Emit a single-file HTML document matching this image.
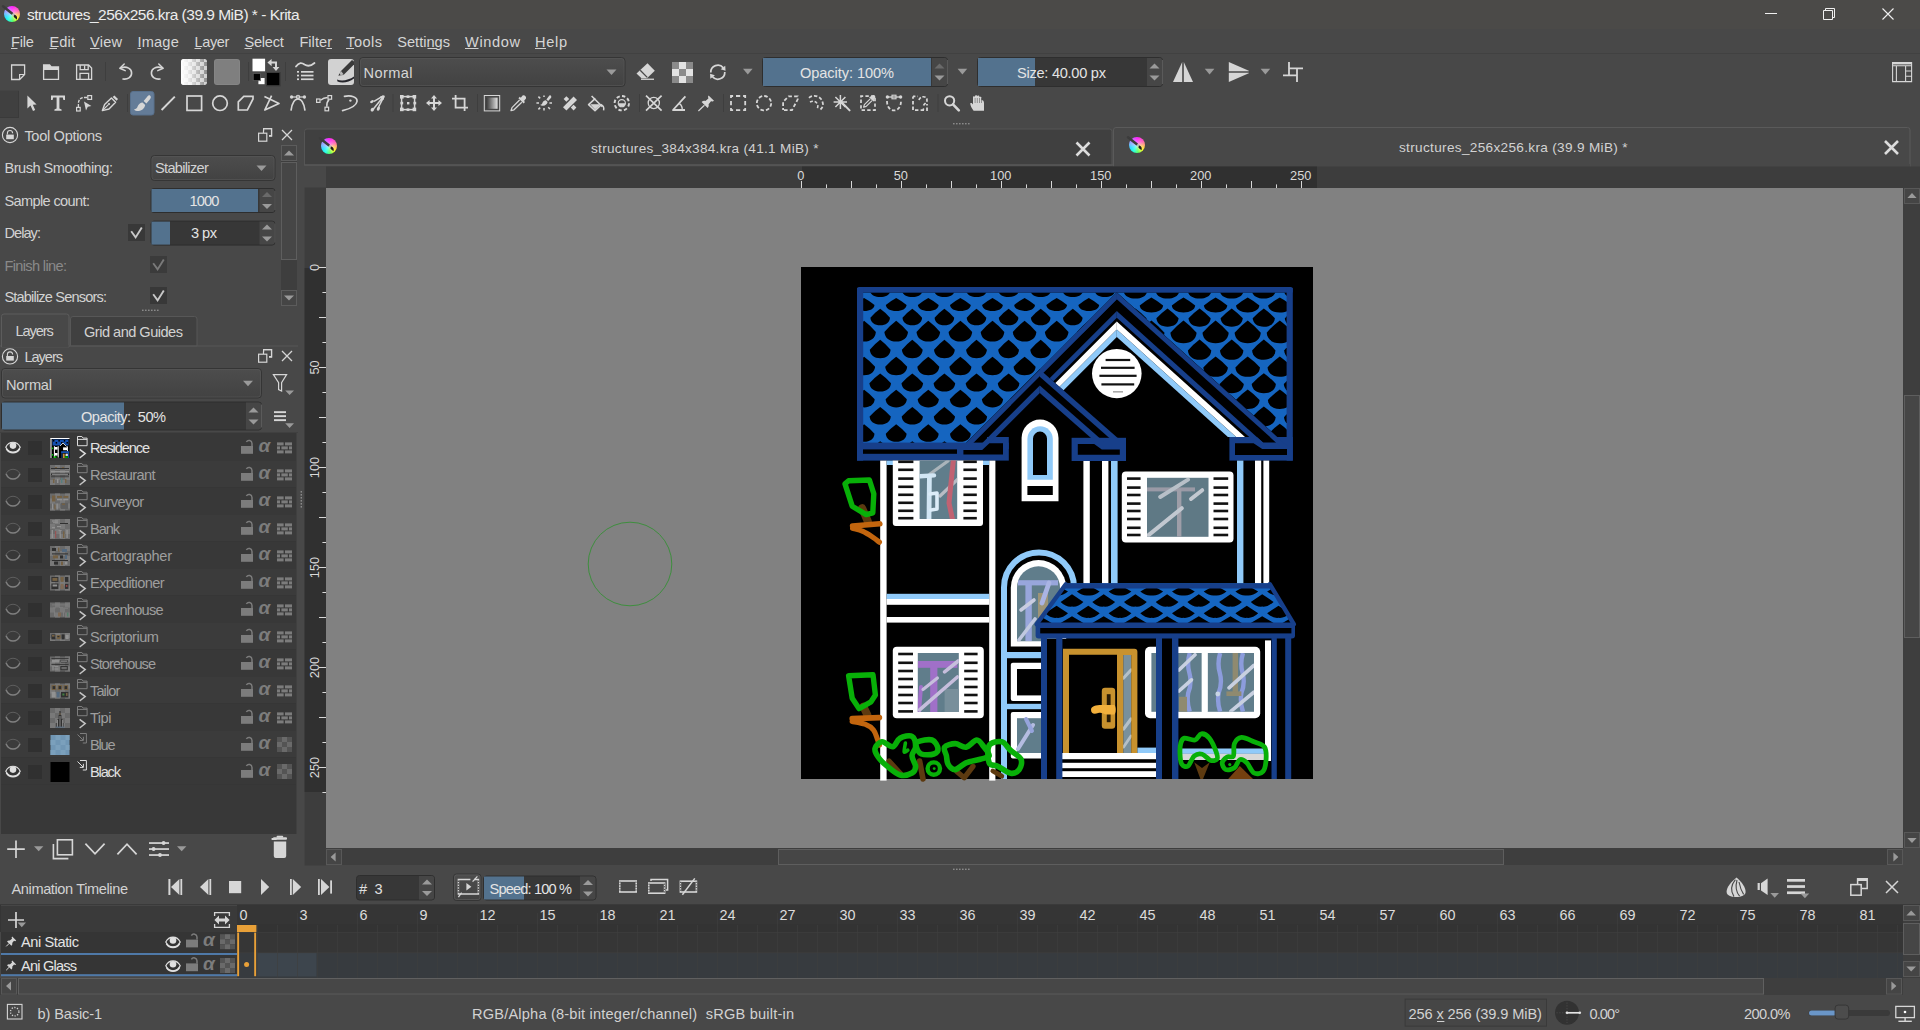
<!DOCTYPE html>
<html lang="en"><head><meta charset="utf-8"><title>structures_256x256.kra (39.9 MiB) * - Krita</title>
<style>
html,body{margin:0;padding:0;background:#484848;overflow:hidden}
body{width:1920px;height:1030px}
svg{display:block}
body{position:relative}
.klogo{position:absolute;border-radius:50%;background:linear-gradient(135deg,#a070ff,#ff50c8 40%,#ffd050 72%,#40ffb0);background:radial-gradient(circle at 50% 52%,rgba(255,255,255,.6) 0,rgba(255,255,255,.25) 32%,rgba(255,255,255,0) 62%),conic-gradient(from 0deg,#ff22ff 0deg,#ff66b8 60deg,#ffc060 100deg,#ffff28 132deg,#5cff64 172deg,#22ffe0 210deg,#22e4ff 240deg,#86b0ff 282deg,#c66cff 322deg,#ff22ff 360deg)}
text{font-family:"Liberation Sans",sans-serif;}
</style></head><body>
<svg width="1920" height="1030" viewBox="0 0 1920 1030">
<defs>
<linearGradient id="cg" x1="0" y1="0" x2="0" y2="1"><stop offset="0" stop-color="#4d4d4d"/><stop offset="1" stop-color="#424242"/></linearGradient>
<linearGradient id="gr1" x1="0" y1="0" x2="1" y2="0"><stop offset="0" stop-color="#3a3a3a"/><stop offset="1" stop-color="#e0e0e0"/></linearGradient>
<linearGradient id="gsw" x1="0" y1="0" x2="1" y2="0"><stop offset="0" stop-color="#fff"/><stop offset="0.3" stop-color="#fff" stop-opacity="0.8"/><stop offset="1" stop-color="#fff" stop-opacity="0"/></linearGradient>
<linearGradient id="kg" gradientUnits="objectBoundingBox" x1="0" y1="0.2" x2="1" y2="0.8"><stop offset="0" stop-color="#3a6cf0"/><stop offset="0.25" stop-color="#a040f0"/><stop offset="0.5" stop-color="#ff30d0"/><stop offset="0.8" stop-color="#ff6090"/><stop offset="1" stop-color="#ffb040"/></linearGradient>
<linearGradient id="kw" x1="0.2" y1="0" x2="0.5" y2="1"><stop offset="0.35" stop-color="#fff" stop-opacity="0"/><stop offset="0.6" stop-color="#20e0ff" stop-opacity="0.9"/><stop offset="0.8" stop-color="#30f080"/><stop offset="1" stop-color="#f0f040"/></linearGradient>
<pattern id="chk" width="8" height="8" patternUnits="userSpaceOnUse"><rect width="8" height="8" fill="#fff"/><rect width="4" height="4" fill="#b0b0b0"/><rect x="4" y="4" width="4" height="4" fill="#b0b0b0"/></pattern>
<pattern id="chkd" width="10" height="10" patternUnits="userSpaceOnUse"><rect width="10" height="10" fill="#6e6e6e"/><rect width="5" height="5" fill="#585858"/><rect x="5" y="5" width="5" height="5" fill="#585858"/></pattern>
</defs>
<g id="titlebar">
<rect x="0" y="0" width="1920" height="29" fill="#4b4a48"/>
<text x="27" y="20" font-size="15.5" fill="#ececec" textLength="272.5" lengthAdjust="spacing" xml:space="preserve">structures_256x256.kra (39.9 MiB) * - Krita</text>
<rect x="1765" y="13" width="12" height="1" fill="#f0f0f0"/>
<path d="M1823.5 10.5 h9 v9 h-9z" fill="none" stroke="#f0f0f0" stroke-width="1" stroke-linejoin="miter" stroke-linecap="butt"/>
<path d="M1825.5 10.5 v-2 h9 v9 h-2" fill="none" stroke="#f0f0f0" stroke-width="1" stroke-linejoin="miter" stroke-linecap="butt"/>
<path d="M1882.5 8.5 L1893.5 19.5 M1893.5 8.5 L1882.5 19.5" fill="none" stroke="#f0f0f0" stroke-width="1.1" stroke-linejoin="miter" stroke-linecap="butt"/>
</g>
<g id="menubar">
<rect x="0" y="29" width="1920" height="24" fill="#484848"/>
<rect x="0" y="53" width="1920" height="1" fill="#414141"/>
<text x="11" y="47" font-size="14.6" fill="#d6d6d6" textLength="22.75" lengthAdjust="spacing" xml:space="preserve">File</text>
<rect x="11" y="48" width="6.5" height="1" fill="#d0d0d0"/>
<text x="49.4" y="47" font-size="14.6" fill="#d6d6d6" textLength="25.6" lengthAdjust="spacing" xml:space="preserve">Edit</text>
<rect x="49.5" y="48" width="7.5" height="1" fill="#d0d0d0"/>
<text x="90" y="47" font-size="14.6" fill="#d6d6d6" textLength="32" lengthAdjust="spacing" xml:space="preserve">View</text>
<rect x="90" y="48" width="9.5" height="1" fill="#d0d0d0"/>
<text x="137.5" y="47" font-size="14.6" fill="#d6d6d6" textLength="41.25" lengthAdjust="spacing" xml:space="preserve">Image</text>
<rect x="137.5" y="48" width="3.5" height="1" fill="#d0d0d0"/>
<text x="194.4" y="47" font-size="14.6" fill="#d6d6d6" textLength="35" lengthAdjust="spacing" xml:space="preserve">Layer</text>
<rect x="194.5" y="48" width="6.5" height="1" fill="#d0d0d0"/>
<text x="244.4" y="47" font-size="14.6" fill="#d6d6d6" textLength="39.35" lengthAdjust="spacing" xml:space="preserve">Select</text>
<rect x="244.5" y="48" width="7.5" height="1" fill="#d0d0d0"/>
<text x="299.4" y="47" font-size="14.6" fill="#d6d6d6" textLength="32.6" lengthAdjust="spacing" xml:space="preserve">Filter</text>
<rect x="326.5" y="48" width="5.5" height="1" fill="#d0d0d0"/>
<text x="346.25" y="47" font-size="14.6" fill="#d6d6d6" textLength="35.75" lengthAdjust="spacing" xml:space="preserve">Tools</text>
<rect x="346" y="48" width="8" height="1" fill="#d0d0d0"/>
<text x="397.25" y="47" font-size="14.6" fill="#d6d6d6" textLength="52.75" lengthAdjust="spacing" xml:space="preserve">Settings</text>
<rect x="427.5" y="48" width="8.5" height="1" fill="#d0d0d0"/>
<text x="465" y="47" font-size="14.6" fill="#d6d6d6" textLength="55" lengthAdjust="spacing" xml:space="preserve">Window</text>
<rect x="465" y="48" width="13.5" height="1" fill="#d0d0d0"/>
<text x="535" y="47" font-size="14.6" fill="#d6d6d6" textLength="32" lengthAdjust="spacing" xml:space="preserve">Help</text>
<rect x="535" y="48" width="11" height="1" fill="#d0d0d0"/>
</g>
<g id="toolbar1">
<path d="M11.6 65 h13 v9.5 l-5 5 h-8z" fill="none" stroke="#d6d6d6" stroke-width="1.3" stroke-linejoin="miter" stroke-linecap="butt"/>
<path d="M24.6 74.5 h-5 v5" fill="none" stroke="#d6d6d6" stroke-width="1.2" stroke-linejoin="miter" stroke-linecap="butt"/>
<path d="M43.6 79.4 v-14.4 h6 l1.6 2 h7.3 v12.4z" fill="none" stroke="#d6d6d6" stroke-width="1.3" stroke-linejoin="miter" stroke-linecap="butt"/>
<path d="M43.6 65 h6 l1.6 2 h7.3 v3 h-14.9z" fill="#d6d6d6"/>
<path d="M76.6 65 h12 l3 3 v11.4 h-15z" fill="none" stroke="#d6d6d6" stroke-width="1.3" stroke-linejoin="miter" stroke-linecap="butt"/>
<path d="M80.2 65 v4.6 h8 v-4.6 M84.6 65.5 v3.5" fill="none" stroke="#d6d6d6" stroke-width="1.3" stroke-linejoin="miter" stroke-linecap="butt"/>
<path d="M80 79.4 v-6 h8.6 v6" fill="none" stroke="#d6d6d6" stroke-width="1.3" stroke-linejoin="miter" stroke-linecap="butt"/>
<rect x="105" y="62" width="1" height="19" fill="#3e3e3e"/>
<path d="M121.5 67.6 C127 66.2 131.6 68.5 131.6 73 C131.6 77.5 127.5 79.6 123 79" fill="none" stroke="#d6d6d6" stroke-width="1.6" stroke-linejoin="miter" stroke-linecap="round"/>
<path d="M124.2 64 L119.8 68.2 L125.2 70.6" fill="none" stroke="#d6d6d6" stroke-width="1.5" stroke-linejoin="round" stroke-linecap="round"/>
<path d="M161.5 67.6 C156 66.2 151.4 68.5 151.4 73 C151.4 77.5 155.5 79.6 160 79" fill="none" stroke="#d6d6d6" stroke-width="1.6" stroke-linejoin="miter" stroke-linecap="round"/>
<path d="M158.8 64 L163.2 68.2 L157.8 70.6" fill="none" stroke="#d6d6d6" stroke-width="1.5" stroke-linejoin="round" stroke-linecap="round"/>
<clipPath id="cp1"><rect x="181" y="59" width="26" height="26" rx="3"/></clipPath>
<g clip-path="url(#cp1)">
<rect x="181" y="59" width="26" height="26" fill="#8c8c8c"/>
<rect x="180" y="58" width="4" height="4" fill="#cfcfcf"/>
<rect x="180" y="66" width="4" height="4" fill="#cfcfcf"/>
<rect x="180" y="74" width="4" height="4" fill="#cfcfcf"/>
<rect x="180" y="82" width="4" height="4" fill="#cfcfcf"/>
<rect x="184" y="62" width="4" height="4" fill="#cfcfcf"/>
<rect x="184" y="70" width="4" height="4" fill="#cfcfcf"/>
<rect x="184" y="78" width="4" height="4" fill="#cfcfcf"/>
<rect x="188" y="58" width="4" height="4" fill="#cfcfcf"/>
<rect x="188" y="66" width="4" height="4" fill="#cfcfcf"/>
<rect x="188" y="74" width="4" height="4" fill="#cfcfcf"/>
<rect x="188" y="82" width="4" height="4" fill="#cfcfcf"/>
<rect x="192" y="62" width="4" height="4" fill="#cfcfcf"/>
<rect x="192" y="70" width="4" height="4" fill="#cfcfcf"/>
<rect x="192" y="78" width="4" height="4" fill="#cfcfcf"/>
<rect x="196" y="58" width="4" height="4" fill="#cfcfcf"/>
<rect x="196" y="66" width="4" height="4" fill="#cfcfcf"/>
<rect x="196" y="74" width="4" height="4" fill="#cfcfcf"/>
<rect x="196" y="82" width="4" height="4" fill="#cfcfcf"/>
<rect x="200" y="62" width="4" height="4" fill="#cfcfcf"/>
<rect x="200" y="70" width="4" height="4" fill="#cfcfcf"/>
<rect x="200" y="78" width="4" height="4" fill="#cfcfcf"/>
<rect x="204" y="58" width="4" height="4" fill="#cfcfcf"/>
<rect x="204" y="66" width="4" height="4" fill="#cfcfcf"/>
<rect x="204" y="74" width="4" height="4" fill="#cfcfcf"/>
<rect x="204" y="82" width="4" height="4" fill="#cfcfcf"/>
<rect x="181" y="59" width="26" height="26" fill="url(#gsw)"/>
</g>
<rect x="214" y="59" width="26" height="26" fill="#858585" rx="3"/>
<rect x="215" y="60" width="24" height="24" fill="#7f7f7f" rx="2"/>
<rect x="248" y="62" width="1" height="19" fill="#3e3e3e"/>
<rect x="252.5" y="58.7" width="12.6" height="12.6" fill="#ffffff"/>
<rect x="267" y="73" width="12.6" height="12.4" fill="#000000"/>
<rect x="266.5" y="72.5" width="13.6" height="13.4" fill="none" stroke="#3a3a3a" stroke-width="1"/>
<rect x="258.4" y="78" width="6.2" height="6.2" fill="#ffffff"/>
<rect x="253.6" y="73.8" width="6.4" height="6.4" fill="#000000"/>
<rect x="253.1" y="73.3" width="7.4" height="7.4" fill="none" stroke="#555" stroke-width="0.8"/>
<path d="M267.4 62.6 L271.6 59 V61.6 H277 V67 H279.4 L276 71 L272.6 67 H275 V63.6 H271.6 V66.2z" fill="#d6d6d6"/>
<rect x="285" y="62" width="1" height="19" fill="#3e3e3e"/>
<path d="M296 66.5 C299 62 302 62.5 304.5 64.5 C307.5 66.5 311 66 314.5 63" fill="none" stroke="#d6d6d6" stroke-width="1.8" stroke-linejoin="miter" stroke-linecap="round"/>
<rect x="297" y="71" width="2" height="1.7" fill="#d6d6d6"/>
<rect x="301" y="71" width="12.5" height="1.7" fill="#d6d6d6"/>
<rect x="297" y="74.7" width="2" height="1.7" fill="#d6d6d6"/>
<rect x="301" y="74.7" width="12.5" height="1.7" fill="#d6d6d6"/>
<rect x="297" y="78.4" width="2" height="1.7" fill="#d6d6d6"/>
<rect x="301" y="78.4" width="12.5" height="1.7" fill="#d6d6d6"/>
<rect x="328" y="59" width="26" height="26" fill="#d2d2d2" rx="3"/>
<path d="M337 79.5 C342 81.5 349 80 354 76.5 L354 78.5 C349 82.5 342 83.5 337.5 81.5z" fill="#26262c"/>
<path d="M338.5 75.5 L341 71 L352 60 L354 61.5 L354 64.5 L343.5 75 z" fill="#3a3a3a"/>
<path d="M338.5 75.5 L341 71 L343.8 74.6z" fill="#bbb"/>
<path d="M338.5 75.5 l1 -1.8 l1 1.2z" fill="#222"/>
<rect x="359.5" y="57.5" width="265.5" height="29" fill="url(#cg)" stroke="#353535" stroke-width="1" rx="3.5"/>
<rect x="360.5" y="58.5" width="263.5" height="27" fill="none" stroke="#585858" stroke-width="1" rx="2.5" opacity="0.6"/>
<path d="M606.5 69.5 L616.5 69.5 L611.5 75Z" fill="#9a9a9a"/>
<text x="363.5" y="77.5" font-size="14.6" fill="#d6d6d6" textLength="49" lengthAdjust="spacing" xml:space="preserve">Normal</text>
<path d="M647.5 63.2 L654.8 70.8 L647 78.2 H641.5 L636.5 73.5z" fill="#d6d6d6"/>
<rect x="641" y="78.6" width="13" height="1.3" fill="#d6d6d6"/>
<path d="M640.2 70.2 L647.2 77.4" fill="none" stroke="#484848" stroke-width="1.3" stroke-linejoin="miter" stroke-linecap="butt"/>
<rect x="672" y="62" width="7" height="7" fill="#8a8a8a"/>
<rect x="672" y="69" width="7" height="7" fill="#e2e2e2"/>
<rect x="672" y="76" width="7" height="7" fill="#8a8a8a"/>
<rect x="679" y="62" width="7" height="7" fill="#e2e2e2"/>
<rect x="679" y="69" width="7" height="7" fill="#8a8a8a"/>
<rect x="679" y="76" width="7" height="7" fill="#e2e2e2"/>
<rect x="686" y="62" width="7" height="7" fill="#8a8a8a"/>
<rect x="686" y="69" width="7" height="7" fill="#e2e2e2"/>
<rect x="686" y="76" width="7" height="7" fill="#8a8a8a"/>
<path d="M710.8 72.44 A7 7 0 0 1 723.32 67.89" fill="none" stroke="#d6d6d6" stroke-width="1.7" stroke-linejoin="miter" stroke-linecap="butt"/>
<path d="M725.53 70.73 L725.23 65.63 L720.66 69.2Z" fill="#d6d6d6"/>
<path d="M724.8 71.96 A7 7 0 0 1 712.28 76.51" fill="none" stroke="#d6d6d6" stroke-width="1.7" stroke-linejoin="miter" stroke-linecap="butt"/>
<path d="M710.07 73.67 L710.37 78.77 L714.94 75.2Z" fill="#d6d6d6"/>
<path d="M743 68.8 L752.6 68.8 L747.8 74.6Z" fill="#9a9a9a"/>
<rect x="762.5" y="57.5" width="185" height="29" fill="#373737" stroke="#2e2e2e" stroke-width="1" rx="3"/>
<path d="M763 58 H931 V86 H763 Z" fill="#53728e"/>
<path d="M932 58 H945 a2 2 0 0 1 2 2 V84 a2 2 0 0 1 -2 2 H932Z" fill="#464646"/>
<line x1="947.5" y1="60" x2="947.5" y2="84" stroke="#5a5a5a" stroke-width="1" stroke-linecap="butt"/>
<path d="M934.5 68.5 L944.5 68.5 L939.5 63.5Z" fill="#6a6a6a"/>
<path d="M934.5 75.5 L944.5 75.5 L939.5 80.5Z" fill="#9a9a9a"/>
<text x="800" y="78" font-size="14.6" fill="#e4e4e4" textLength="94" lengthAdjust="spacing" xml:space="preserve">Opacity: 100%</text>
<path d="M957.6 68.8 L967.2 68.8 L962.4 74.6Z" fill="#9a9a9a"/>
<rect x="977.5" y="57.5" width="185" height="29" fill="#373737" stroke="#2e2e2e" stroke-width="1" rx="3"/>
<path d="M978 58 H1035 V86 H978 Z" fill="#53728e"/>
<path d="M1147 58 H1160 a2 2 0 0 1 2 2 V84 a2 2 0 0 1 -2 2 H1147Z" fill="#464646"/>
<line x1="1162.5" y1="60" x2="1162.5" y2="84" stroke="#5a5a5a" stroke-width="1" stroke-linecap="butt"/>
<path d="M1149.5 68.5 L1159.5 68.5 L1154.5 63.5Z" fill="#9a9a9a"/>
<path d="M1149.5 75.5 L1159.5 75.5 L1154.5 80.5Z" fill="#9a9a9a"/>
<text x="1017" y="78" font-size="14.6" fill="#e4e4e4" textLength="89" lengthAdjust="spacing" xml:space="preserve">Size: 40.00 px</text>
<path d="M1182.2 62 V82 H1173z" fill="#d6d6d6"/>
<path d="M1183.8 62 V82 H1193z" fill="#d6d6d6"/>
<path d="M1204.8 68.8 L1214.4 68.8 L1209.6 74.6Z" fill="#9a9a9a"/>
<path d="M1228.8 62 L1248.8 70.8 V71.2 H1228.8z" fill="#d6d6d6"/>
<path d="M1228.8 82 L1248.8 73.2 V72.8 H1228.8z" fill="#d6d6d6"/>
<path d="M1260.6 68.8 L1270.2 68.8 L1265.4 74.6Z" fill="#9a9a9a"/>
<path d="M1289 62 V75.3 M1283 75.3 H1297.8 M1297 82 V68.3 M1289 68.3 H1303" fill="none" stroke="#d6d6d6" stroke-width="1.8" stroke-linejoin="miter" stroke-linecap="butt"/>
<path d="M1892.6 62.6 h19 v19 h-19z M1892.6 65.8 h19 M1896.4 65.8 v15.8 M1905.6 65.8 v15.8 M1905.6 71 h6 M1905.6 76.2 h6" fill="none" stroke="#d6d6d6" stroke-width="1.1" stroke-linejoin="miter" stroke-linecap="butt"/>
<rect x="1892" y="62" width="20" height="2.4" fill="#d6d6d6"/>
</g>
<g id="toolbox">
<rect x="0" y="90" width="19" height="28" fill="#404040"/>
<rect x="18" y="90" width="1" height="28" fill="#3a3a3a"/>
<rect x="0" y="117" width="19" height="1" fill="#3a3a3a"/>
<rect x="0" y="90" width="19" height="1" fill="#444"/>
<path d="M27.4 95.4 V108.6 L30.5 105.6 L33 111 L35.2 110 L32.8 104.8 L36.6 104.6z" fill="#d6d6d6"/>
<path d="M51 95.4 H65 V100 H63.4 L62.8 97.6 H59.4 V108.6 L61.6 109.4 V110.8 H54.4 V109.4 L56.6 108.6 V97.6 H53.2 L52.6 100 H51z" fill="#d6d6d6"/>
<rect x="76.6" y="107.4" width="3.6" height="3.6" fill="none" stroke="#d6d6d6" stroke-width="1.2"/>
<rect x="87.8" y="95.6" width="3.8" height="3.8" fill="none" stroke="#d6d6d6" stroke-width="1.2"/>
<path d="M78.4 107 V103.5 C78.4 99.5 81 97.5 84.5 97.5 H87.5" fill="none" stroke="#d6d6d6" stroke-width="1.3" stroke-linejoin="miter" stroke-linecap="butt" stroke-dasharray="3 1.2"/>
<path d="M84 101.6 L91.4 106 L87.8 106.8 L86 110.4z" fill="#d6d6d6"/>
<path d="M102.4 110.6 L104.6 104.4 L111.4 98 L115.6 102.2 L109 109 z" fill="none" stroke="#d6d6d6" stroke-width="1.4" stroke-linejoin="round" stroke-linecap="butt"/>
<path d="M102.6 110.4 L108.4 104.6" fill="none" stroke="#d6d6d6" stroke-width="1.2" stroke-linejoin="miter" stroke-linecap="butt"/>
<circle cx="109" cy="104" r="1.1" fill="#d6d6d6"/>
<path d="M112.6 97 L114.4 95.4 L118 99 L116.6 100.8z" fill="#d6d6d6"/>
<rect x="127" y="94" width="1" height="18" fill="#3e3e3e"/>
<rect x="130.5" y="91.5" width="23.5" height="23.5" fill="#647c98" stroke="#58708c" stroke-width="1" rx="2.5"/>
<path d="M150 95.6 C151.4 96.6 151 98.4 149.6 99.8 L146.4 103.6 L143.6 101 L147 97 C148 95.6 149.2 95 150 95.6z" fill="#d6d6d6"/>
<path d="M145.6 104.4 L142.8 101.8" fill="none" stroke="#647c98" stroke-width="1" stroke-linejoin="miter" stroke-linecap="butt"/>
<path d="M142.6 102.4 L145.2 105 C144.6 108 142.4 110.6 138.6 110.9 C136.8 111 135 110.6 134 109.4 C136 109.4 137 108.4 137.6 106.6 C138.4 104 140.4 102.4 142.6 102.4z" fill="#d6d6d6"/>
<line x1="161.6" y1="110" x2="174.8" y2="96.6" stroke="#d6d6d6" stroke-width="1.9" stroke-linecap="butt"/>
<rect x="187" y="96" width="14.6" height="14.4" fill="none" stroke="#d6d6d6" stroke-width="1.7"/>
<circle cx="220" cy="103.2" r="7.3" fill="none" stroke="#d6d6d6" stroke-width="1.7"/>
<path d="M238.3 110 V101.8 L243.8 96.3 H253 V99 L247.4 110z" fill="none" stroke="#d6d6d6" stroke-width="1.7" stroke-linejoin="miter" stroke-linecap="butt"/>
<path d="M271.6 95.6 L264.8 110 L279 103.4 L264.4 96.6" fill="none" stroke="#d6d6d6" stroke-width="1.7" stroke-linejoin="round" stroke-linecap="butt"/>
<path d="M291 110.6 C292 103 294 99 298 99 C302 99 304 103 305 110.6" fill="none" stroke="#d6d6d6" stroke-width="1.7" stroke-linejoin="miter" stroke-linecap="butt"/>
<line x1="292.5" y1="97" x2="303.5" y2="97" stroke="#d6d6d6" stroke-width="1.2" stroke-linecap="butt"/>
<circle cx="291.6" cy="97" r="1.7" fill="#d6d6d6"/>
<circle cx="304.4" cy="97" r="1.7" fill="#d6d6d6"/>
<circle cx="298" cy="97" r="1.7" fill="none" stroke="#d6d6d6" stroke-width="1.1"/>
<rect x="316.6" y="99" width="3.4" height="3.4" fill="none" stroke="#d6d6d6" stroke-width="1.2"/>
<rect x="328" y="95.6" width="3.6" height="3.6" fill="none" stroke="#d6d6d6" stroke-width="1.2"/>
<rect x="325" y="107.2" width="3.6" height="3.6" fill="none" stroke="#d6d6d6" stroke-width="1.2"/>
<path d="M320.4 100.2 C323 98 325.5 97.4 327.6 97.4 M329 99.6 C327 101.5 326.6 104 326.8 106.8" fill="none" stroke="#d6d6d6" stroke-width="1.5" stroke-linejoin="miter" stroke-linecap="butt"/>
<path d="M344.5 96.4 C351 95 357.6 97 357 101.5 C356.4 106 349 109 342.6 110.6" fill="none" stroke="#d6d6d6" stroke-width="1.7" stroke-linejoin="miter" stroke-linecap="round"/>
<circle cx="350.4" cy="100.6" r="1.2" fill="#d6d6d6"/>
<path d="M383.6 95.6 L374 101.4 M384.2 96.2 L378.6 107 M383.8 96 L373.4 109" fill="none" stroke="#d6d6d6" stroke-width="1.5" stroke-linejoin="miter" stroke-linecap="butt"/>
<ellipse cx="372" cy="101.6" rx="2" ry="1.3" fill="#d6d6d6" transform="rotate(-25 372 101.6)"/>
<ellipse cx="378.4" cy="108.6" rx="1.5" ry="2.2" fill="#d6d6d6" transform="rotate(20 378.4 108.6)"/>
<ellipse cx="372.4" cy="109.6" rx="1.6" ry="2" fill="#d6d6d6" transform="rotate(40 372.4 109.6)"/>
<path d="M384.6 95.4 L380 96.4 L383.6 100z" fill="#d6d6d6"/>
<rect x="392.5" y="94" width="1" height="18" fill="#3e3e3e"/>
<rect x="401.6" y="96.6" width="13" height="13" fill="none" stroke="#d6d6d6" stroke-width="1.5"/>
<rect x="400" y="95" width="3.6" height="3.6" fill="#d6d6d6"/>
<rect x="412.6" y="95" width="3.6" height="3.6" fill="#d6d6d6"/>
<rect x="400" y="107.6" width="3.6" height="3.6" fill="#d6d6d6"/>
<rect x="412.6" y="107.6" width="3.6" height="3.6" fill="#d6d6d6"/>
<rect x="406.6" y="95.4" width="2.8" height="2.6" fill="#d6d6d6"/>
<rect x="406.6" y="108.4" width="2.8" height="2.6" fill="#d6d6d6"/>
<rect x="400.4" y="101.8" width="2.8" height="2.6" fill="#d6d6d6"/>
<rect x="413.4" y="101.8" width="2.8" height="2.6" fill="#d6d6d6"/>
<rect x="407" y="102" width="2.4" height="2.4" fill="#d6d6d6"/>
<path d="M434 95 L437 98.6 H435 V102 H438.4 V100 L442 103 L438.4 106 V104 H435 V107.4 H437 L434 111 L431 107.4 H433 V104 H429.6 V106 L426 103 L429.6 100 V102 H433 V98.6 H431z" fill="#d6d6d6"/>
<path d="M455.6 95 V107.6 H468 M452 98.6 H464.6 V111" fill="none" stroke="#d6d6d6" stroke-width="1.8" stroke-linejoin="miter" stroke-linecap="butt"/>
<rect x="477" y="94" width="1" height="18" fill="#3e3e3e"/>
<rect x="484.3" y="95.5" width="15.4" height="15.4" fill="none" stroke="#d6d6d6" stroke-width="1"/>
<rect x="486.4" y="97.6" width="11.2" height="11.2" fill="url(#gr1)"/>
<path d="M522.6 95.4 C524.4 94.6 526.6 96.4 526 98.4 L524 101 L525 102 L523.6 103.4 L518.4 98.2 L519.8 96.8 L520.8 97.8z" fill="#d6d6d6"/>
<path d="M519.6 100 L512 107.6 L511 110.6 L514 109.8 L521.8 102.2" fill="none" stroke="#d6d6d6" stroke-width="1.3" stroke-linejoin="round" stroke-linecap="butt"/>
<path d="M550.6 95.4 C551.8 96.2 551.4 97.6 550.4 98.6 L548.2 101 L546.4 99.4 L548.6 96.6 C549.2 95.6 550 95 550.6 95.4z" fill="#d6d6d6"/>
<path d="M545.8 100.2 L547.6 102 C547.2 104 545.6 105.6 543 105.8 C541.8 105.9 540.8 105.6 540 104.8 C541.4 104.8 542 104.2 542.4 103 C543 101.2 544.4 100.2 545.8 100.2z" fill="#d6d6d6"/>
<line x1="536.4" y1="103" x2="539" y2="103" stroke="#d6d6d6" stroke-width="1.5" stroke-linecap="butt"/>
<line x1="549.4" y1="103" x2="552" y2="103" stroke="#d6d6d6" stroke-width="1.5" stroke-linecap="butt"/>
<line x1="544" y1="108" x2="544" y2="110.6" stroke="#d6d6d6" stroke-width="1.5" stroke-linecap="butt"/>
<line x1="538.4" y1="96.6" x2="540.2" y2="98.4" stroke="#d6d6d6" stroke-width="1.5" stroke-linecap="butt"/>
<line x1="548.2" y1="107.2" x2="550" y2="109" stroke="#d6d6d6" stroke-width="1.5" stroke-linecap="butt"/>
<line x1="538.4" y1="109.4" x2="540.2" y2="107.6" stroke="#d6d6d6" stroke-width="1.5" stroke-linecap="butt"/>
<line x1="544" y1="95.4" x2="544" y2="97" stroke="#d6d6d6" stroke-width="1.5" stroke-linecap="butt"/>
<path d="M563 107.2 L573.6 96.6 L577 100 L566.4 110.6z" fill="#d6d6d6"/>
<path d="M563.6 99 L566.4 96.2 L569.2 99 L566.4 101.8z" fill="#d6d6d6"/>
<path d="M570.8 107.6 L573.6 104.8 L576.4 107.6 L573.6 110.4z" fill="#d6d6d6"/>
<path d="M591.6 96 L602.4 106.8 M595.4 98.4 L588.6 104.6 L595 110.6 L601.6 104.4" fill="none" stroke="#d6d6d6" stroke-width="1.6" stroke-linejoin="round" stroke-linecap="butt"/>
<path d="M590.2 104.2 H600.8 L595 109.6z" fill="#d6d6d6"/>
<path d="M601 104.6 C603 105.4 604.2 107.6 603.6 110.4" fill="none" stroke="#d6d6d6" stroke-width="1.5" stroke-linejoin="miter" stroke-linecap="butt"/>
<circle cx="621.8" cy="103.2" r="7.2" fill="none" stroke="#d6d6d6" stroke-width="1.9" stroke-dasharray="3.4 2.25"/>
<circle cx="621.8" cy="103.2" r="3.6" fill="none" stroke="#d6d6d6" stroke-width="1.1"/>
<path d="M618.2 103.2 A3.6 3.6 0 0 0 625.4 103.2z" fill="#d6d6d6"/>
<rect x="639" y="94" width="1" height="18" fill="#3e3e3e"/>
<circle cx="653.8" cy="103" r="5.6" fill="none" stroke="#d6d6d6" stroke-width="1.3"/>
<path d="M646 95.6 L661.6 110.6 M661.6 95.6 L646 110.6" fill="none" stroke="#d6d6d6" stroke-width="1.7" stroke-linejoin="miter" stroke-linecap="butt"/>
<path d="M685.4 96.4 L673 110 H685" fill="none" stroke="#d6d6d6" stroke-width="1.8" stroke-linejoin="round" stroke-linecap="butt"/>
<path d="M679.4 103.6 C681.4 105 682.4 107.4 682.2 110" fill="none" stroke="#d6d6d6" stroke-width="1.4" stroke-linejoin="miter" stroke-linecap="butt"/>
<path d="M708.6 95.4 L714 100.8 L712.8 101.6 L711 101.2 L708.6 104.2 C709 105.6 708.6 107 707.6 108 L701.6 102 C702.6 101 704 100.6 705.4 101 L708.4 98.6 L708 96.8z" fill="#d6d6d6"/>
<line x1="704.4" y1="105.2" x2="698.4" y2="111" stroke="#d6d6d6" stroke-width="1.2" stroke-linecap="butt"/>
<rect x="723" y="94" width="1" height="18" fill="#3e3e3e"/>
<path d="M731 96 H745.2 V110.2 H731Z" fill="none" stroke="#d6d6d6" stroke-width="1.8" stroke-linejoin="miter" stroke-linecap="butt" stroke-dasharray="4.2 2.9" stroke-dashoffset="2.1"/>
<circle cx="764" cy="103.2" r="7.2" fill="none" stroke="#d6d6d6" stroke-width="1.8" stroke-dasharray="3.6 2.05"/>
<path d="M783.1 110.1 V101.8 L788.6 96.3 H797.7 V99.4 L792 110.1z" fill="none" stroke="#d6d6d6" stroke-width="1.8" stroke-linejoin="miter" stroke-linecap="butt" stroke-dasharray="3.6 2.2" stroke-dashoffset="1.6"/>
<path d="M809 97.8 C812 95 818 95 821 99 C824 103 823.6 108 819 110.4" fill="none" stroke="#d6d6d6" stroke-width="1.8" stroke-linejoin="miter" stroke-linecap="butt" stroke-dasharray="3.4 2"/>
<path d="M810 102 C813 100.4 816 101.4 817.4 104 C818.4 106 817.6 108 816.6 109.6" fill="none" stroke="#d6d6d6" stroke-width="1.6" stroke-linejoin="miter" stroke-linecap="butt" stroke-dasharray="3 1.8"/>
<path d="M841.4 102 L849.6 110.4" fill="none" stroke="#d6d6d6" stroke-width="2" stroke-linejoin="miter" stroke-linecap="round"/>
<path d="M840.4 95 V109 M833.6 102 H847 M835.4 97 L845.4 107 M845.4 97 L835.4 107" fill="none" stroke="#d6d6d6" stroke-width="1.5" stroke-linejoin="miter" stroke-linecap="butt"/>
<path d="M861 96.2 H875 V110.2 H861Z" fill="none" stroke="#d6d6d6" stroke-width="1.7" stroke-linejoin="miter" stroke-linecap="butt" stroke-dasharray="3.4 2.2" stroke-dashoffset="1.2"/>
<path d="M872.6 95.2 C874 94.6 875.8 96 875.2 97.6 L873.8 99.6 L874.6 100.4 L873.4 101.6 L869.2 97.4 L870.4 96.2 L871.2 97z" fill="#d6d6d6"/>
<path d="M870.2 98.8 L864.4 104.6 L863.6 107.2 L866.2 106.4 L872 100.6" fill="none" stroke="#d6d6d6" stroke-width="1.2" stroke-linejoin="round" stroke-linecap="butt"/>
<path d="M887 101 C887 107 890 110.4 894 110.4 C898 110.4 901 107 901 101" fill="none" stroke="#d6d6d6" stroke-width="1.8" stroke-linejoin="miter" stroke-linecap="butt" stroke-dasharray="3.4 2.1"/>
<line x1="888" y1="97" x2="900" y2="97" stroke="#d6d6d6" stroke-width="1.3" stroke-linecap="butt"/>
<circle cx="887.4" cy="97" r="1.7" fill="#d6d6d6"/>
<circle cx="900.6" cy="97" r="1.7" fill="#d6d6d6"/>
<rect x="892" y="95.2" width="4" height="3.6" fill="none" stroke="#d6d6d6" stroke-width="1.1"/>
<path d="M913 96.4 H918 M913 96.4 V110.2 H927 V104" fill="none" stroke="#d6d6d6" stroke-width="1.8" stroke-linejoin="miter" stroke-linecap="butt" stroke-dasharray="3.4 2.2" stroke-dashoffset="1"/>
<path d="M919 100 C920 96 926.6 95.4 927 100 C927.2 103 923.4 103.6 923.4 106.6" fill="none" stroke="#d6d6d6" stroke-width="1.7" stroke-linejoin="miter" stroke-linecap="butt" stroke-dasharray="3.2 1.6"/>
<circle cx="923.4" cy="109.2" r="0.9" fill="#d6d6d6"/>
<rect x="937.5" y="94" width="1" height="18" fill="#3e3e3e"/>
<circle cx="949.6" cy="100.8" r="4.6" fill="none" stroke="#d6d6d6" stroke-width="2"/>
<line x1="953" y1="104.4" x2="958.8" y2="110.4" stroke="#d6d6d6" stroke-width="2.6" stroke-linecap="round"/>
<path d="M973.6 110.8 C971.6 108 970.4 105.4 970.2 103.4 C971.2 102.6 972.4 103.2 973 104.6 V97.4 C973 96 975 96 975 97.4 V96.2 C975 94.8 977.2 94.8 977.2 96.2 V96.6 C977.2 95.2 979.4 95.2 979.4 96.6 V97.6 C979.4 96.4 981.4 96.4 981.4 97.6 V100 C983 100 984 101 984 103 V110.8z" fill="#d6d6d6"/>
<line x1="975.1" y1="98" x2="975.1" y2="103" stroke="#484848" stroke-width="0.5" stroke-linecap="butt"/>
<line x1="977.3" y1="98" x2="977.3" y2="103" stroke="#484848" stroke-width="0.5" stroke-linecap="butt"/>
<line x1="979.5" y1="98" x2="979.5" y2="103" stroke="#484848" stroke-width="0.5" stroke-linecap="butt"/>
<line x1="981.5" y1="98" x2="981.5" y2="103" stroke="#484848" stroke-width="0.5" stroke-linecap="butt"/>
<rect x="953" y="123" width="1.6" height="1.4" fill="#8a8a8a"/>
<rect x="956" y="123" width="1.6" height="1.4" fill="#8a8a8a"/>
<rect x="959" y="123" width="1.6" height="1.4" fill="#8a8a8a"/>
<rect x="962" y="123" width="1.6" height="1.4" fill="#8a8a8a"/>
<rect x="965" y="123" width="1.6" height="1.4" fill="#8a8a8a"/>
<rect x="968" y="123" width="1.6" height="1.4" fill="#8a8a8a"/>
</g>
<g id="tooloptions">
<circle cx="10" cy="135" r="7.6" fill="none" stroke="#d6d6d6" stroke-width="1.1"/>
<rect x="6.2" y="134.6" width="7.6" height="4.6" fill="#d6d6d6"/>
<path d="M7.4 134.6 v-1.6 a2.6 2.6 0 0 1 5.2 0.2" fill="none" stroke="#d6d6d6" stroke-width="1.1" stroke-linejoin="miter" stroke-linecap="butt"/>
<text x="24.4" y="140.6" font-size="14.6" fill="#d2d2d2" textLength="77.6" lengthAdjust="spacing" xml:space="preserve">Tool Options</text>
<path d="M263.5 128.6 h8 v7 h-2.5 M263.5 133 v-2.5" fill="none" stroke="#d6d6d6" stroke-width="1.2" stroke-linejoin="miter" stroke-linecap="butt"/>
<path d="M263.6 131 v-2.4 h8 v7.6 h-2.6" fill="none" stroke="#d6d6d6" stroke-width="1.2" stroke-linejoin="miter" stroke-linecap="butt"/>
<rect x="258.6" y="133.2" width="8.2" height="8" fill="none" stroke="#d6d6d6" stroke-width="1.2"/>
<path d="M282 130 l10 10 M292 130 l-10 10" fill="none" stroke="#d6d6d6" stroke-width="1.3" stroke-linejoin="miter" stroke-linecap="butt"/>
<text x="4.4" y="173" font-size="14.6" fill="#d2d2d2" textLength="108.6" lengthAdjust="spacing" xml:space="preserve">Brush Smoothing:</text>
<rect x="151" y="155.5" width="124" height="25" fill="url(#cg)" stroke="#353535" stroke-width="1" rx="3.5"/>
<rect x="152" y="156.5" width="122" height="23" fill="none" stroke="#585858" stroke-width="1" rx="2.5" opacity="0.6"/>
<path d="M256.5 165.5 L266.5 165.5 L261.5 171Z" fill="#9a9a9a"/>
<text x="155" y="173" font-size="14.6" fill="#d2d2d2" textLength="53.8" lengthAdjust="spacing" xml:space="preserve">Stabilizer</text>
<text x="4.4" y="205.6" font-size="14.6" fill="#d2d2d2" textLength="85.6" lengthAdjust="spacing" xml:space="preserve">Sample count:</text>
<rect x="151" y="188.5" width="124" height="24" fill="#373737" stroke="#2e2e2e" stroke-width="1" rx="3"/>
<path d="M151.5 189 H258 V212 H151.5 Z" fill="#53728e"/>
<path d="M259.5 189 H272.5 a2 2 0 0 1 2 2 V210 a2 2 0 0 1 -2 2 H259.5Z" fill="#464646"/>
<line x1="275" y1="191" x2="275" y2="210" stroke="#5a5a5a" stroke-width="1" stroke-linecap="butt"/>
<path d="M262 197 L272 197 L267 192Z" fill="#6a6a6a"/>
<path d="M262 204 L272 204 L267 209Z" fill="#9a9a9a"/>
<text x="189.4" y="205.6" font-size="14.6" fill="#e4e4e4" textLength="30" lengthAdjust="spacing" xml:space="preserve">1000</text>
<text x="4.4" y="237.6" font-size="14.6" fill="#d2d2d2" textLength="36.6" lengthAdjust="spacing" xml:space="preserve">Delay:</text>
<rect x="128" y="224" width="17" height="17" fill="#383838"/>
<path d="M131.2 231.2 L135.6 237.4 L141.8 227.4" fill="none" stroke="#c8c8c8" stroke-width="1.9" stroke-linejoin="miter" stroke-linecap="butt"/>
<rect x="151" y="221.1" width="124" height="24" fill="#373737" stroke="#2e2e2e" stroke-width="1" rx="3"/>
<path d="M151.5 221.6 H170 V244.6 H151.5 Z" fill="#53728e"/>
<path d="M259.5 221.6 H272.5 a2 2 0 0 1 2 2 V242.6 a2 2 0 0 1 -2 2 H259.5Z" fill="#464646"/>
<line x1="275" y1="223.6" x2="275" y2="242.6" stroke="#5a5a5a" stroke-width="1" stroke-linecap="butt"/>
<path d="M262 229.6 L272 229.6 L267 224.6Z" fill="#9a9a9a"/>
<path d="M262 236.6 L272 236.6 L267 241.6Z" fill="#9a9a9a"/>
<text x="191" y="237.6" font-size="14.6" fill="#e4e4e4" textLength="26" lengthAdjust="spacing" xml:space="preserve">3 px</text>
<text x="4.4" y="270.6" font-size="14.6" fill="#8a8a8a" textLength="62.6" lengthAdjust="spacing" xml:space="preserve">Finish line:</text>
<rect x="150" y="256" width="17" height="17" fill="#3b3b3b"/>
<path d="M153.2 263.2 L157.6 269.4 L163.8 259.4" fill="none" stroke="#7a7a7a" stroke-width="1.9" stroke-linejoin="miter" stroke-linecap="butt"/>
<text x="4.4" y="302" font-size="14.6" fill="#d2d2d2" textLength="102.6" lengthAdjust="spacing" xml:space="preserve">Stabilize Sensors:</text>
<rect x="150" y="287" width="17" height="17" fill="#383838"/>
<path d="M153.2 294.2 L157.6 300.4 L163.8 290.4" fill="none" stroke="#c8c8c8" stroke-width="1.9" stroke-linejoin="miter" stroke-linecap="butt"/>
<rect x="281" y="145" width="16" height="161" fill="#3e3e3e"/>
<rect x="281.5" y="145.5" width="15" height="15" fill="#454545" stroke="#5c5c5c" stroke-width="1"/>
<path d="M284 155.4 L294 155.4 L289 150.6Z" fill="#9a9a9a"/>
<rect x="281.5" y="162.5" width="15" height="97" fill="#464646" stroke="#5e5e5e" stroke-width="1"/>
<rect x="281.5" y="290.5" width="15" height="15" fill="#454545" stroke="#5c5c5c" stroke-width="1"/>
<path d="M284 295.6 L294 295.6 L289 300.4Z" fill="#9a9a9a"/>
<rect x="142" y="309.6" width="1.6" height="1.4" fill="#8a8a8a"/>
<rect x="145" y="309.6" width="1.6" height="1.4" fill="#8a8a8a"/>
<rect x="148" y="309.6" width="1.6" height="1.4" fill="#8a8a8a"/>
<rect x="151" y="309.6" width="1.6" height="1.4" fill="#8a8a8a"/>
<rect x="154" y="309.6" width="1.6" height="1.4" fill="#8a8a8a"/>
<rect x="157" y="309.6" width="1.6" height="1.4" fill="#8a8a8a"/>
</g>
<g id="docktabs">
<path d="M70.5 346 V319 a2.5 2.5 0 0 1 2.5 -2.5 H194.5 a2.5 2.5 0 0 1 2.5 2.5 V346z" fill="#404040" stroke="#575757" stroke-width="1" stroke-linejoin="miter" stroke-linecap="butt"/>
<text x="84" y="336.6" font-size="14.6" fill="#d2d2d2" textLength="99" lengthAdjust="spacing" xml:space="preserve">Grid and Guides</text>
<rect x="0" y="345.5" width="298" height="1" fill="#575757"/>
<path d="M1.5 347 V316.5 a2.5 2.5 0 0 1 2.5 -2.5 H66.5 a2.5 2.5 0 0 1 2.5 2.5 V347z" fill="#484848" stroke="#5c5c5c" stroke-width="1" stroke-linejoin="miter" stroke-linecap="butt"/>
<rect x="2" y="345" width="66.5" height="2.5" fill="#484848"/>
<text x="15.6" y="336.2" font-size="14.6" fill="#d2d2d2" textLength="38.2" lengthAdjust="spacing" xml:space="preserve">Layers</text>
</g>
<g id="layers">
<circle cx="10" cy="356.4" r="7.6" fill="none" stroke="#d6d6d6" stroke-width="1.1"/>
<rect x="6.2" y="356" width="7.6" height="4.6" fill="#d6d6d6"/>
<path d="M7.4 356 v-1.6 a2.6 2.6 0 0 1 5.2 0.2" fill="none" stroke="#d6d6d6" stroke-width="1.1" stroke-linejoin="miter" stroke-linecap="butt"/>
<text x="24.4" y="362" font-size="14.6" fill="#d2d2d2" textLength="38.6" lengthAdjust="spacing" xml:space="preserve">Layers</text>
<path d="M263.5 349.6 h8 v7 h-2.5 M263.5 354 v-2.5" fill="none" stroke="#d6d6d6" stroke-width="1.2" stroke-linejoin="miter" stroke-linecap="butt"/>
<path d="M263.6 352 v-2.4 h8 v7.6 h-2.6" fill="none" stroke="#d6d6d6" stroke-width="1.2" stroke-linejoin="miter" stroke-linecap="butt"/>
<rect x="258.6" y="354.2" width="8.2" height="8" fill="none" stroke="#d6d6d6" stroke-width="1.2"/>
<path d="M282 351 l10 10 M292 351 l-10 10" fill="none" stroke="#d6d6d6" stroke-width="1.3" stroke-linejoin="miter" stroke-linecap="butt"/>
<rect x="1.5" y="368.5" width="260" height="29.5" fill="url(#cg)" stroke="#353535" stroke-width="1" rx="3.5"/>
<rect x="2.5" y="369.5" width="258" height="27.5" fill="none" stroke="#585858" stroke-width="1" rx="2.5" opacity="0.6"/>
<path d="M243 380.75 L253 380.75 L248 386.25Z" fill="#9a9a9a"/>
<text x="6" y="389.6" font-size="14.6" fill="#d2d2d2" textLength="46" lengthAdjust="spacing" xml:space="preserve">Normal</text>
<path d="M273.4 374.6 H286.6 L281.6 382.6 V391 L278.6 389.6 V382.6z" fill="none" stroke="#d6d6d6" stroke-width="1.2" stroke-linejoin="miter" stroke-linecap="butt"/>
<path d="M285.2 390.4 L294 390.4 L289.6 395Z" fill="#9a9a9a"/>
<rect x="1.5" y="402" width="260" height="28" fill="#373737" stroke="#2e2e2e" stroke-width="1" rx="3"/>
<path d="M2 402.5 H124 V429.5 H2 Z" fill="#53728e"/>
<path d="M246 402.5 H259 a2 2 0 0 1 2 2 V427.5 a2 2 0 0 1 -2 2 H246Z" fill="#464646"/>
<line x1="261.5" y1="404.5" x2="261.5" y2="427.5" stroke="#5a5a5a" stroke-width="1" stroke-linecap="butt"/>
<path d="M248.5 412.5 L258.5 412.5 L253.5 407.5Z" fill="#9a9a9a"/>
<path d="M248.5 419.5 L258.5 419.5 L253.5 424.5Z" fill="#9a9a9a"/>
<text x="81" y="422.2" font-size="14.6" fill="#e4e4e4" textLength="85" lengthAdjust="spacing" xml:space="preserve">Opacity:  50%</text>
<rect x="274" y="411.2" width="12" height="1.9" fill="#d6d6d6"/>
<rect x="274" y="415.2" width="12" height="1.9" fill="#d6d6d6"/>
<rect x="274" y="419.2" width="12" height="1.9" fill="#d6d6d6"/>
<path d="M285.2 423.2 L294 423.2 L289.6 428Z" fill="#9a9a9a"/>
<rect x="1" y="433" width="295" height="401" fill="#383838"/>
<rect x="0" y="432" width="298" height="1" fill="#404040"/>
<rect x="1" y="460" width="295" height="1" fill="#363636" opacity="0.8"/>
<path d="M5.8 447.2 C9 440.6 17 440.6 20.2 447.2 C17 453.8 9 453.8 5.8 447.2Z" fill="#343434" stroke="#e0e0e0" stroke-width="1.2" stroke-linejoin="miter" stroke-linecap="butt"/>
<circle cx="13" cy="445.6" r="3.3" fill="#e0e0e0"/>
<path d="M6.4 448.8 C9.5 454 16.5 454 19.6 448.8" fill="none" stroke="#e0e0e0" stroke-width="1.6" stroke-linejoin="miter" stroke-linecap="butt"/>
<rect x="28" y="441" width="14" height="14" fill="#303030"/>
<rect x="50.5" y="438" width="19" height="20" fill="#000"/>
<rect x="50.5" y="438" width="19" height="1" fill="#fff"/>
<rect x="50.5" y="438" width="1" height="20" fill="#fff"/>
<rect x="52.5" y="439.5" width="16" height="6" fill="#1450b0"/>
<rect x="53" y="440" width="1.4" height="1.6" fill="#000"/>
<rect x="55.7" y="442" width="1.4" height="1.6" fill="#000"/>
<rect x="58.4" y="440" width="1.4" height="1.6" fill="#000"/>
<rect x="61.1" y="442" width="1.4" height="1.6" fill="#000"/>
<rect x="63.8" y="440" width="1.4" height="1.6" fill="#000"/>
<rect x="66.5" y="442" width="1.4" height="1.6" fill="#000"/>
<path d="M59 446.5 l4 -4 l4 4z" fill="#000"/>
<path d="M60 446 l3 -3 l3.6 3.6" fill="none" stroke="#fff" stroke-width="0.8" stroke-linejoin="miter" stroke-linecap="butt"/>
<rect x="53.9" y="446.2" width="1" height="11.4" fill="#fff"/>
<rect x="57.7" y="446.2" width="1" height="11.4" fill="#fff"/>
<rect x="54.9" y="447" width="2.6" height="2.6" fill="#fff"/>
<rect x="54.9" y="453" width="2.6" height="2.6" fill="#fff"/>
<rect x="63.1" y="447.4" width="4" height="2.8" fill="#fff"/>
<rect x="67.1" y="446.4" width="0.9" height="5" fill="#fff"/>
<rect x="61.1" y="451.2" width="8" height="1.8" fill="#1450b0"/>
<rect x="61.5" y="453" width="0.9" height="5" fill="#1450b0"/>
<rect x="68.1" y="453" width="0.9" height="5" fill="#1450b0"/>
<rect x="62.9" y="453.6" width="1.8" height="4.4" fill="#c89030"/>
<rect x="65.5" y="453.6" width="2.4" height="2.4" fill="#dde"/>
<rect x="51.9" y="447.5" width="1.2" height="1.6" fill="#0c0"/>
<rect x="51.9" y="454" width="1.2" height="1.6" fill="#0c0"/>
<rect x="53.5" y="456.4" width="3" height="1.4" fill="#0c0"/>
<rect x="64.9" y="456.4" width="3" height="1.4" fill="#0c0"/>
<path d="M77.5 436.5 h4.4 l1.2 1.6 h4 v7.6 h-9.6z" fill="none" stroke="#dcdcdc" stroke-width="1" stroke-linejoin="miter" stroke-linecap="butt"/>
<path d="M77.5 439.4 h9.6" fill="none" stroke="#dcdcdc" stroke-width="1" stroke-linejoin="miter" stroke-linecap="butt"/>
<path d="M79.6 449.4 l5.6 4.2 l-5.6 4.4" fill="none" stroke="#dcdcdc" stroke-width="1.5" stroke-linejoin="miter" stroke-linecap="butt"/>
<text x="90" y="452.6" font-size="14.6" fill="#e2e2e2" textLength="60" lengthAdjust="spacing" xml:space="preserve">Residence</text>
<rect x="277" y="442.4" width="6.6" height="3" fill="#7c7c7c"/>
<rect x="285" y="442.4" width="7" height="3" fill="#7c7c7c"/>
<rect x="277" y="446.4" width="3" height="3" fill="#7c7c7c"/>
<rect x="281.4" y="446.4" width="6.4" height="3" fill="#7c7c7c"/>
<rect x="289" y="446.4" width="3" height="3" fill="#7c7c7c"/>
<rect x="277" y="450.4" width="6.6" height="3" fill="#7c7c7c"/>
<rect x="285" y="450.4" width="7" height="3" fill="#7c7c7c"/>
<rect x="241" y="446" width="12" height="7.8" fill="#7c7c7c"/>
<path d="M252 446 V443.4 a3 3 0 0 0 -5.6 -1.4" fill="none" stroke="#7c7c7c" stroke-width="1.5" stroke-linejoin="miter" stroke-linecap="butt"/>
<text x="258.4" y="452" font-size="19" fill="#7c7c7c" textLength="13" lengthAdjust="spacing" font-weight="bold" font-style="italic" xml:space="preserve">α</text>
<rect x="1" y="460.5" width="295" height="27" fill="#3b3b3b"/>
<rect x="1" y="487" width="295" height="1" fill="#363636" opacity="0.8"/>
<path d="M6 473.7 C9 467.8 17 467.8 20 473.7" fill="none" stroke="#5e5e5e" stroke-width="1" stroke-linejoin="miter" stroke-linecap="butt"/>
<path d="M6 473.7 C9 480.8 17 480.8 20 473.7" fill="none" stroke="#808080" stroke-width="1.5" stroke-linejoin="miter" stroke-linecap="butt"/>
<rect x="28" y="468" width="14" height="14" fill="#303030"/>
<g opacity="0.62">
<rect x="50" y="465" width="20" height="20" fill="#8a8a8a"/>
<rect x="50" y="470" width="5" height="5" fill="#a2a2a2"/>
<rect x="50" y="480" width="5" height="5" fill="#a2a2a2"/>
<rect x="55" y="465" width="5" height="5" fill="#a2a2a2"/>
<rect x="55" y="475" width="5" height="5" fill="#a2a2a2"/>
<rect x="60" y="470" width="5" height="5" fill="#a2a2a2"/>
<rect x="60" y="480" width="5" height="5" fill="#a2a2a2"/>
<rect x="65" y="465" width="5" height="5" fill="#a2a2a2"/>
<rect x="65" y="475" width="5" height="5" fill="#a2a2a2"/>
<rect x="51" y="468" width="18" height="1" fill="#2a2a2a"/>
<rect x="51" y="471" width="18" height="1.2" fill="#c8c8c8"/>
<rect x="51" y="473.4" width="18" height="2" fill="#2a2a2a"/>
<rect x="52" y="473.8" width="16" height="1" fill="#c8c8c8"/>
<rect x="51" y="476.4" width="18" height="0.8" fill="#2a2a2a"/>
<rect x="53" y="479" width="1.4" height="4" fill="#9a7a4a"/>
<rect x="57" y="479" width="1.4" height="4" fill="#c8c8c8"/>
<rect x="61" y="478" width="1.4" height="5" fill="#6aa"/>
<rect x="65" y="479" width="1.4" height="4" fill="#9a7a4a"/>
<rect x="55" y="467" width="2" height="1" fill="#9a7a4a"/>
<rect x="62" y="467" width="2" height="1" fill="#9a7a4a"/>
</g>
<path d="M77.5 463.5 h4.4 l1.2 1.6 h4 v7.6 h-9.6z" fill="none" stroke="#7e7e7e" stroke-width="1" stroke-linejoin="miter" stroke-linecap="butt"/>
<path d="M77.5 466.4 h9.6" fill="none" stroke="#7e7e7e" stroke-width="1" stroke-linejoin="miter" stroke-linecap="butt"/>
<path d="M79.6 476.4 l5.6 4.2 l-5.6 4.4" fill="none" stroke="#c4c4c4" stroke-width="1.5" stroke-linejoin="miter" stroke-linecap="butt"/>
<text x="90" y="479.6" font-size="14.6" fill="#9e9e9e" textLength="65.5" lengthAdjust="spacing" xml:space="preserve">Restaurant</text>
<rect x="277" y="469.4" width="6.6" height="3" fill="#7c7c7c"/>
<rect x="285" y="469.4" width="7" height="3" fill="#7c7c7c"/>
<rect x="277" y="473.4" width="3" height="3" fill="#7c7c7c"/>
<rect x="281.4" y="473.4" width="6.4" height="3" fill="#7c7c7c"/>
<rect x="289" y="473.4" width="3" height="3" fill="#7c7c7c"/>
<rect x="277" y="477.4" width="6.6" height="3" fill="#7c7c7c"/>
<rect x="285" y="477.4" width="7" height="3" fill="#7c7c7c"/>
<rect x="241" y="473" width="12" height="7.8" fill="#7c7c7c"/>
<path d="M252 473 V470.4 a3 3 0 0 0 -5.6 -1.4" fill="none" stroke="#7c7c7c" stroke-width="1.5" stroke-linejoin="miter" stroke-linecap="butt"/>
<text x="258.4" y="479" font-size="19" fill="#7c7c7c" textLength="13" lengthAdjust="spacing" font-weight="bold" font-style="italic" xml:space="preserve">α</text>
<rect x="1" y="514" width="295" height="1" fill="#363636" opacity="0.8"/>
<path d="M6 500.7 C9 494.8 17 494.8 20 500.7" fill="none" stroke="#5e5e5e" stroke-width="1" stroke-linejoin="miter" stroke-linecap="butt"/>
<path d="M6 500.7 C9 507.8 17 507.8 20 500.7" fill="none" stroke="#808080" stroke-width="1.5" stroke-linejoin="miter" stroke-linecap="butt"/>
<rect x="28" y="495" width="14" height="14" fill="#303030"/>
<g opacity="0.62">
<rect x="50" y="493.5" width="20" height="17" fill="#8a8a8a"/>
<rect x="50" y="498.5" width="5" height="5" fill="#a2a2a2"/>
<rect x="50" y="508.5" width="5" height="2" fill="#a2a2a2"/>
<rect x="55" y="493.5" width="5" height="5" fill="#a2a2a2"/>
<rect x="55" y="503.5" width="5" height="5" fill="#a2a2a2"/>
<rect x="60" y="498.5" width="5" height="5" fill="#a2a2a2"/>
<rect x="60" y="508.5" width="5" height="2" fill="#a2a2a2"/>
<rect x="65" y="493.5" width="5" height="5" fill="#a2a2a2"/>
<rect x="65" y="503.5" width="5" height="5" fill="#a2a2a2"/>
<rect x="52" y="495.5" width="3.4" height="6" fill="#9a7a4a"/>
<rect x="57" y="495.9" width="5" height="2" fill="#9a7a4a"/>
<rect x="63.4" y="495.9" width="5" height="2" fill="#9a7a4a"/>
<rect x="57" y="498.9" width="5" height="1.4" fill="#c8c8c8"/>
<rect x="63.4" y="498.9" width="5" height="1.4" fill="#c8c8c8"/>
<rect x="52" y="503.5" width="1.2" height="6" fill="#c8c8c8"/>
<rect x="54.4" y="504.5" width="1.2" height="5" fill="#9a7a4a"/>
<rect x="56.6" y="503.5" width="1.2" height="6" fill="#c8c8c8"/>
<rect x="61" y="502.9" width="7" height="6" fill="#777"/>
<rect x="62" y="503.5" width="3" height="1.4" fill="#9a7a4a"/>
</g>
<path d="M77.5 490.5 h4.4 l1.2 1.6 h4 v7.6 h-9.6z" fill="none" stroke="#7e7e7e" stroke-width="1" stroke-linejoin="miter" stroke-linecap="butt"/>
<path d="M77.5 493.4 h9.6" fill="none" stroke="#7e7e7e" stroke-width="1" stroke-linejoin="miter" stroke-linecap="butt"/>
<path d="M79.6 503.4 l5.6 4.2 l-5.6 4.4" fill="none" stroke="#c4c4c4" stroke-width="1.5" stroke-linejoin="miter" stroke-linecap="butt"/>
<text x="90" y="506.6" font-size="14.6" fill="#9e9e9e" textLength="54" lengthAdjust="spacing" xml:space="preserve">Surveyor</text>
<rect x="277" y="496.4" width="6.6" height="3" fill="#7c7c7c"/>
<rect x="285" y="496.4" width="7" height="3" fill="#7c7c7c"/>
<rect x="277" y="500.4" width="3" height="3" fill="#7c7c7c"/>
<rect x="281.4" y="500.4" width="6.4" height="3" fill="#7c7c7c"/>
<rect x="289" y="500.4" width="3" height="3" fill="#7c7c7c"/>
<rect x="277" y="504.4" width="6.6" height="3" fill="#7c7c7c"/>
<rect x="285" y="504.4" width="7" height="3" fill="#7c7c7c"/>
<rect x="241" y="500" width="12" height="7.8" fill="#7c7c7c"/>
<path d="M252 500 V497.4 a3 3 0 0 0 -5.6 -1.4" fill="none" stroke="#7c7c7c" stroke-width="1.5" stroke-linejoin="miter" stroke-linecap="butt"/>
<text x="258.4" y="506" font-size="19" fill="#7c7c7c" textLength="13" lengthAdjust="spacing" font-weight="bold" font-style="italic" xml:space="preserve">α</text>
<rect x="1" y="514.5" width="295" height="27" fill="#3b3b3b"/>
<rect x="1" y="541" width="295" height="1" fill="#363636" opacity="0.8"/>
<path d="M6 527.7 C9 521.8 17 521.8 20 527.7" fill="none" stroke="#5e5e5e" stroke-width="1" stroke-linejoin="miter" stroke-linecap="butt"/>
<path d="M6 527.7 C9 534.8 17 534.8 20 527.7" fill="none" stroke="#808080" stroke-width="1.5" stroke-linejoin="miter" stroke-linecap="butt"/>
<rect x="28" y="522" width="14" height="14" fill="#303030"/>
<g opacity="0.62">
<rect x="50" y="519" width="20" height="20" fill="#8a8a8a"/>
<rect x="50" y="524" width="5" height="5" fill="#a2a2a2"/>
<rect x="50" y="534" width="5" height="5" fill="#a2a2a2"/>
<rect x="55" y="519" width="5" height="5" fill="#a2a2a2"/>
<rect x="55" y="529" width="5" height="5" fill="#a2a2a2"/>
<rect x="60" y="524" width="5" height="5" fill="#a2a2a2"/>
<rect x="60" y="534" width="5" height="5" fill="#a2a2a2"/>
<rect x="65" y="519" width="5" height="5" fill="#a2a2a2"/>
<rect x="65" y="529" width="5" height="5" fill="#a2a2a2"/>
<rect x="52" y="520.4" width="6" height="1.2" fill="#c8c8c8"/>
<rect x="53" y="522.2" width="5" height="1" fill="#c8c8c8"/>
<rect x="60" y="523" width="8" height="1" fill="#2a2a2a"/>
<rect x="52" y="527" width="3" height="1.2" fill="#c8c8c8"/>
<rect x="57" y="526" width="4" height="1.2" fill="#c8c8c8"/>
<rect x="51.6" y="530" width="1.4" height="8" fill="#c8c8c8"/>
<rect x="55" y="531" width="1.2" height="7" fill="#c66"/>
<rect x="58.6" y="530" width="3" height="1" fill="#c8c8c8"/>
<rect x="59.6" y="531" width="1.2" height="7" fill="#c8c8c8"/>
<rect x="63" y="531.4" width="1.4" height="6.6" fill="#9a7a4a"/>
<rect x="66.4" y="530" width="1.4" height="8" fill="#c8c8c8"/>
</g>
<path d="M77.5 517.5 h4.4 l1.2 1.6 h4 v7.6 h-9.6z" fill="none" stroke="#7e7e7e" stroke-width="1" stroke-linejoin="miter" stroke-linecap="butt"/>
<path d="M77.5 520.4 h9.6" fill="none" stroke="#7e7e7e" stroke-width="1" stroke-linejoin="miter" stroke-linecap="butt"/>
<path d="M79.6 530.4 l5.6 4.2 l-5.6 4.4" fill="none" stroke="#c4c4c4" stroke-width="1.5" stroke-linejoin="miter" stroke-linecap="butt"/>
<text x="90" y="533.6" font-size="14.6" fill="#9e9e9e" textLength="30" lengthAdjust="spacing" xml:space="preserve">Bank</text>
<rect x="277" y="523.4" width="6.6" height="3" fill="#7c7c7c"/>
<rect x="285" y="523.4" width="7" height="3" fill="#7c7c7c"/>
<rect x="277" y="527.4" width="3" height="3" fill="#7c7c7c"/>
<rect x="281.4" y="527.4" width="6.4" height="3" fill="#7c7c7c"/>
<rect x="289" y="527.4" width="3" height="3" fill="#7c7c7c"/>
<rect x="277" y="531.4" width="6.6" height="3" fill="#7c7c7c"/>
<rect x="285" y="531.4" width="7" height="3" fill="#7c7c7c"/>
<rect x="241" y="527" width="12" height="7.8" fill="#7c7c7c"/>
<path d="M252 527 V524.4 a3 3 0 0 0 -5.6 -1.4" fill="none" stroke="#7c7c7c" stroke-width="1.5" stroke-linejoin="miter" stroke-linecap="butt"/>
<text x="258.4" y="533" font-size="19" fill="#7c7c7c" textLength="13" lengthAdjust="spacing" font-weight="bold" font-style="italic" xml:space="preserve">α</text>
<rect x="1" y="568" width="295" height="1" fill="#363636" opacity="0.8"/>
<path d="M6 554.7 C9 548.8 17 548.8 20 554.7" fill="none" stroke="#5e5e5e" stroke-width="1" stroke-linejoin="miter" stroke-linecap="butt"/>
<path d="M6 554.7 C9 561.8 17 561.8 20 554.7" fill="none" stroke="#808080" stroke-width="1.5" stroke-linejoin="miter" stroke-linecap="butt"/>
<rect x="28" y="549" width="14" height="14" fill="#303030"/>
<g opacity="0.62">
<rect x="50" y="546" width="20" height="20" fill="#8a8a8a"/>
<rect x="50" y="551" width="5" height="5" fill="#a2a2a2"/>
<rect x="50" y="561" width="5" height="5" fill="#a2a2a2"/>
<rect x="55" y="546" width="5" height="5" fill="#a2a2a2"/>
<rect x="55" y="556" width="5" height="5" fill="#a2a2a2"/>
<rect x="60" y="551" width="5" height="5" fill="#a2a2a2"/>
<rect x="60" y="561" width="5" height="5" fill="#a2a2a2"/>
<rect x="65" y="546" width="5" height="5" fill="#a2a2a2"/>
<rect x="65" y="556" width="5" height="5" fill="#a2a2a2"/>
<rect x="52" y="548" width="4" height="3" fill="#2a2a2a"/>
<rect x="58" y="547.6" width="1.4" height="4" fill="#9a7a4a"/>
<rect x="62" y="549" width="5" height="3" fill="#68a"/>
<rect x="52" y="553.4" width="16" height="1" fill="#2a2a2a"/>
<rect x="53" y="555.4" width="5" height="3" fill="#9a7a4a"/>
<rect x="60" y="555.4" width="3" height="3" fill="#2a2a2a"/>
<rect x="65" y="555" width="2" height="4" fill="#68a"/>
<rect x="52" y="560" width="16" height="1" fill="#2a2a2a"/>
<rect x="54" y="561.6" width="4" height="3" fill="#2a2a2a"/>
<rect x="61" y="561.6" width="2" height="3.6" fill="#9a7a4a"/>
<rect x="65" y="561.6" width="2.4" height="3" fill="#c8c8c8"/>
</g>
<path d="M77.5 544.5 h4.4 l1.2 1.6 h4 v7.6 h-9.6z" fill="none" stroke="#7e7e7e" stroke-width="1" stroke-linejoin="miter" stroke-linecap="butt"/>
<path d="M77.5 547.4 h9.6" fill="none" stroke="#7e7e7e" stroke-width="1" stroke-linejoin="miter" stroke-linecap="butt"/>
<path d="M79.6 557.4 l5.6 4.2 l-5.6 4.4" fill="none" stroke="#c4c4c4" stroke-width="1.5" stroke-linejoin="miter" stroke-linecap="butt"/>
<text x="90" y="560.6" font-size="14.6" fill="#9e9e9e" textLength="82" lengthAdjust="spacing" xml:space="preserve">Cartographer</text>
<rect x="277" y="550.4" width="6.6" height="3" fill="#7c7c7c"/>
<rect x="285" y="550.4" width="7" height="3" fill="#7c7c7c"/>
<rect x="277" y="554.4" width="3" height="3" fill="#7c7c7c"/>
<rect x="281.4" y="554.4" width="6.4" height="3" fill="#7c7c7c"/>
<rect x="289" y="554.4" width="3" height="3" fill="#7c7c7c"/>
<rect x="277" y="558.4" width="6.6" height="3" fill="#7c7c7c"/>
<rect x="285" y="558.4" width="7" height="3" fill="#7c7c7c"/>
<rect x="241" y="554" width="12" height="7.8" fill="#7c7c7c"/>
<path d="M252 554 V551.4 a3 3 0 0 0 -5.6 -1.4" fill="none" stroke="#7c7c7c" stroke-width="1.5" stroke-linejoin="miter" stroke-linecap="butt"/>
<text x="258.4" y="560" font-size="19" fill="#7c7c7c" textLength="13" lengthAdjust="spacing" font-weight="bold" font-style="italic" xml:space="preserve">α</text>
<rect x="1" y="568.5" width="295" height="27" fill="#3b3b3b"/>
<rect x="1" y="595" width="295" height="1" fill="#363636" opacity="0.8"/>
<path d="M6 581.7 C9 575.8 17 575.8 20 581.7" fill="none" stroke="#5e5e5e" stroke-width="1" stroke-linejoin="miter" stroke-linecap="butt"/>
<path d="M6 581.7 C9 588.8 17 588.8 20 581.7" fill="none" stroke="#808080" stroke-width="1.5" stroke-linejoin="miter" stroke-linecap="butt"/>
<rect x="28" y="576" width="14" height="14" fill="#303030"/>
<g opacity="0.62">
<rect x="50" y="575.5" width="20" height="15" fill="#8a8a8a"/>
<rect x="50" y="580.5" width="5" height="5" fill="#a2a2a2"/>
<rect x="55" y="575.5" width="5" height="5" fill="#a2a2a2"/>
<rect x="55" y="585.5" width="5" height="5" fill="#a2a2a2"/>
<rect x="60" y="580.5" width="5" height="5" fill="#a2a2a2"/>
<rect x="65" y="575.5" width="5" height="5" fill="#a2a2a2"/>
<rect x="65" y="585.5" width="5" height="5" fill="#a2a2a2"/>
<rect x="51.4" y="576.9" width="7" height="5" fill="#2a2a2a"/>
<rect x="52.4" y="577.9" width="5" height="3" fill="#9a7a4a"/>
<rect x="60.6" y="576.9" width="3" height="5" fill="#9a7a4a"/>
<rect x="65" y="576.9" width="3.4" height="5" fill="#2a2a2a"/>
<rect x="51.4" y="583.5" width="7" height="5.6" fill="#2a2a2a"/>
<rect x="52.6" y="584.5" width="4.6" height="2" fill="#c8c8c8"/>
<rect x="60.6" y="583.9" width="3" height="5" fill="#a86"/>
<rect x="65" y="583.9" width="3.4" height="5" fill="#2a2a2a"/>
<rect x="65.8" y="584.9" width="1.6" height="2" fill="#c44"/>
</g>
<path d="M77.5 571.5 h4.4 l1.2 1.6 h4 v7.6 h-9.6z" fill="none" stroke="#7e7e7e" stroke-width="1" stroke-linejoin="miter" stroke-linecap="butt"/>
<path d="M77.5 574.4 h9.6" fill="none" stroke="#7e7e7e" stroke-width="1" stroke-linejoin="miter" stroke-linecap="butt"/>
<path d="M79.6 584.4 l5.6 4.2 l-5.6 4.4" fill="none" stroke="#c4c4c4" stroke-width="1.5" stroke-linejoin="miter" stroke-linecap="butt"/>
<text x="90" y="587.6" font-size="14.6" fill="#9e9e9e" textLength="74.6" lengthAdjust="spacing" xml:space="preserve">Expeditioner</text>
<rect x="277" y="577.4" width="6.6" height="3" fill="#7c7c7c"/>
<rect x="285" y="577.4" width="7" height="3" fill="#7c7c7c"/>
<rect x="277" y="581.4" width="3" height="3" fill="#7c7c7c"/>
<rect x="281.4" y="581.4" width="6.4" height="3" fill="#7c7c7c"/>
<rect x="289" y="581.4" width="3" height="3" fill="#7c7c7c"/>
<rect x="277" y="585.4" width="6.6" height="3" fill="#7c7c7c"/>
<rect x="285" y="585.4" width="7" height="3" fill="#7c7c7c"/>
<rect x="241" y="581" width="12" height="7.8" fill="#7c7c7c"/>
<path d="M252 581 V578.4 a3 3 0 0 0 -5.6 -1.4" fill="none" stroke="#7c7c7c" stroke-width="1.5" stroke-linejoin="miter" stroke-linecap="butt"/>
<text x="258.4" y="587" font-size="19" fill="#7c7c7c" textLength="13" lengthAdjust="spacing" font-weight="bold" font-style="italic" xml:space="preserve">α</text>
<rect x="1" y="622" width="295" height="1" fill="#363636" opacity="0.8"/>
<path d="M6 608.7 C9 602.8 17 602.8 20 608.7" fill="none" stroke="#5e5e5e" stroke-width="1" stroke-linejoin="miter" stroke-linecap="butt"/>
<path d="M6 608.7 C9 615.8 17 615.8 20 608.7" fill="none" stroke="#808080" stroke-width="1.5" stroke-linejoin="miter" stroke-linecap="butt"/>
<rect x="28" y="603" width="14" height="14" fill="#303030"/>
<g opacity="0.62">
<rect x="50" y="602.5" width="20" height="15" fill="#8a8a8a"/>
<rect x="50" y="607.5" width="5" height="5" fill="#a2a2a2"/>
<rect x="55" y="602.5" width="5" height="5" fill="#a2a2a2"/>
<rect x="55" y="612.5" width="5" height="5" fill="#a2a2a2"/>
<rect x="60" y="607.5" width="5" height="5" fill="#a2a2a2"/>
<rect x="65" y="602.5" width="5" height="5" fill="#a2a2a2"/>
<rect x="65" y="612.5" width="5" height="5" fill="#a2a2a2"/>
<rect x="52" y="604.5" width="16" height="0.8" fill="#aaa"/>
<rect x="53" y="607.5" width="3" height="0.8" fill="#aaa"/>
<rect x="59" y="606.9" width="4" height="0.8" fill="#aaa"/>
<rect x="65" y="607.9" width="3" height="0.8" fill="#aaa"/>
<rect x="54" y="611.5" width="1" height="5" fill="#aaa"/>
<rect x="58" y="612.5" width="3" height="4" fill="#a86"/>
<rect x="63" y="611.5" width="1" height="5" fill="#aaa"/>
<rect x="67" y="612.5" width="1.4" height="4" fill="#6a8"/>
</g>
<path d="M77.5 598.5 h4.4 l1.2 1.6 h4 v7.6 h-9.6z" fill="none" stroke="#7e7e7e" stroke-width="1" stroke-linejoin="miter" stroke-linecap="butt"/>
<path d="M77.5 601.4 h9.6" fill="none" stroke="#7e7e7e" stroke-width="1" stroke-linejoin="miter" stroke-linecap="butt"/>
<path d="M79.6 611.4 l5.6 4.2 l-5.6 4.4" fill="none" stroke="#c4c4c4" stroke-width="1.5" stroke-linejoin="miter" stroke-linecap="butt"/>
<text x="90" y="614.6" font-size="14.6" fill="#9e9e9e" textLength="73.6" lengthAdjust="spacing" xml:space="preserve">Greenhouse</text>
<rect x="277" y="604.4" width="6.6" height="3" fill="#7c7c7c"/>
<rect x="285" y="604.4" width="7" height="3" fill="#7c7c7c"/>
<rect x="277" y="608.4" width="3" height="3" fill="#7c7c7c"/>
<rect x="281.4" y="608.4" width="6.4" height="3" fill="#7c7c7c"/>
<rect x="289" y="608.4" width="3" height="3" fill="#7c7c7c"/>
<rect x="277" y="612.4" width="6.6" height="3" fill="#7c7c7c"/>
<rect x="285" y="612.4" width="7" height="3" fill="#7c7c7c"/>
<rect x="241" y="608" width="12" height="7.8" fill="#7c7c7c"/>
<path d="M252 608 V605.4 a3 3 0 0 0 -5.6 -1.4" fill="none" stroke="#7c7c7c" stroke-width="1.5" stroke-linejoin="miter" stroke-linecap="butt"/>
<text x="258.4" y="614" font-size="19" fill="#7c7c7c" textLength="13" lengthAdjust="spacing" font-weight="bold" font-style="italic" xml:space="preserve">α</text>
<rect x="1" y="622.5" width="295" height="27" fill="#3b3b3b"/>
<rect x="1" y="649" width="295" height="1" fill="#363636" opacity="0.8"/>
<path d="M6 635.7 C9 629.8 17 629.8 20 635.7" fill="none" stroke="#5e5e5e" stroke-width="1" stroke-linejoin="miter" stroke-linecap="butt"/>
<path d="M6 635.7 C9 642.8 17 642.8 20 635.7" fill="none" stroke="#808080" stroke-width="1.5" stroke-linejoin="miter" stroke-linecap="butt"/>
<rect x="28" y="630" width="14" height="14" fill="#303030"/>
<g opacity="0.62">
<rect x="50" y="633" width="20" height="8" fill="#8a8a8a"/>
<rect x="50" y="638" width="5" height="3" fill="#a2a2a2"/>
<rect x="55" y="633" width="5" height="5" fill="#a2a2a2"/>
<rect x="60" y="638" width="5" height="3" fill="#a2a2a2"/>
<rect x="65" y="633" width="5" height="5" fill="#a2a2a2"/>
<rect x="51.4" y="634.4" width="4" height="5" fill="#2a2a2a"/>
<rect x="52" y="635" width="2.6" height="1.6" fill="#9a7a4a"/>
<rect x="56.6" y="635" width="4" height="4" fill="#9a7a4a"/>
<rect x="61.6" y="634.4" width="3" height="5" fill="#2a2a2a"/>
<rect x="65.6" y="635" width="3" height="4" fill="#c8c8c8"/>
<rect x="57.4" y="636" width="2" height="1.2" fill="#2a2a2a"/>
</g>
<path d="M77.5 625.5 h4.4 l1.2 1.6 h4 v7.6 h-9.6z" fill="none" stroke="#7e7e7e" stroke-width="1" stroke-linejoin="miter" stroke-linecap="butt"/>
<path d="M77.5 628.4 h9.6" fill="none" stroke="#7e7e7e" stroke-width="1" stroke-linejoin="miter" stroke-linecap="butt"/>
<path d="M79.6 638.4 l5.6 4.2 l-5.6 4.4" fill="none" stroke="#c4c4c4" stroke-width="1.5" stroke-linejoin="miter" stroke-linecap="butt"/>
<text x="90" y="641.6" font-size="14.6" fill="#9e9e9e" textLength="69" lengthAdjust="spacing" xml:space="preserve">Scriptorium</text>
<rect x="277" y="631.4" width="6.6" height="3" fill="#7c7c7c"/>
<rect x="285" y="631.4" width="7" height="3" fill="#7c7c7c"/>
<rect x="277" y="635.4" width="3" height="3" fill="#7c7c7c"/>
<rect x="281.4" y="635.4" width="6.4" height="3" fill="#7c7c7c"/>
<rect x="289" y="635.4" width="3" height="3" fill="#7c7c7c"/>
<rect x="277" y="639.4" width="6.6" height="3" fill="#7c7c7c"/>
<rect x="285" y="639.4" width="7" height="3" fill="#7c7c7c"/>
<rect x="241" y="635" width="12" height="7.8" fill="#7c7c7c"/>
<path d="M252 635 V632.4 a3 3 0 0 0 -5.6 -1.4" fill="none" stroke="#7c7c7c" stroke-width="1.5" stroke-linejoin="miter" stroke-linecap="butt"/>
<text x="258.4" y="641" font-size="19" fill="#7c7c7c" textLength="13" lengthAdjust="spacing" font-weight="bold" font-style="italic" xml:space="preserve">α</text>
<rect x="1" y="676" width="295" height="1" fill="#363636" opacity="0.8"/>
<path d="M6 662.7 C9 656.8 17 656.8 20 662.7" fill="none" stroke="#5e5e5e" stroke-width="1" stroke-linejoin="miter" stroke-linecap="butt"/>
<path d="M6 662.7 C9 669.8 17 669.8 20 662.7" fill="none" stroke="#808080" stroke-width="1.5" stroke-linejoin="miter" stroke-linecap="butt"/>
<rect x="28" y="657" width="14" height="14" fill="#303030"/>
<g opacity="0.62">
<rect x="50" y="656.5" width="20" height="15" fill="#8a8a8a"/>
<rect x="50" y="661.5" width="5" height="5" fill="#a2a2a2"/>
<rect x="55" y="656.5" width="5" height="5" fill="#a2a2a2"/>
<rect x="55" y="666.5" width="5" height="5" fill="#a2a2a2"/>
<rect x="60" y="661.5" width="5" height="5" fill="#a2a2a2"/>
<rect x="65" y="656.5" width="5" height="5" fill="#a2a2a2"/>
<rect x="65" y="666.5" width="5" height="5" fill="#a2a2a2"/>
<rect x="51.4" y="657.9" width="17.2" height="0.9" fill="#2a2a2a"/>
<rect x="52" y="659.9" width="7" height="2.6" fill="#c8c8c8"/>
<rect x="60.6" y="659.9" width="7" height="2.6" fill="#2a2a2a"/>
<rect x="61" y="660.5" width="6" height="1.2" fill="#c8c8c8"/>
<rect x="51.4" y="663.9" width="17.2" height="0.9" fill="#2a2a2a"/>
<rect x="52.4" y="665.9" width="1.2" height="4.4" fill="#c8c8c8"/>
<rect x="54.4" y="665.9" width="4" height="1" fill="#c8c8c8"/>
<rect x="54.4" y="668.5" width="4" height="1" fill="#c8c8c8"/>
<rect x="60.4" y="665.9" width="7.4" height="4.4" fill="#2a2a2a"/>
<rect x="61.4" y="666.9" width="5.4" height="2.4" fill="#888"/>
</g>
<path d="M77.5 652.5 h4.4 l1.2 1.6 h4 v7.6 h-9.6z" fill="none" stroke="#7e7e7e" stroke-width="1" stroke-linejoin="miter" stroke-linecap="butt"/>
<path d="M77.5 655.4 h9.6" fill="none" stroke="#7e7e7e" stroke-width="1" stroke-linejoin="miter" stroke-linecap="butt"/>
<path d="M79.6 665.4 l5.6 4.2 l-5.6 4.4" fill="none" stroke="#c4c4c4" stroke-width="1.5" stroke-linejoin="miter" stroke-linecap="butt"/>
<text x="90" y="668.6" font-size="14.6" fill="#9e9e9e" textLength="66" lengthAdjust="spacing" xml:space="preserve">Storehouse</text>
<rect x="277" y="658.4" width="6.6" height="3" fill="#7c7c7c"/>
<rect x="285" y="658.4" width="7" height="3" fill="#7c7c7c"/>
<rect x="277" y="662.4" width="3" height="3" fill="#7c7c7c"/>
<rect x="281.4" y="662.4" width="6.4" height="3" fill="#7c7c7c"/>
<rect x="289" y="662.4" width="3" height="3" fill="#7c7c7c"/>
<rect x="277" y="666.4" width="6.6" height="3" fill="#7c7c7c"/>
<rect x="285" y="666.4" width="7" height="3" fill="#7c7c7c"/>
<rect x="241" y="662" width="12" height="7.8" fill="#7c7c7c"/>
<path d="M252 662 V659.4 a3 3 0 0 0 -5.6 -1.4" fill="none" stroke="#7c7c7c" stroke-width="1.5" stroke-linejoin="miter" stroke-linecap="butt"/>
<text x="258.4" y="668" font-size="19" fill="#7c7c7c" textLength="13" lengthAdjust="spacing" font-weight="bold" font-style="italic" xml:space="preserve">α</text>
<rect x="1" y="676.5" width="295" height="27" fill="#3b3b3b"/>
<rect x="1" y="703" width="295" height="1" fill="#363636" opacity="0.8"/>
<path d="M6 689.7 C9 683.8 17 683.8 20 689.7" fill="none" stroke="#5e5e5e" stroke-width="1" stroke-linejoin="miter" stroke-linecap="butt"/>
<path d="M6 689.7 C9 696.8 17 696.8 20 689.7" fill="none" stroke="#808080" stroke-width="1.5" stroke-linejoin="miter" stroke-linecap="butt"/>
<rect x="28" y="684" width="14" height="14" fill="#303030"/>
<g opacity="0.62">
<rect x="50" y="683.5" width="20" height="15" fill="#8a8a8a"/>
<rect x="50" y="688.5" width="5" height="5" fill="#a2a2a2"/>
<rect x="55" y="683.5" width="5" height="5" fill="#a2a2a2"/>
<rect x="55" y="693.5" width="5" height="5" fill="#a2a2a2"/>
<rect x="60" y="688.5" width="5" height="5" fill="#a2a2a2"/>
<rect x="65" y="683.5" width="5" height="5" fill="#a2a2a2"/>
<rect x="65" y="693.5" width="5" height="5" fill="#a2a2a2"/>
<rect x="51.6" y="685.1" width="4.6" height="5" fill="#9a7a4a"/>
<rect x="52.6" y="686.1" width="2.6" height="3" fill="#2a2a2a"/>
<rect x="57.6" y="685.1" width="4.6" height="5" fill="#9a7a4a"/>
<rect x="58.6" y="686.1" width="2.6" height="3" fill="#2a2a2a"/>
<rect x="63.6" y="685.1" width="4.6" height="5" fill="#9a7a4a"/>
<rect x="64.6" y="686.1" width="2.6" height="3" fill="#2a2a2a"/>
<rect x="51.6" y="691.9" width="4" height="5.6" fill="#c8c8c8"/>
<rect x="56.6" y="691.9" width="3" height="5.6" fill="#68a"/>
<rect x="61" y="691.9" width="7.4" height="5.6" fill="#2a2a2a"/>
<rect x="62.4" y="693.5" width="2" height="2" fill="#4a4"/>
<rect x="66" y="692.9" width="1.6" height="3" fill="#9a7a4a"/>
</g>
<path d="M77.5 679.5 h4.4 l1.2 1.6 h4 v7.6 h-9.6z" fill="none" stroke="#7e7e7e" stroke-width="1" stroke-linejoin="miter" stroke-linecap="butt"/>
<path d="M77.5 682.4 h9.6" fill="none" stroke="#7e7e7e" stroke-width="1" stroke-linejoin="miter" stroke-linecap="butt"/>
<path d="M79.6 692.4 l5.6 4.2 l-5.6 4.4" fill="none" stroke="#c4c4c4" stroke-width="1.5" stroke-linejoin="miter" stroke-linecap="butt"/>
<text x="90" y="695.6" font-size="14.6" fill="#9e9e9e" textLength="30.4" lengthAdjust="spacing" xml:space="preserve">Tailor</text>
<rect x="277" y="685.4" width="6.6" height="3" fill="#7c7c7c"/>
<rect x="285" y="685.4" width="7" height="3" fill="#7c7c7c"/>
<rect x="277" y="689.4" width="3" height="3" fill="#7c7c7c"/>
<rect x="281.4" y="689.4" width="6.4" height="3" fill="#7c7c7c"/>
<rect x="289" y="689.4" width="3" height="3" fill="#7c7c7c"/>
<rect x="277" y="693.4" width="6.6" height="3" fill="#7c7c7c"/>
<rect x="285" y="693.4" width="7" height="3" fill="#7c7c7c"/>
<rect x="241" y="689" width="12" height="7.8" fill="#7c7c7c"/>
<path d="M252 689 V686.4 a3 3 0 0 0 -5.6 -1.4" fill="none" stroke="#7c7c7c" stroke-width="1.5" stroke-linejoin="miter" stroke-linecap="butt"/>
<text x="258.4" y="695" font-size="19" fill="#7c7c7c" textLength="13" lengthAdjust="spacing" font-weight="bold" font-style="italic" xml:space="preserve">α</text>
<rect x="1" y="730" width="295" height="1" fill="#363636" opacity="0.8"/>
<path d="M6 716.7 C9 710.8 17 710.8 20 716.7" fill="none" stroke="#5e5e5e" stroke-width="1" stroke-linejoin="miter" stroke-linecap="butt"/>
<path d="M6 716.7 C9 723.8 17 723.8 20 716.7" fill="none" stroke="#808080" stroke-width="1.5" stroke-linejoin="miter" stroke-linecap="butt"/>
<rect x="28" y="711" width="14" height="14" fill="#303030"/>
<g opacity="0.62">
<rect x="50" y="708" width="20" height="20" fill="#8a8a8a"/>
<rect x="50" y="713" width="5" height="5" fill="#a2a2a2"/>
<rect x="50" y="723" width="5" height="5" fill="#a2a2a2"/>
<rect x="55" y="708" width="5" height="5" fill="#a2a2a2"/>
<rect x="55" y="718" width="5" height="5" fill="#a2a2a2"/>
<rect x="60" y="713" width="5" height="5" fill="#a2a2a2"/>
<rect x="60" y="723" width="5" height="5" fill="#a2a2a2"/>
<rect x="65" y="708" width="5" height="5" fill="#a2a2a2"/>
<rect x="65" y="718" width="5" height="5" fill="#a2a2a2"/>
<rect x="59.4" y="711" width="1.2" height="4" fill="#2a2a2a"/>
<rect x="58.6" y="715" width="2.8" height="4" fill="#2a2a2a"/>
<rect x="57.6" y="719" width="4.8" height="4" fill="#2a2a2a"/>
<rect x="56.4" y="723" width="7.2" height="4" fill="#2a2a2a"/>
<rect x="59.6" y="716" width="0.8" height="11" fill="#ddd"/>
<rect x="57" y="720" width="0.9" height="7" fill="#c8c8c8"/>
<rect x="62.2" y="720" width="0.9" height="7" fill="#c8c8c8"/>
<rect x="55.6" y="726.6" width="9" height="1" fill="#68a"/>
<rect x="59.6" y="713" width="0.8" height="2" fill="#9a7a4a"/>
</g>
<path d="M77.5 706.5 h4.4 l1.2 1.6 h4 v7.6 h-9.6z" fill="none" stroke="#7e7e7e" stroke-width="1" stroke-linejoin="miter" stroke-linecap="butt"/>
<path d="M77.5 709.4 h9.6" fill="none" stroke="#7e7e7e" stroke-width="1" stroke-linejoin="miter" stroke-linecap="butt"/>
<path d="M79.6 719.4 l5.6 4.2 l-5.6 4.4" fill="none" stroke="#c4c4c4" stroke-width="1.5" stroke-linejoin="miter" stroke-linecap="butt"/>
<text x="90" y="722.6" font-size="14.6" fill="#9e9e9e" textLength="21.4" lengthAdjust="spacing" xml:space="preserve">Tipi</text>
<rect x="277" y="712.4" width="6.6" height="3" fill="#7c7c7c"/>
<rect x="285" y="712.4" width="7" height="3" fill="#7c7c7c"/>
<rect x="277" y="716.4" width="3" height="3" fill="#7c7c7c"/>
<rect x="281.4" y="716.4" width="6.4" height="3" fill="#7c7c7c"/>
<rect x="289" y="716.4" width="3" height="3" fill="#7c7c7c"/>
<rect x="277" y="720.4" width="6.6" height="3" fill="#7c7c7c"/>
<rect x="285" y="720.4" width="7" height="3" fill="#7c7c7c"/>
<rect x="241" y="716" width="12" height="7.8" fill="#7c7c7c"/>
<path d="M252 716 V713.4 a3 3 0 0 0 -5.6 -1.4" fill="none" stroke="#7c7c7c" stroke-width="1.5" stroke-linejoin="miter" stroke-linecap="butt"/>
<text x="258.4" y="722" font-size="19" fill="#7c7c7c" textLength="13" lengthAdjust="spacing" font-weight="bold" font-style="italic" xml:space="preserve">α</text>
<rect x="1" y="730.5" width="295" height="27" fill="#3b3b3b"/>
<rect x="1" y="757" width="295" height="1" fill="#363636" opacity="0.8"/>
<path d="M6 743.7 C9 737.8 17 737.8 20 743.7" fill="none" stroke="#5e5e5e" stroke-width="1" stroke-linejoin="miter" stroke-linecap="butt"/>
<path d="M6 743.7 C9 750.8 17 750.8 20 743.7" fill="none" stroke="#808080" stroke-width="1.5" stroke-linejoin="miter" stroke-linecap="butt"/>
<rect x="28" y="738" width="14" height="14" fill="#303030"/>
<rect x="50.5" y="735" width="19" height="20" fill="#7096b4"/>
<rect x="50.5" y="740" width="5" height="5" fill="#7ba0bc"/>
<rect x="50.5" y="750" width="5" height="5" fill="#7ba0bc"/>
<rect x="55.5" y="735" width="5" height="5" fill="#7ba0bc"/>
<rect x="55.5" y="745" width="5" height="5" fill="#7ba0bc"/>
<rect x="60.5" y="740" width="5" height="5" fill="#7ba0bc"/>
<rect x="60.5" y="750" width="5" height="5" fill="#7ba0bc"/>
<rect x="65.5" y="735" width="4" height="5" fill="#7ba0bc"/>
<rect x="65.5" y="745" width="4" height="5" fill="#7ba0bc"/>
<path d="M80 733.5 h6.4 v6.6 M86.4 740 v3 h-3.6" fill="none" stroke="#7e7e7e" stroke-width="1" stroke-linejoin="miter" stroke-linecap="butt"/>
<path d="M77.5 734.5 l5.6 5.6 M83.4 740.4 h-3.6 M83.4 740.4 v-3.6" fill="none" stroke="#7e7e7e" stroke-width="1" stroke-linejoin="miter" stroke-linecap="butt"/>
<text x="90" y="749.6" font-size="14.6" fill="#9e9e9e" textLength="25.6" lengthAdjust="spacing" xml:space="preserve">Blue</text>
<rect x="277" y="737" width="5" height="5" fill="#545454"/>
<rect x="277" y="742" width="5" height="5" fill="#6a6a6a"/>
<rect x="277" y="747" width="5" height="5" fill="#545454"/>
<rect x="282" y="737" width="5" height="5" fill="#6a6a6a"/>
<rect x="282" y="742" width="5" height="5" fill="#545454"/>
<rect x="282" y="747" width="5" height="5" fill="#6a6a6a"/>
<rect x="287" y="737" width="5" height="5" fill="#545454"/>
<rect x="287" y="742" width="5" height="5" fill="#6a6a6a"/>
<rect x="287" y="747" width="5" height="5" fill="#545454"/>
<rect x="241" y="743" width="12" height="7.8" fill="#7c7c7c"/>
<path d="M252 743 V740.4 a3 3 0 0 0 -5.6 -1.4" fill="none" stroke="#7c7c7c" stroke-width="1.5" stroke-linejoin="miter" stroke-linecap="butt"/>
<text x="258.4" y="749" font-size="19" fill="#7c7c7c" textLength="13" lengthAdjust="spacing" font-weight="bold" font-style="italic" xml:space="preserve">α</text>
<rect x="1" y="784" width="295" height="1" fill="#363636" opacity="0.8"/>
<path d="M5.8 771.2 C9 764.6 17 764.6 20.2 771.2 C17 777.8 9 777.8 5.8 771.2Z" fill="#343434" stroke="#e0e0e0" stroke-width="1.2" stroke-linejoin="miter" stroke-linecap="butt"/>
<circle cx="13" cy="769.6" r="3.3" fill="#e0e0e0"/>
<path d="M6.4 772.8 C9.5 778 16.5 778 19.6 772.8" fill="none" stroke="#e0e0e0" stroke-width="1.6" stroke-linejoin="miter" stroke-linecap="butt"/>
<rect x="28" y="765" width="14" height="14" fill="#303030"/>
<rect x="50.5" y="762" width="19" height="20" fill="#000"/>
<path d="M80 760.5 h6.4 v6.6 M86.4 767 v3 h-3.6" fill="none" stroke="#dcdcdc" stroke-width="1" stroke-linejoin="miter" stroke-linecap="butt"/>
<path d="M77.5 761.5 l5.6 5.6 M83.4 767.4 h-3.6 M83.4 767.4 v-3.6" fill="none" stroke="#dcdcdc" stroke-width="1" stroke-linejoin="miter" stroke-linecap="butt"/>
<text x="90" y="776.6" font-size="14.6" fill="#e2e2e2" textLength="31" lengthAdjust="spacing" xml:space="preserve">Black</text>
<rect x="277" y="764" width="5" height="5" fill="#545454"/>
<rect x="277" y="769" width="5" height="5" fill="#6a6a6a"/>
<rect x="277" y="774" width="5" height="5" fill="#545454"/>
<rect x="282" y="764" width="5" height="5" fill="#6a6a6a"/>
<rect x="282" y="769" width="5" height="5" fill="#545454"/>
<rect x="282" y="774" width="5" height="5" fill="#6a6a6a"/>
<rect x="287" y="764" width="5" height="5" fill="#545454"/>
<rect x="287" y="769" width="5" height="5" fill="#6a6a6a"/>
<rect x="287" y="774" width="5" height="5" fill="#545454"/>
<rect x="241" y="770" width="12" height="7.8" fill="#7c7c7c"/>
<path d="M252 770 V767.4 a3 3 0 0 0 -5.6 -1.4" fill="none" stroke="#7c7c7c" stroke-width="1.5" stroke-linejoin="miter" stroke-linecap="butt"/>
<text x="258.4" y="776" font-size="19" fill="#7c7c7c" textLength="13" lengthAdjust="spacing" font-weight="bold" font-style="italic" xml:space="preserve">α</text>
<rect x="296" y="433" width="1" height="401" fill="#404040"/>
<path d="M16 840.4 V858 M7.2 849.2 H24.8" fill="none" stroke="#d6d6d6" stroke-width="1.7" stroke-linejoin="miter" stroke-linecap="butt"/>
<path d="M34 846.2 L43.4 846.2 L38.7 851.2Z" fill="#9a9a9a"/>
<rect x="57.4" y="839.8" width="15" height="15" fill="none" stroke="#d6d6d6" stroke-width="1.6"/>
<path d="M53.4 844 V858.6 H68.4" fill="none" stroke="#d6d6d6" stroke-width="1.6" stroke-linejoin="miter" stroke-linecap="butt"/>
<path d="M85.4 843.6 L95 853.8 L104.6 843.6" fill="none" stroke="#d6d6d6" stroke-width="1.7" stroke-linejoin="miter" stroke-linecap="butt"/>
<path d="M117.4 854.4 L127 844.2 L136.6 854.4" fill="none" stroke="#d6d6d6" stroke-width="1.7" stroke-linejoin="miter" stroke-linecap="butt"/>
<rect x="149" y="842.2" width="20" height="1.7" fill="#d6d6d6"/>
<circle cx="163.6" cy="843" r="1.9" fill="#d6d6d6"/>
<rect x="149" y="848.2" width="20" height="1.7" fill="#d6d6d6"/>
<circle cx="153.6" cy="849" r="1.9" fill="#d6d6d6"/>
<rect x="149" y="854.2" width="20" height="1.7" fill="#d6d6d6"/>
<circle cx="160" cy="855" r="1.9" fill="#d6d6d6"/>
<path d="M177 846.2 L186.4 846.2 L181.7 851.2Z" fill="#9a9a9a"/>
<rect x="271.6" y="838" width="5" height="2" fill="#d6d6d6"/>
<rect x="273" y="837.2" width="14" height="2.6" fill="#d6d6d6" rx="1"/>
<rect x="276.6" y="835.8" width="6.6" height="2" fill="#d6d6d6" rx="0.8"/>
<path d="M273.8 841.6 H286.2 V856 a2 2 0 0 1 -2 2 H275.8 a2 2 0 0 1 -2 -2z" fill="#d6d6d6"/>
</g>
<rect x="300.6" y="491" width="1.4" height="1.6" fill="#8a8a8a"/>
<rect x="300.6" y="494" width="1.4" height="1.6" fill="#8a8a8a"/>
<rect x="300.6" y="497" width="1.4" height="1.6" fill="#8a8a8a"/>
<rect x="300.6" y="500" width="1.4" height="1.6" fill="#8a8a8a"/>
<rect x="300.6" y="503" width="1.4" height="1.6" fill="#8a8a8a"/>
<rect x="300.6" y="506" width="1.4" height="1.6" fill="#8a8a8a"/>
<g id="doctabs">
<path d="M304.5 165 V131.5 a2.5 2.5 0 0 1 2.5 -2.5 H1109.5 a2.5 2.5 0 0 1 2.5 2.5 V165z" fill="#404040" stroke="#555" stroke-width="1" stroke-linejoin="miter" stroke-linecap="butt"/>
<rect x="304" y="164.5" width="809" height="1" fill="#5a5a5a"/>
<text x="591" y="152.8" font-size="13.6" fill="#d2d2d2" textLength="227.5" lengthAdjust="spacing" xml:space="preserve">structures_384x384.kra (41.1 MiB) *</text>
<path d="M1076.5 142.5 l13 13 M1089.5 142.5 l-13 13" fill="none" stroke="#dcdcdc" stroke-width="2.6" stroke-linejoin="miter" stroke-linecap="butt"/>
<path d="M1113.5 167 V130 a2.5 2.5 0 0 1 2.5 -2.5 H1907.5 a2.5 2.5 0 0 1 2.5 2.5 V167z" fill="#484848" stroke="#5a5a5a" stroke-width="1" stroke-linejoin="miter" stroke-linecap="butt"/>
<rect x="1114" y="164" width="796" height="3" fill="#484848"/>
<text x="1399" y="152" font-size="13.6" fill="#d2d2d2" textLength="228.6" lengthAdjust="spacing" xml:space="preserve">structures_256x256.kra (39.9 MiB) *</text>
<path d="M1885 141 l13 13 M1898 141 l-13 13" fill="none" stroke="#dcdcdc" stroke-width="2.6" stroke-linejoin="miter" stroke-linecap="butt"/>
</g>
<g id="rulers">
<rect x="326" y="166.5" width="1594" height="21.5" fill="#3d3d3d"/>
<rect x="304" y="166.5" width="22" height="21" fill="#484848"/>
<rect x="802" y="166.5" width="515" height="21.5" fill="#303030"/>
<rect x="801" y="181" width="1" height="7" fill="#d8d8d8"/>
<rect x="826" y="184.4" width="1" height="3.6" fill="#d8d8d8"/>
<rect x="851" y="181" width="1" height="7" fill="#d8d8d8"/>
<rect x="876" y="184.4" width="1" height="3.6" fill="#d8d8d8"/>
<rect x="901" y="181" width="1" height="7" fill="#d8d8d8"/>
<rect x="926" y="184.4" width="1" height="3.6" fill="#d8d8d8"/>
<rect x="951" y="181" width="1" height="7" fill="#d8d8d8"/>
<rect x="976" y="184.4" width="1" height="3.6" fill="#d8d8d8"/>
<rect x="1001" y="181" width="1" height="7" fill="#d8d8d8"/>
<rect x="1026" y="184.4" width="1" height="3.6" fill="#d8d8d8"/>
<rect x="1051" y="181" width="1" height="7" fill="#d8d8d8"/>
<rect x="1076" y="184.4" width="1" height="3.6" fill="#d8d8d8"/>
<rect x="1101" y="181" width="1" height="7" fill="#d8d8d8"/>
<rect x="1126" y="184.4" width="1" height="3.6" fill="#d8d8d8"/>
<rect x="1151" y="181" width="1" height="7" fill="#d8d8d8"/>
<rect x="1176" y="184.4" width="1" height="3.6" fill="#d8d8d8"/>
<rect x="1201" y="181" width="1" height="7" fill="#d8d8d8"/>
<rect x="1226" y="184.4" width="1" height="3.6" fill="#d8d8d8"/>
<rect x="1251" y="181" width="1" height="7" fill="#d8d8d8"/>
<rect x="1276" y="184.4" width="1" height="3.6" fill="#d8d8d8"/>
<rect x="1301" y="181" width="1" height="7" fill="#d8d8d8"/>
<text x="800.8" y="180" font-size="12.8" fill="#dadada" text-anchor="middle" xml:space="preserve">0</text>
<text x="900.8" y="180" font-size="12.8" fill="#dadada" text-anchor="middle" xml:space="preserve">50</text>
<text x="1000.8" y="180" font-size="12.8" fill="#dadada" text-anchor="middle" xml:space="preserve">100</text>
<text x="1100.8" y="180" font-size="12.8" fill="#dadada" text-anchor="middle" xml:space="preserve">150</text>
<text x="1200.8" y="180" font-size="12.8" fill="#dadada" text-anchor="middle" xml:space="preserve">200</text>
<text x="1300.8" y="180" font-size="12.8" fill="#dadada" text-anchor="middle" xml:space="preserve">250</text>
<rect x="304.6" y="187.5" width="21.4" height="678" fill="#3d3d3d"/>
<rect x="304.6" y="268" width="21.4" height="524" fill="#303030"/>
<rect x="319" y="267" width="7" height="1" fill="#d8d8d8"/>
<rect x="322.4" y="292" width="3.6" height="1" fill="#d8d8d8"/>
<rect x="319" y="317" width="7" height="1" fill="#d8d8d8"/>
<rect x="322.4" y="342" width="3.6" height="1" fill="#d8d8d8"/>
<rect x="319" y="367" width="7" height="1" fill="#d8d8d8"/>
<rect x="322.4" y="392" width="3.6" height="1" fill="#d8d8d8"/>
<rect x="319" y="417" width="7" height="1" fill="#d8d8d8"/>
<rect x="322.4" y="442" width="3.6" height="1" fill="#d8d8d8"/>
<rect x="319" y="467" width="7" height="1" fill="#d8d8d8"/>
<rect x="322.4" y="492" width="3.6" height="1" fill="#d8d8d8"/>
<rect x="319" y="517" width="7" height="1" fill="#d8d8d8"/>
<rect x="322.4" y="542" width="3.6" height="1" fill="#d8d8d8"/>
<rect x="319" y="567" width="7" height="1" fill="#d8d8d8"/>
<rect x="322.4" y="592" width="3.6" height="1" fill="#d8d8d8"/>
<rect x="319" y="617" width="7" height="1" fill="#d8d8d8"/>
<rect x="322.4" y="642" width="3.6" height="1" fill="#d8d8d8"/>
<rect x="319" y="667" width="7" height="1" fill="#d8d8d8"/>
<rect x="322.4" y="692" width="3.6" height="1" fill="#d8d8d8"/>
<rect x="319" y="717" width="7" height="1" fill="#d8d8d8"/>
<rect x="322.4" y="742" width="3.6" height="1" fill="#d8d8d8"/>
<rect x="319" y="767" width="7" height="1" fill="#d8d8d8"/>
<rect x="322.4" y="792" width="3.6" height="1" fill="#d8d8d8"/>
<text transform="translate(318.6 267.5) rotate(-90)" font-size="12.8" fill="#dadada" text-anchor="middle">0</text>
<text transform="translate(318.6 367.5) rotate(-90)" font-size="12.8" fill="#dadada" text-anchor="middle">50</text>
<text transform="translate(318.6 467.5) rotate(-90)" font-size="12.8" fill="#dadada" text-anchor="middle">100</text>
<text transform="translate(318.6 567.5) rotate(-90)" font-size="12.8" fill="#dadada" text-anchor="middle">150</text>
<text transform="translate(318.6 667.5) rotate(-90)" font-size="12.8" fill="#dadada" text-anchor="middle">200</text>
<text transform="translate(318.6 767.5) rotate(-90)" font-size="12.8" fill="#dadada" text-anchor="middle">250</text>
</g>
<g id="canvas">
<rect x="326" y="188" width="1577" height="660" fill="#818181"/>
<circle cx="630" cy="564" r="41.8" fill="none" stroke="#3e8e3e" stroke-width="1"/>
</g>
<g id="scrollbars">
<rect x="1903" y="188" width="17" height="660" fill="#3e3e3e"/>
<rect x="1904.5" y="188.5" width="15" height="15" fill="#454545" stroke="#585858" stroke-width="1"/>
<path d="M1907.4 198 L1916.6 198 L1912 193Z" fill="#9a9a9a"/>
<rect x="1904.5" y="395.5" width="15" height="242" fill="#464646" stroke="#5e5e5e" stroke-width="1"/>
<rect x="1904.5" y="832.5" width="15" height="15" fill="#454545" stroke="#585858" stroke-width="1"/>
<path d="M1907.4 838 L1916.6 838 L1912 843Z" fill="#9a9a9a"/>
<rect x="326" y="848" width="1577" height="17" fill="#3e3e3e"/>
<rect x="1903" y="848" width="17" height="17" fill="#484848"/>
<rect x="326.5" y="849.5" width="15" height="15" fill="#454545" stroke="#585858" stroke-width="1"/>
<path d="M335.6 852.4 L335.6 861.6 L330.6 857Z" fill="#9a9a9a"/>
<rect x="778.5" y="849.5" width="725" height="15" fill="#464646" stroke="#5e5e5e" stroke-width="1"/>
<rect x="1887.5" y="849.5" width="15" height="15" fill="#454545" stroke="#585858" stroke-width="1"/>
<path d="M1893.4 852.4 L1893.4 861.6 L1898.4 857Z" fill="#9a9a9a"/>
<rect x="953" y="868.6" width="1.6" height="1.4" fill="#8a8a8a"/>
<rect x="956" y="868.6" width="1.6" height="1.4" fill="#8a8a8a"/>
<rect x="959" y="868.6" width="1.6" height="1.4" fill="#8a8a8a"/>
<rect x="962" y="868.6" width="1.6" height="1.4" fill="#8a8a8a"/>
<rect x="965" y="868.6" width="1.6" height="1.4" fill="#8a8a8a"/>
<rect x="968" y="868.6" width="1.6" height="1.4" fill="#8a8a8a"/>
</g>
<g id="timeline">
<text x="11.5" y="893.8" font-size="14.6" fill="#d2d2d2" textLength="116.5" lengthAdjust="spacing" xml:space="preserve">Animation Timeline</text>
<rect x="168.4" y="879" width="2" height="16" fill="#d6d6d6"/>
<path d="M179.4 879 V895 L171 887z" fill="#d6d6d6"/>
<rect x="180.4" y="879" width="1.8" height="16" fill="#d6d6d6"/>
<path d="M208.4 879 V895 L200 887z" fill="#d6d6d6"/>
<rect x="209.4" y="879" width="1.8" height="16" fill="#d6d6d6"/>
<rect x="229" y="881" width="12.2" height="12.2" fill="#d6d6d6"/>
<path d="M261 879 V895 L269.2 887z" fill="#d6d6d6"/>
<rect x="290" y="879" width="1.8" height="16" fill="#d6d6d6"/>
<path d="M292.8 879 V895 L301.2 887z" fill="#d6d6d6"/>
<rect x="318" y="879" width="1.8" height="16" fill="#d6d6d6"/>
<path d="M321 879 V895 L329.4 887z" fill="#d6d6d6"/>
<rect x="330.2" y="880.4" width="1.8" height="13.2" fill="#d6d6d6"/>
<rect x="356.5" y="875.5" width="78" height="24.5" fill="#373737" stroke="#2e2e2e" stroke-width="1" rx="3"/>
<path d="M419 876 H432 a2 2 0 0 1 2 2 V897.5 a2 2 0 0 1 -2 2 H419z" fill="#464646"/>
<path d="M422 884.5 L432 884.5 L427 879.5Z" fill="#9a9a9a"/>
<path d="M422 891 L432 891 L427 896Z" fill="#9a9a9a"/>
<text x="359" y="893.6" font-size="14.6" fill="#e0e0e0" textLength="23.5" lengthAdjust="spacing" xml:space="preserve">#  3</text>
<rect x="453.5" y="874" width="27.5" height="26.5" fill="url(#cg)" stroke="#353535" stroke-width="1" rx="3"/>
<rect x="454.5" y="875" width="25.5" height="24.5" fill="none" stroke="#5c5c5c" stroke-width="1" rx="2" opacity="0.7"/>
<path d="M474 879.4 H478.4 V894 H458.4 V879.4 H470.4" fill="none" stroke="#d6d6d6" stroke-width="1.5" stroke-linejoin="miter" stroke-linecap="butt"/>
<rect x="457.6" y="880.6" width="1.5" height="1.3" fill="#484848"/>
<rect x="477.6" y="880.6" width="1.5" height="1.3" fill="#484848"/>
<rect x="457.6" y="883.3" width="1.5" height="1.3" fill="#484848"/>
<rect x="477.6" y="883.3" width="1.5" height="1.3" fill="#484848"/>
<rect x="457.6" y="886" width="1.5" height="1.3" fill="#484848"/>
<rect x="477.6" y="886" width="1.5" height="1.3" fill="#484848"/>
<rect x="457.6" y="888.7" width="1.5" height="1.3" fill="#484848"/>
<rect x="477.6" y="888.7" width="1.5" height="1.3" fill="#484848"/>
<rect x="457.6" y="891.4" width="1.5" height="1.3" fill="#484848"/>
<rect x="477.6" y="891.4" width="1.5" height="1.3" fill="#484848"/>
<path d="M466.4 883 V890.6 L471.4 886.8z" fill="#d6d6d6"/>
<line x1="477.4" y1="876.4" x2="472.6" y2="881.6" stroke="#d6d6d6" stroke-width="1.3" stroke-linecap="butt"/>
<line x1="461.6" y1="892.6" x2="458.4" y2="897.2" stroke="#d6d6d6" stroke-width="1.3" stroke-linecap="butt"/>
<rect x="483.5" y="876" width="112.5" height="24" fill="#373737" stroke="#2e2e2e" stroke-width="1" rx="3"/>
<rect x="484" y="876.5" width="40" height="23" fill="#53728e"/>
<path d="M580 876.5 H593.5 a2 2 0 0 1 2 2 V897.5 a2 2 0 0 1 -2 2 H580z" fill="#464646"/>
<path d="M583 885 L593 885 L588 880Z" fill="#9a9a9a"/>
<path d="M583 891.4 L593 891.4 L588 896.4Z" fill="#9a9a9a"/>
<text x="489.6" y="893.6" font-size="14.6" fill="#e4e4e4" textLength="82.4" lengthAdjust="spacing" xml:space="preserve">Speed: 100 %</text>
<rect x="619.8" y="881" width="16.4" height="11" fill="none" stroke="#d6d6d6" stroke-width="1.6"/>
<rect x="619.4" y="881.6" width="1.2" height="1.1" fill="#484848"/>
<rect x="635.4" y="881.6" width="1.2" height="1.1" fill="#484848"/>
<rect x="619.4" y="884.2" width="1.2" height="1.1" fill="#484848"/>
<rect x="635.4" y="884.2" width="1.2" height="1.1" fill="#484848"/>
<rect x="619.4" y="886.8" width="1.2" height="1.1" fill="#484848"/>
<rect x="635.4" y="886.8" width="1.2" height="1.1" fill="#484848"/>
<rect x="619.4" y="889.4" width="1.2" height="1.1" fill="#484848"/>
<rect x="635.4" y="889.4" width="1.2" height="1.1" fill="#484848"/>
<path d="M651 881 V879.4 H667.6 V890 H666" fill="none" stroke="#d6d6d6" stroke-width="1.5" stroke-linejoin="miter" stroke-linecap="butt"/>
<rect x="648.8" y="883" width="15.8" height="10.2" fill="none" stroke="#d6d6d6" stroke-width="1.6"/>
<rect x="648.4" y="883.6" width="1.2" height="1.1" fill="#484848"/>
<rect x="663.8" y="883.6" width="1.2" height="1.1" fill="#484848"/>
<rect x="648.4" y="886.2" width="1.2" height="1.1" fill="#484848"/>
<rect x="663.8" y="886.2" width="1.2" height="1.1" fill="#484848"/>
<rect x="648.4" y="888.8" width="1.2" height="1.1" fill="#484848"/>
<rect x="663.8" y="888.8" width="1.2" height="1.1" fill="#484848"/>
<rect x="648.4" y="891.4" width="1.2" height="1.1" fill="#484848"/>
<rect x="663.8" y="891.4" width="1.2" height="1.1" fill="#484848"/>
<rect x="680.4" y="881.2" width="16" height="10.8" fill="none" stroke="#d6d6d6" stroke-width="1.6"/>
<rect x="680" y="881.8" width="1.2" height="1.1" fill="#484848"/>
<rect x="695.6" y="881.8" width="1.2" height="1.1" fill="#484848"/>
<rect x="680" y="884.4" width="1.2" height="1.1" fill="#484848"/>
<rect x="695.6" y="884.4" width="1.2" height="1.1" fill="#484848"/>
<rect x="680" y="887" width="1.2" height="1.1" fill="#484848"/>
<rect x="695.6" y="887" width="1.2" height="1.1" fill="#484848"/>
<rect x="680" y="889.6" width="1.2" height="1.1" fill="#484848"/>
<rect x="695.6" y="889.6" width="1.2" height="1.1" fill="#484848"/>
<line x1="694.8" y1="878.4" x2="682.4" y2="894.8" stroke="#d6d6d6" stroke-width="1.5" stroke-linecap="butt"/>
<path d="M1736.6 877.6 C1731 882 1726.4 887.6 1726.6 892 C1726.8 895.4 1730.6 897 1736 897 C1741.4 897 1745.4 895.4 1745.6 892 C1745.8 887.6 1741.6 882 1736.6 877.6z" fill="#d6d6d6"/>
<path d="M1735.4 879.6 C1731 885 1730.4 891 1734 896.6 M1737 880 C1735.4 886 1736 892 1739.6 896.2 M1739 882 C1740 887 1741.4 891 1743.6 894.4" fill="none" stroke="#484848" stroke-width="1.1" stroke-linejoin="miter" stroke-linecap="butt"/>
<rect x="1757.6" y="883" width="2.2" height="7" fill="#d6d6d6"/>
<path d="M1767.6 878.6 V895 L1761 890.4 V883.2z" fill="#d6d6d6"/>
<path d="M1770.4 893 L1779 893 L1774.7 897.8Z" fill="#9a9a9a"/>
<rect x="1787" y="879" width="18" height="2.7" fill="#d6d6d6"/>
<rect x="1787" y="885.2" width="18" height="2.7" fill="#d6d6d6"/>
<rect x="1787" y="891.4" width="18" height="2.7" fill="#d6d6d6"/>
<path d="M1800.6 893.4 L1809.2 893.4 L1804.9 898.2Z" fill="#9a9a9a"/>
<path d="M1857.6 884 V878.8 H1867.2 V888.6 H1862" fill="none" stroke="#d6d6d6" stroke-width="1.5" stroke-linejoin="miter" stroke-linecap="butt"/>
<rect x="1858" y="879" width="9" height="2" fill="#d6d6d6"/>
<rect x="1850.8" y="884.6" width="10.4" height="10.6" fill="none" stroke="#d6d6d6" stroke-width="1.5"/>
<path d="M1886 881 l12 12 M1898 881 l-12 12" fill="none" stroke="#d6d6d6" stroke-width="1.5" stroke-linejoin="miter" stroke-linecap="butt"/>
<rect x="0" y="904" width="1920" height="1" fill="#3a3a3a"/>
<rect x="0" y="905" width="1903" height="27" fill="#353535"/>
<rect x="1" y="905" width="236" height="27" fill="#3a3a3a"/>
<rect x="1" y="905" width="236" height="1" fill="#4a4a4a" opacity="0.8"/>
<path d="M16 912 V928 M8 920 H24" fill="none" stroke="#d6d6d6" stroke-width="1.7" stroke-linejoin="miter" stroke-linecap="butt"/>
<path d="M17.6 922.6 L26 922.6 L21.8 927.2Z" fill="#9a9a9a"/>
<path d="M214.6 916 V912.6 H229.4 V916 M214.6 924 V927.4 H229.4 V924" fill="none" stroke="#d6d6d6" stroke-width="1.3" stroke-linejoin="miter" stroke-linecap="butt"/>
<path d="M214.4 920 L219 915.6 V918.6 H225 V915.6 L229.6 920 L225 924.4 V921.4 H219 V924.4z" fill="#d6d6d6"/>
<rect x="237" y="932" width="1666" height="21" fill="#363636"/>
<rect x="237" y="953" width="1666" height="25" fill="#373b3f"/>
<rect x="257" y="953" width="59.5" height="23.5" fill="#3d454d"/>
<rect x="237" y="924.6" width="1666" height="7.4" fill="#333"/>
<rect x="237" y="925" width="0.8" height="53" fill="#404040" opacity="0.8"/>
<rect x="257" y="925" width="0.8" height="53" fill="#404040" opacity="0.8"/>
<rect x="277" y="925" width="0.8" height="53" fill="#404040" opacity="0.8"/>
<rect x="297" y="925" width="0.8" height="53" fill="#404040" opacity="0.8"/>
<rect x="297" y="913" width="0.8" height="12" fill="#404040" opacity="0.8"/>
<rect x="317" y="925" width="0.8" height="53" fill="#404040" opacity="0.8"/>
<rect x="337" y="925" width="0.8" height="53" fill="#404040" opacity="0.8"/>
<rect x="357" y="925" width="0.8" height="53" fill="#404040" opacity="0.8"/>
<rect x="357" y="913" width="0.8" height="12" fill="#404040" opacity="0.8"/>
<rect x="377" y="925" width="0.8" height="53" fill="#404040" opacity="0.8"/>
<rect x="397" y="925" width="0.8" height="53" fill="#404040" opacity="0.8"/>
<rect x="417" y="925" width="0.8" height="53" fill="#404040" opacity="0.8"/>
<rect x="417" y="913" width="0.8" height="12" fill="#404040" opacity="0.8"/>
<rect x="437" y="925" width="0.8" height="53" fill="#404040" opacity="0.8"/>
<rect x="457" y="925" width="0.8" height="53" fill="#404040" opacity="0.8"/>
<rect x="477" y="925" width="0.8" height="53" fill="#404040" opacity="0.8"/>
<rect x="477" y="913" width="0.8" height="12" fill="#404040" opacity="0.8"/>
<rect x="497" y="925" width="0.8" height="53" fill="#404040" opacity="0.8"/>
<rect x="517" y="925" width="0.8" height="53" fill="#404040" opacity="0.8"/>
<rect x="537" y="925" width="0.8" height="53" fill="#404040" opacity="0.8"/>
<rect x="537" y="913" width="0.8" height="12" fill="#404040" opacity="0.8"/>
<rect x="557" y="925" width="0.8" height="53" fill="#404040" opacity="0.8"/>
<rect x="577" y="925" width="0.8" height="53" fill="#404040" opacity="0.8"/>
<rect x="597" y="925" width="0.8" height="53" fill="#404040" opacity="0.8"/>
<rect x="597" y="913" width="0.8" height="12" fill="#404040" opacity="0.8"/>
<rect x="617" y="925" width="0.8" height="53" fill="#404040" opacity="0.8"/>
<rect x="637" y="925" width="0.8" height="53" fill="#404040" opacity="0.8"/>
<rect x="657" y="925" width="0.8" height="53" fill="#404040" opacity="0.8"/>
<rect x="657" y="913" width="0.8" height="12" fill="#404040" opacity="0.8"/>
<rect x="677" y="925" width="0.8" height="53" fill="#404040" opacity="0.8"/>
<rect x="697" y="925" width="0.8" height="53" fill="#404040" opacity="0.8"/>
<rect x="717" y="925" width="0.8" height="53" fill="#404040" opacity="0.8"/>
<rect x="717" y="913" width="0.8" height="12" fill="#404040" opacity="0.8"/>
<rect x="737" y="925" width="0.8" height="53" fill="#404040" opacity="0.8"/>
<rect x="757" y="925" width="0.8" height="53" fill="#404040" opacity="0.8"/>
<rect x="777" y="925" width="0.8" height="53" fill="#404040" opacity="0.8"/>
<rect x="777" y="913" width="0.8" height="12" fill="#404040" opacity="0.8"/>
<rect x="797" y="925" width="0.8" height="53" fill="#404040" opacity="0.8"/>
<rect x="817" y="925" width="0.8" height="53" fill="#404040" opacity="0.8"/>
<rect x="837" y="925" width="0.8" height="53" fill="#404040" opacity="0.8"/>
<rect x="837" y="913" width="0.8" height="12" fill="#404040" opacity="0.8"/>
<rect x="857" y="925" width="0.8" height="53" fill="#404040" opacity="0.8"/>
<rect x="877" y="925" width="0.8" height="53" fill="#404040" opacity="0.8"/>
<rect x="897" y="925" width="0.8" height="53" fill="#404040" opacity="0.8"/>
<rect x="897" y="913" width="0.8" height="12" fill="#404040" opacity="0.8"/>
<rect x="917" y="925" width="0.8" height="53" fill="#404040" opacity="0.8"/>
<rect x="937" y="925" width="0.8" height="53" fill="#404040" opacity="0.8"/>
<rect x="957" y="925" width="0.8" height="53" fill="#404040" opacity="0.8"/>
<rect x="957" y="913" width="0.8" height="12" fill="#404040" opacity="0.8"/>
<rect x="977" y="925" width="0.8" height="53" fill="#404040" opacity="0.8"/>
<rect x="997" y="925" width="0.8" height="53" fill="#404040" opacity="0.8"/>
<rect x="1017" y="925" width="0.8" height="53" fill="#404040" opacity="0.8"/>
<rect x="1017" y="913" width="0.8" height="12" fill="#404040" opacity="0.8"/>
<rect x="1037" y="925" width="0.8" height="53" fill="#404040" opacity="0.8"/>
<rect x="1057" y="925" width="0.8" height="53" fill="#404040" opacity="0.8"/>
<rect x="1077" y="925" width="0.8" height="53" fill="#404040" opacity="0.8"/>
<rect x="1077" y="913" width="0.8" height="12" fill="#404040" opacity="0.8"/>
<rect x="1097" y="925" width="0.8" height="53" fill="#404040" opacity="0.8"/>
<rect x="1117" y="925" width="0.8" height="53" fill="#404040" opacity="0.8"/>
<rect x="1137" y="925" width="0.8" height="53" fill="#404040" opacity="0.8"/>
<rect x="1137" y="913" width="0.8" height="12" fill="#404040" opacity="0.8"/>
<rect x="1157" y="925" width="0.8" height="53" fill="#404040" opacity="0.8"/>
<rect x="1177" y="925" width="0.8" height="53" fill="#404040" opacity="0.8"/>
<rect x="1197" y="925" width="0.8" height="53" fill="#404040" opacity="0.8"/>
<rect x="1197" y="913" width="0.8" height="12" fill="#404040" opacity="0.8"/>
<rect x="1217" y="925" width="0.8" height="53" fill="#404040" opacity="0.8"/>
<rect x="1237" y="925" width="0.8" height="53" fill="#404040" opacity="0.8"/>
<rect x="1257" y="925" width="0.8" height="53" fill="#404040" opacity="0.8"/>
<rect x="1257" y="913" width="0.8" height="12" fill="#404040" opacity="0.8"/>
<rect x="1277" y="925" width="0.8" height="53" fill="#404040" opacity="0.8"/>
<rect x="1297" y="925" width="0.8" height="53" fill="#404040" opacity="0.8"/>
<rect x="1317" y="925" width="0.8" height="53" fill="#404040" opacity="0.8"/>
<rect x="1317" y="913" width="0.8" height="12" fill="#404040" opacity="0.8"/>
<rect x="1337" y="925" width="0.8" height="53" fill="#404040" opacity="0.8"/>
<rect x="1357" y="925" width="0.8" height="53" fill="#404040" opacity="0.8"/>
<rect x="1377" y="925" width="0.8" height="53" fill="#404040" opacity="0.8"/>
<rect x="1377" y="913" width="0.8" height="12" fill="#404040" opacity="0.8"/>
<rect x="1397" y="925" width="0.8" height="53" fill="#404040" opacity="0.8"/>
<rect x="1417" y="925" width="0.8" height="53" fill="#404040" opacity="0.8"/>
<rect x="1437" y="925" width="0.8" height="53" fill="#404040" opacity="0.8"/>
<rect x="1437" y="913" width="0.8" height="12" fill="#404040" opacity="0.8"/>
<rect x="1457" y="925" width="0.8" height="53" fill="#404040" opacity="0.8"/>
<rect x="1477" y="925" width="0.8" height="53" fill="#404040" opacity="0.8"/>
<rect x="1497" y="925" width="0.8" height="53" fill="#404040" opacity="0.8"/>
<rect x="1497" y="913" width="0.8" height="12" fill="#404040" opacity="0.8"/>
<rect x="1517" y="925" width="0.8" height="53" fill="#404040" opacity="0.8"/>
<rect x="1537" y="925" width="0.8" height="53" fill="#404040" opacity="0.8"/>
<rect x="1557" y="925" width="0.8" height="53" fill="#404040" opacity="0.8"/>
<rect x="1557" y="913" width="0.8" height="12" fill="#404040" opacity="0.8"/>
<rect x="1577" y="925" width="0.8" height="53" fill="#404040" opacity="0.8"/>
<rect x="1597" y="925" width="0.8" height="53" fill="#404040" opacity="0.8"/>
<rect x="1617" y="925" width="0.8" height="53" fill="#404040" opacity="0.8"/>
<rect x="1617" y="913" width="0.8" height="12" fill="#404040" opacity="0.8"/>
<rect x="1637" y="925" width="0.8" height="53" fill="#404040" opacity="0.8"/>
<rect x="1657" y="925" width="0.8" height="53" fill="#404040" opacity="0.8"/>
<rect x="1677" y="925" width="0.8" height="53" fill="#404040" opacity="0.8"/>
<rect x="1677" y="913" width="0.8" height="12" fill="#404040" opacity="0.8"/>
<rect x="1697" y="925" width="0.8" height="53" fill="#404040" opacity="0.8"/>
<rect x="1717" y="925" width="0.8" height="53" fill="#404040" opacity="0.8"/>
<rect x="1737" y="925" width="0.8" height="53" fill="#404040" opacity="0.8"/>
<rect x="1737" y="913" width="0.8" height="12" fill="#404040" opacity="0.8"/>
<rect x="1757" y="925" width="0.8" height="53" fill="#404040" opacity="0.8"/>
<rect x="1777" y="925" width="0.8" height="53" fill="#404040" opacity="0.8"/>
<rect x="1797" y="925" width="0.8" height="53" fill="#404040" opacity="0.8"/>
<rect x="1797" y="913" width="0.8" height="12" fill="#404040" opacity="0.8"/>
<rect x="1817" y="925" width="0.8" height="53" fill="#404040" opacity="0.8"/>
<rect x="1837" y="925" width="0.8" height="53" fill="#404040" opacity="0.8"/>
<rect x="1857" y="925" width="0.8" height="53" fill="#404040" opacity="0.8"/>
<rect x="1857" y="913" width="0.8" height="12" fill="#404040" opacity="0.8"/>
<rect x="1877" y="925" width="0.8" height="53" fill="#404040" opacity="0.8"/>
<rect x="1897" y="925" width="0.8" height="53" fill="#404040" opacity="0.8"/>
<rect x="237" y="932" width="1666" height="0.8" fill="#404040" opacity="0.8"/>
<rect x="237" y="952.4" width="1666" height="0.8" fill="#404040" opacity="0.7"/>
<text x="239.6" y="920.2" font-size="14.4" fill="#dcdcdc" xml:space="preserve">0</text>
<text x="299.6" y="920.2" font-size="14.4" fill="#dcdcdc" xml:space="preserve">3</text>
<text x="359.6" y="920.2" font-size="14.4" fill="#dcdcdc" xml:space="preserve">6</text>
<text x="419.6" y="920.2" font-size="14.4" fill="#dcdcdc" xml:space="preserve">9</text>
<text x="479.6" y="920.2" font-size="14.4" fill="#dcdcdc" xml:space="preserve">12</text>
<text x="539.6" y="920.2" font-size="14.4" fill="#dcdcdc" xml:space="preserve">15</text>
<text x="599.6" y="920.2" font-size="14.4" fill="#dcdcdc" xml:space="preserve">18</text>
<text x="659.6" y="920.2" font-size="14.4" fill="#dcdcdc" xml:space="preserve">21</text>
<text x="719.6" y="920.2" font-size="14.4" fill="#dcdcdc" xml:space="preserve">24</text>
<text x="779.6" y="920.2" font-size="14.4" fill="#dcdcdc" xml:space="preserve">27</text>
<text x="839.6" y="920.2" font-size="14.4" fill="#dcdcdc" xml:space="preserve">30</text>
<text x="899.6" y="920.2" font-size="14.4" fill="#dcdcdc" xml:space="preserve">33</text>
<text x="959.6" y="920.2" font-size="14.4" fill="#dcdcdc" xml:space="preserve">36</text>
<text x="1019.6" y="920.2" font-size="14.4" fill="#dcdcdc" xml:space="preserve">39</text>
<text x="1079.6" y="920.2" font-size="14.4" fill="#dcdcdc" xml:space="preserve">42</text>
<text x="1139.6" y="920.2" font-size="14.4" fill="#dcdcdc" xml:space="preserve">45</text>
<text x="1199.6" y="920.2" font-size="14.4" fill="#dcdcdc" xml:space="preserve">48</text>
<text x="1259.6" y="920.2" font-size="14.4" fill="#dcdcdc" xml:space="preserve">51</text>
<text x="1319.6" y="920.2" font-size="14.4" fill="#dcdcdc" xml:space="preserve">54</text>
<text x="1379.6" y="920.2" font-size="14.4" fill="#dcdcdc" xml:space="preserve">57</text>
<text x="1439.6" y="920.2" font-size="14.4" fill="#dcdcdc" xml:space="preserve">60</text>
<text x="1499.6" y="920.2" font-size="14.4" fill="#dcdcdc" xml:space="preserve">63</text>
<text x="1559.6" y="920.2" font-size="14.4" fill="#dcdcdc" xml:space="preserve">66</text>
<text x="1619.6" y="920.2" font-size="14.4" fill="#dcdcdc" xml:space="preserve">69</text>
<text x="1679.6" y="920.2" font-size="14.4" fill="#dcdcdc" xml:space="preserve">72</text>
<text x="1739.6" y="920.2" font-size="14.4" fill="#dcdcdc" xml:space="preserve">75</text>
<text x="1799.6" y="920.2" font-size="14.4" fill="#dcdcdc" xml:space="preserve">78</text>
<text x="1859.6" y="920.2" font-size="14.4" fill="#dcdcdc" xml:space="preserve">81</text>
<rect x="1" y="932" width="236" height="21" fill="#353535"/>
<rect x="1" y="955" width="236" height="19.5" fill="#353535"/>
<rect x="1" y="953" width="236" height="2" fill="#4f79a8"/>
<rect x="1" y="974.2" width="236" height="2" fill="#4f79a8"/>
<path d="M12.2 936.6 l4 4 l-1 0.6 l-1.2 -0.4 l-1.8 2.2 c0.4 1 0 2 -0.8 2.8 l-4.4 -4.4 c0.8 -0.8 1.8 -1.2 2.8 -0.8 l2.2 -1.8 l-0.4 -1.2z" fill="#d6d6d6"/>
<line x1="9.4" y1="943.2" x2="6.2" y2="946.4" stroke="#d6d6d6" stroke-width="1" stroke-linecap="butt"/>
<text x="21" y="946.8" font-size="14.6" fill="#e4e4e4" textLength="58" lengthAdjust="spacing" xml:space="preserve">Ani Static</text>
<path d="M165.8 942 C169 935.4 177 935.4 180.2 942 C177 948.6 169 948.6 165.8 942Z" fill="#343434" stroke="#e0e0e0" stroke-width="1.2" stroke-linejoin="miter" stroke-linecap="butt"/>
<circle cx="173" cy="940.4" r="3.3" fill="#e0e0e0"/>
<path d="M166.4 943.6 C169.5 948.8 176.5 948.8 179.6 943.6" fill="none" stroke="#e0e0e0" stroke-width="1.6" stroke-linejoin="miter" stroke-linecap="butt"/>
<rect x="186" y="939.6" width="12" height="7.8" fill="#7c7c7c"/>
<path d="M197 939.6 V937 a3 3 0 0 0 -5.6 -1.4" fill="none" stroke="#7c7c7c" stroke-width="1.5" stroke-linejoin="miter" stroke-linecap="butt"/>
<text x="203" y="946.2" font-size="19" fill="#7c7c7c" textLength="13" lengthAdjust="spacing" font-weight="bold" font-style="italic" xml:space="preserve">α</text>
<rect x="220" y="934.2" width="5" height="5" fill="#545454"/>
<rect x="220" y="939.2" width="5" height="5" fill="#6a6a6a"/>
<rect x="220" y="944.2" width="5" height="5" fill="#545454"/>
<rect x="225" y="934.2" width="5" height="5" fill="#6a6a6a"/>
<rect x="225" y="939.2" width="5" height="5" fill="#545454"/>
<rect x="225" y="944.2" width="5" height="5" fill="#6a6a6a"/>
<rect x="230" y="934.2" width="5" height="5" fill="#545454"/>
<rect x="230" y="939.2" width="5" height="5" fill="#6a6a6a"/>
<rect x="230" y="944.2" width="5" height="5" fill="#545454"/>
<path d="M12.2 960.4 l4 4 l-1 0.6 l-1.2 -0.4 l-1.8 2.2 c0.4 1 0 2 -0.8 2.8 l-4.4 -4.4 c0.8 -0.8 1.8 -1.2 2.8 -0.8 l2.2 -1.8 l-0.4 -1.2z" fill="#d6d6d6"/>
<line x1="9.4" y1="967" x2="6.2" y2="970.2" stroke="#d6d6d6" stroke-width="1" stroke-linecap="butt"/>
<text x="21" y="970.6" font-size="14.6" fill="#e4e4e4" textLength="56" lengthAdjust="spacing" xml:space="preserve">Ani Glass</text>
<path d="M165.8 965.8 C169 959.2 177 959.2 180.2 965.8 C177 972.4 169 972.4 165.8 965.8Z" fill="#343434" stroke="#e0e0e0" stroke-width="1.2" stroke-linejoin="miter" stroke-linecap="butt"/>
<circle cx="173" cy="964.2" r="3.3" fill="#e0e0e0"/>
<path d="M166.4 967.4 C169.5 972.6 176.5 972.6 179.6 967.4" fill="none" stroke="#e0e0e0" stroke-width="1.6" stroke-linejoin="miter" stroke-linecap="butt"/>
<rect x="186" y="963.4" width="12" height="7.8" fill="#7c7c7c"/>
<path d="M197 963.4 V960.8 a3 3 0 0 0 -5.6 -1.4" fill="none" stroke="#7c7c7c" stroke-width="1.5" stroke-linejoin="miter" stroke-linecap="butt"/>
<text x="203" y="970" font-size="19" fill="#7c7c7c" textLength="13" lengthAdjust="spacing" font-weight="bold" font-style="italic" xml:space="preserve">α</text>
<rect x="220" y="958" width="5" height="5" fill="#545454"/>
<rect x="220" y="963" width="5" height="5" fill="#6a6a6a"/>
<rect x="220" y="968" width="5" height="5" fill="#545454"/>
<rect x="225" y="958" width="5" height="5" fill="#6a6a6a"/>
<rect x="225" y="963" width="5" height="5" fill="#545454"/>
<rect x="225" y="968" width="5" height="5" fill="#6a6a6a"/>
<rect x="230" y="958" width="5" height="5" fill="#545454"/>
<rect x="230" y="963" width="5" height="5" fill="#6a6a6a"/>
<rect x="230" y="968" width="5" height="5" fill="#545454"/>
<rect x="237" y="925" width="19.4" height="7" fill="#e8a038"/>
<rect x="237.2" y="932.6" width="1.9" height="43.6" fill="#e8a038"/>
<rect x="254.2" y="932.6" width="1.9" height="43.6" fill="#e8a038"/>
<circle cx="246.6" cy="964.6" r="2.5" fill="#e8a038"/>
<rect x="1903" y="905" width="17" height="73" fill="#3e3e3e"/>
<rect x="1903.5" y="905.5" width="16" height="15" fill="#454545" stroke="#585858" stroke-width="1"/>
<path d="M1906.4 915.4 L1916 915.4 L1911.2 910.6Z" fill="#9a9a9a"/>
<rect x="1903.5" y="923.5" width="16" height="31" fill="#464646" stroke="#5e5e5e" stroke-width="1"/>
<rect x="1903.5" y="961.5" width="16" height="15" fill="#454545" stroke="#585858" stroke-width="1"/>
<path d="M1906.4 966.6 L1916 966.6 L1911.2 971.4Z" fill="#9a9a9a"/>
<rect x="0" y="978" width="1903" height="17" fill="#3e3e3e"/>
<rect x="1903" y="978" width="17" height="17" fill="#484848"/>
<rect x="1.5" y="978.5" width="15" height="15.6" fill="#454545" stroke="#585858" stroke-width="1"/>
<path d="M11 981.6 L11 990.6 L6 986.1Z" fill="#9a9a9a"/>
<rect x="18.5" y="978.5" width="1745" height="15.6" fill="#474747" stroke="#606060" stroke-width="1"/>
<rect x="1886.5" y="978.5" width="15" height="15.6" fill="#454545" stroke="#585858" stroke-width="1"/>
<path d="M1891.4 981.6 L1891.4 990.6 L1896.4 986.1Z" fill="#9a9a9a"/>
</g>
<g id="statusbar">
<rect x="0" y="995" width="1920" height="35" fill="#484848"/>
<rect x="7.4" y="1004.4" width="14.6" height="14.6" fill="none" stroke="#d6d6d6" stroke-width="1.1"/>
<circle cx="14.7" cy="1011.7" r="4.2" fill="none" stroke="#d6d6d6" stroke-width="1.3" stroke-dasharray="1.2 1.5"/>
<text x="37.5" y="1019" font-size="14.6" fill="#d2d2d2" textLength="64.5" lengthAdjust="spacing" xml:space="preserve">b) Basic-1</text>
<text x="472" y="1019" font-size="14.6" fill="#d2d2d2" textLength="322" lengthAdjust="spacing" xml:space="preserve">RGB/Alpha (8-bit integer/channel)  sRGB built-in</text>
<rect x="1405.1" y="999.1" width="141.4" height="27" fill="#464646" stroke="#3a3a3a" stroke-width="1"/>
<text x="1408.5" y="1019" font-size="14.6" fill="#d2d2d2" textLength="133.4" lengthAdjust="spacing" xml:space="preserve">256 x 256 (39.9 MiB)</text>
<rect x="1437" y="1021" width="7.4" height="1" fill="#d2d2d2"/>
<circle cx="1567" cy="1012.8" r="12" fill="#323232"/>
<line x1="1567" y1="1002.5" x2="1567" y2="1023" stroke="#4a4a4a" stroke-width="1" stroke-linecap="butt" stroke-dasharray="1.2 1.6"/>
<line x1="1556.5" y1="1012.8" x2="1567" y2="1012.8" stroke="#4a4a4a" stroke-width="1" stroke-linecap="butt" stroke-dasharray="1.2 1.6"/>
<line x1="1567" y1="1012.8" x2="1579.6" y2="1012.8" stroke="#e4e4e4" stroke-width="1.7" stroke-linecap="butt"/>
<circle cx="1567" cy="1012.8" r="1.3" fill="#e4e4e4"/>
<circle cx="1579.8" cy="1012.8" r="1.3" fill="#e4e4e4"/>
<text x="1589.5" y="1019" font-size="14.6" fill="#d2d2d2" textLength="30.5" lengthAdjust="spacing" xml:space="preserve">0.00°</text>
<text x="1744" y="1019" font-size="14.6" fill="#d2d2d2" textLength="46.6" lengthAdjust="spacing" xml:space="preserve">200.0%</text>
<rect x="1808.6" y="1010" width="81.4" height="6" fill="#3a3a3a" rx="3"/>
<rect x="1809" y="1010.6" width="28" height="5" fill="#6a96c8" rx="2.5"/>
<rect x="1835.1" y="1005.1" width="13.6" height="14" fill="#4c4c4c" stroke="#363636" stroke-width="1" rx="3"/>
<rect x="1895.8" y="1006.4" width="18.6" height="11.2" fill="none" stroke="#d6d6d6" stroke-width="1.3"/>
<rect x="1904.4" y="1017.6" width="1.4" height="3.4" fill="#d6d6d6"/>
<rect x="1898.4" y="1020.6" width="13.4" height="1.4" fill="#d6d6d6"/>
<circle cx="1905" cy="1012" r="1.3" fill="#fff"/>
</g>
<g id="image" transform="translate(801 267) scale(2)">
<rect x="0" y="0" width="256" height="256" fill="#000"/>
<clipPath id="rl"><polygon points="31,12.8 157.9,12.8 82,88.7 31,88.7"/></clipPath>
<clipPath id="rr"><polygon points="157.9,12.8 243,12.8 243,89.4"/></clipPath>
<g clip-path="url(#rl)">
<rect x="28" y="10" width="220" height="82" fill="#1565c0"/>
<path d="M23.55 7.6 Q26.49 9.38 28.8 11.6 C28.59 13.71 26.59 15 23.55 15 C20.51 15 18.51 13.71 18.3 11.6 Q20.61 9.38 23.55 7.6 Z" fill="#000"/>
<path d="M39.6 7.6 Q42.54 9.38 44.85 11.6 C44.64 13.71 42.65 15 39.6 15 C36.55 15 34.56 13.71 34.35 11.6 Q36.66 9.38 39.6 7.6 Z" fill="#000"/>
<path d="M55.65 7.6 Q58.59 9.38 60.9 11.6 C60.69 13.71 58.7 15 55.65 15 C52.61 15 50.61 13.71 50.4 11.6 Q52.71 9.38 55.65 7.6 Z" fill="#000"/>
<path d="M71.7 7.6 Q74.64 9.38 76.95 11.6 C76.74 13.71 74.75 15 71.7 15 C68.66 15 66.66 13.71 66.45 11.6 Q68.76 9.38 71.7 7.6 Z" fill="#000"/>
<path d="M87.75 7.6 Q90.69 9.38 93 11.6 C92.79 13.71 90.8 15 87.75 15 C84.7 15 82.71 13.71 82.5 11.6 Q84.81 9.38 87.75 7.6 Z" fill="#000"/>
<path d="M103.8 7.6 Q106.74 9.38 109.05 11.6 C108.84 13.71 106.84 15 103.8 15 C100.75 15 98.76 13.71 98.55 11.6 Q100.86 9.38 103.8 7.6 Z" fill="#000"/>
<path d="M119.85 7.6 Q122.79 9.38 125.1 11.6 C124.89 13.71 122.9 15 119.85 15 C116.81 15 114.81 13.71 114.6 11.6 Q116.91 9.38 119.85 7.6 Z" fill="#000"/>
<path d="M135.9 7.6 Q138.84 9.38 141.15 11.6 C140.94 13.71 138.94 15 135.9 15 C132.86 15 130.86 13.71 130.65 11.6 Q132.96 9.38 135.9 7.6 Z" fill="#000"/>
<path d="M151.95 7.6 Q154.89 9.38 157.2 11.6 C156.99 13.71 155 15 151.95 15 C148.91 15 146.91 13.71 146.7 11.6 Q149.01 9.38 151.95 7.6 Z" fill="#000"/>
<path d="M168 7.6 Q170.94 9.38 173.25 11.6 C173.04 13.71 171.05 15 168 15 C164.96 15 162.96 13.71 162.75 11.6 Q165.06 9.38 168 7.6 Z" fill="#000"/>
<path d="M15.5 15.45 Q18.41 17.01 20.7 18.96 C20.49 20.81 18.52 21.95 15.5 21.95 C12.48 21.95 10.51 20.81 10.3 18.96 Q12.59 17.01 15.5 15.45 Z" fill="#000"/>
<path d="M31.55 15.45 Q34.46 17.01 36.75 18.96 C36.54 20.81 34.57 21.95 31.55 21.95 C28.53 21.95 26.56 20.81 26.35 18.96 Q28.64 17.01 31.55 15.45 Z" fill="#000"/>
<path d="M47.6 15.45 Q50.51 17.01 52.8 18.96 C52.59 20.81 50.62 21.95 47.6 21.95 C44.58 21.95 42.61 20.81 42.4 18.96 Q44.69 17.01 47.6 15.45 Z" fill="#000"/>
<path d="M63.65 15.45 Q66.56 17.01 68.85 18.96 C68.64 20.81 66.67 21.95 63.65 21.95 C60.63 21.95 58.66 20.81 58.45 18.96 Q60.74 17.01 63.65 15.45 Z" fill="#000"/>
<path d="M79.7 15.45 Q82.61 17.01 84.9 18.96 C84.69 20.81 82.72 21.95 79.7 21.95 C76.68 21.95 74.71 20.81 74.5 18.96 Q76.79 17.01 79.7 15.45 Z" fill="#000"/>
<path d="M95.75 15.45 Q98.66 17.01 100.95 18.96 C100.74 20.81 98.77 21.95 95.75 21.95 C92.73 21.95 90.76 20.81 90.55 18.96 Q92.84 17.01 95.75 15.45 Z" fill="#000"/>
<path d="M111.8 15.45 Q114.71 17.01 117 18.96 C116.79 20.81 114.82 21.95 111.8 21.95 C108.78 21.95 106.81 20.81 106.6 18.96 Q108.89 17.01 111.8 15.45 Z" fill="#000"/>
<path d="M127.85 15.45 Q130.76 17.01 133.05 18.96 C132.84 20.81 130.87 21.95 127.85 21.95 C124.83 21.95 122.86 20.81 122.65 18.96 Q124.94 17.01 127.85 15.45 Z" fill="#000"/>
<path d="M143.9 15.45 Q146.81 17.01 149.1 18.96 C148.89 20.81 146.92 21.95 143.9 21.95 C140.88 21.95 138.91 20.81 138.7 18.96 Q140.99 17.01 143.9 15.45 Z" fill="#000"/>
<path d="M159.95 15.45 Q162.86 17.01 165.15 18.96 C164.94 20.81 162.97 21.95 159.95 21.95 C156.93 21.95 154.96 20.81 154.75 18.96 Q157.04 17.01 159.95 15.45 Z" fill="#000"/>
<path d="M23.55 20.9 Q26.29 22.87 28.45 25.33 C28.25 27.67 26.39 29.1 23.55 29.1 C20.71 29.1 18.85 27.67 18.65 25.33 Q20.81 22.87 23.55 20.9 Z" fill="#000"/>
<path d="M39.6 20.9 Q42.34 22.87 44.5 25.33 C44.3 27.67 42.44 29.1 39.6 29.1 C36.76 29.1 34.9 27.67 34.7 25.33 Q36.86 22.87 39.6 20.9 Z" fill="#000"/>
<path d="M55.65 20.9 Q58.39 22.87 60.55 25.33 C60.35 27.67 58.49 29.1 55.65 29.1 C52.81 29.1 50.95 27.67 50.75 25.33 Q52.91 22.87 55.65 20.9 Z" fill="#000"/>
<path d="M71.7 20.9 Q74.44 22.87 76.6 25.33 C76.4 27.67 74.54 29.1 71.7 29.1 C68.86 29.1 67 27.67 66.8 25.33 Q68.96 22.87 71.7 20.9 Z" fill="#000"/>
<path d="M87.75 20.9 Q90.49 22.87 92.65 25.33 C92.45 27.67 90.59 29.1 87.75 29.1 C84.91 29.1 83.05 27.67 82.85 25.33 Q85.01 22.87 87.75 20.9 Z" fill="#000"/>
<path d="M103.8 20.9 Q106.54 22.87 108.7 25.33 C108.5 27.67 106.64 29.1 103.8 29.1 C100.96 29.1 99.1 27.67 98.9 25.33 Q101.06 22.87 103.8 20.9 Z" fill="#000"/>
<path d="M119.85 20.9 Q122.59 22.87 124.75 25.33 C124.55 27.67 122.69 29.1 119.85 29.1 C117.01 29.1 115.15 27.67 114.95 25.33 Q117.11 22.87 119.85 20.9 Z" fill="#000"/>
<path d="M135.9 20.9 Q138.64 22.87 140.8 25.33 C140.6 27.67 138.74 29.1 135.9 29.1 C133.06 29.1 131.2 27.67 131 25.33 Q133.16 22.87 135.9 20.9 Z" fill="#000"/>
<path d="M151.95 20.9 Q154.69 22.87 156.85 25.33 C156.65 27.67 154.79 29.1 151.95 29.1 C149.11 29.1 147.25 27.67 147.05 25.33 Q149.21 22.87 151.95 20.9 Z" fill="#000"/>
<path d="M15.5 26.9 Q18.8 29.4 21.4 32.52 C21.16 35.48 18.92 37.3 15.5 37.3 C12.08 37.3 9.84 35.48 9.6 32.52 Q12.2 29.4 15.5 26.9 Z" fill="#000"/>
<path d="M31.55 26.9 Q34.85 29.4 37.45 32.52 C37.21 35.48 34.97 37.3 31.55 37.3 C28.13 37.3 25.89 35.48 25.65 32.52 Q28.25 29.4 31.55 26.9 Z" fill="#000"/>
<path d="M47.6 26.9 Q50.9 29.4 53.5 32.52 C53.26 35.48 51.02 37.3 47.6 37.3 C44.18 37.3 41.94 35.48 41.7 32.52 Q44.3 29.4 47.6 26.9 Z" fill="#000"/>
<path d="M63.65 26.9 Q66.95 29.4 69.55 32.52 C69.31 35.48 67.07 37.3 63.65 37.3 C60.23 37.3 57.99 35.48 57.75 32.52 Q60.35 29.4 63.65 26.9 Z" fill="#000"/>
<path d="M79.7 26.9 Q83 29.4 85.6 32.52 C85.36 35.48 83.12 37.3 79.7 37.3 C76.28 37.3 74.04 35.48 73.8 32.52 Q76.4 29.4 79.7 26.9 Z" fill="#000"/>
<path d="M95.75 26.9 Q99.05 29.4 101.65 32.52 C101.41 35.48 99.17 37.3 95.75 37.3 C92.33 37.3 90.09 35.48 89.85 32.52 Q92.45 29.4 95.75 26.9 Z" fill="#000"/>
<path d="M111.8 26.9 Q115.1 29.4 117.7 32.52 C117.46 35.48 115.22 37.3 111.8 37.3 C108.38 37.3 106.14 35.48 105.9 32.52 Q108.5 29.4 111.8 26.9 Z" fill="#000"/>
<path d="M127.85 26.9 Q131.15 29.4 133.75 32.52 C133.51 35.48 131.27 37.3 127.85 37.3 C124.43 37.3 122.19 35.48 121.95 32.52 Q124.55 29.4 127.85 26.9 Z" fill="#000"/>
<path d="M143.9 26.9 Q147.2 29.4 149.8 32.52 C149.56 35.48 147.32 37.3 143.9 37.3 C140.48 37.3 138.24 35.48 138 32.52 Q140.6 29.4 143.9 26.9 Z" fill="#000"/>
<path d="M23.55 36.4 Q26.46 38.61 28.75 41.37 C28.54 43.99 26.57 45.6 23.55 45.6 C20.53 45.6 18.56 43.99 18.35 41.37 Q20.64 38.61 23.55 36.4 Z" fill="#000"/>
<path d="M39.6 36.4 Q42.51 38.61 44.8 41.37 C44.59 43.99 42.62 45.6 39.6 45.6 C36.58 45.6 34.61 43.99 34.4 41.37 Q36.69 38.61 39.6 36.4 Z" fill="#000"/>
<path d="M55.65 36.4 Q58.56 38.61 60.85 41.37 C60.64 43.99 58.67 45.6 55.65 45.6 C52.63 45.6 50.66 43.99 50.45 41.37 Q52.74 38.61 55.65 36.4 Z" fill="#000"/>
<path d="M71.7 36.4 Q74.61 38.61 76.9 41.37 C76.69 43.99 74.72 45.6 71.7 45.6 C68.68 45.6 66.71 43.99 66.5 41.37 Q68.79 38.61 71.7 36.4 Z" fill="#000"/>
<path d="M87.75 36.4 Q90.66 38.61 92.95 41.37 C92.74 43.99 90.77 45.6 87.75 45.6 C84.73 45.6 82.76 43.99 82.55 41.37 Q84.84 38.61 87.75 36.4 Z" fill="#000"/>
<path d="M103.8 36.4 Q106.71 38.61 109 41.37 C108.79 43.99 106.82 45.6 103.8 45.6 C100.78 45.6 98.81 43.99 98.6 41.37 Q100.89 38.61 103.8 36.4 Z" fill="#000"/>
<path d="M119.85 36.4 Q122.76 38.61 125.05 41.37 C124.84 43.99 122.87 45.6 119.85 45.6 C116.83 45.6 114.86 43.99 114.65 41.37 Q116.94 38.61 119.85 36.4 Z" fill="#000"/>
<path d="M135.9 36.4 Q138.81 38.61 141.1 41.37 C140.89 43.99 138.92 45.6 135.9 45.6 C132.88 45.6 130.91 43.99 130.7 41.37 Q132.99 38.61 135.9 36.4 Z" fill="#000"/>
<path d="M15.5 44.9 Q18.58 47.11 21 49.87 C20.78 52.49 18.69 54.1 15.5 54.1 C12.31 54.1 10.22 52.49 10 49.87 Q12.42 47.11 15.5 44.9 Z" fill="#000"/>
<path d="M31.55 44.9 Q34.63 47.11 37.05 49.87 C36.83 52.49 34.74 54.1 31.55 54.1 C28.36 54.1 26.27 52.49 26.05 49.87 Q28.47 47.11 31.55 44.9 Z" fill="#000"/>
<path d="M47.6 44.9 Q50.68 47.11 53.1 49.87 C52.88 52.49 50.79 54.1 47.6 54.1 C44.41 54.1 42.32 52.49 42.1 49.87 Q44.52 47.11 47.6 44.9 Z" fill="#000"/>
<path d="M63.65 44.9 Q66.73 47.11 69.15 49.87 C68.93 52.49 66.84 54.1 63.65 54.1 C60.46 54.1 58.37 52.49 58.15 49.87 Q60.57 47.11 63.65 44.9 Z" fill="#000"/>
<path d="M79.7 44.9 Q82.78 47.11 85.2 49.87 C84.98 52.49 82.89 54.1 79.7 54.1 C76.51 54.1 74.42 52.49 74.2 49.87 Q76.62 47.11 79.7 44.9 Z" fill="#000"/>
<path d="M95.75 44.9 Q98.83 47.11 101.25 49.87 C101.03 52.49 98.94 54.1 95.75 54.1 C92.56 54.1 90.47 52.49 90.25 49.87 Q92.67 47.11 95.75 44.9 Z" fill="#000"/>
<path d="M111.8 44.9 Q114.88 47.11 117.3 49.87 C117.08 52.49 114.99 54.1 111.8 54.1 C108.61 54.1 106.52 52.49 106.3 49.87 Q108.72 47.11 111.8 44.9 Z" fill="#000"/>
<path d="M127.85 44.9 Q130.93 47.11 133.35 49.87 C133.13 52.49 131.04 54.1 127.85 54.1 C124.66 54.1 122.57 52.49 122.35 49.87 Q124.77 47.11 127.85 44.9 Z" fill="#000"/>
<path d="M23.55 53.3 Q26.57 55.46 28.95 58.16 C28.73 60.73 26.68 62.3 23.55 62.3 C20.42 62.3 18.37 60.73 18.15 58.16 Q20.53 55.46 23.55 53.3 Z" fill="#000"/>
<path d="M39.6 53.3 Q42.62 55.46 45 58.16 C44.78 60.73 42.73 62.3 39.6 62.3 C36.47 62.3 34.42 60.73 34.2 58.16 Q36.58 55.46 39.6 53.3 Z" fill="#000"/>
<path d="M55.65 53.3 Q58.67 55.46 61.05 58.16 C60.83 60.73 58.78 62.3 55.65 62.3 C52.52 62.3 50.47 60.73 50.25 58.16 Q52.63 55.46 55.65 53.3 Z" fill="#000"/>
<path d="M71.7 53.3 Q74.72 55.46 77.1 58.16 C76.88 60.73 74.83 62.3 71.7 62.3 C68.57 62.3 66.52 60.73 66.3 58.16 Q68.68 55.46 71.7 53.3 Z" fill="#000"/>
<path d="M87.75 53.3 Q90.77 55.46 93.15 58.16 C92.93 60.73 90.88 62.3 87.75 62.3 C84.62 62.3 82.57 60.73 82.35 58.16 Q84.73 55.46 87.75 53.3 Z" fill="#000"/>
<path d="M103.8 53.3 Q106.82 55.46 109.2 58.16 C108.98 60.73 106.93 62.3 103.8 62.3 C100.67 62.3 98.62 60.73 98.4 58.16 Q100.78 55.46 103.8 53.3 Z" fill="#000"/>
<path d="M119.85 53.3 Q122.87 55.46 125.25 58.16 C125.03 60.73 122.98 62.3 119.85 62.3 C116.72 62.3 114.67 60.73 114.45 58.16 Q116.83 55.46 119.85 53.3 Z" fill="#000"/>
<path d="M15.5 61.4 Q18.47 63.51 20.8 66.15 C20.59 68.66 18.57 70.2 15.5 70.2 C12.43 70.2 10.41 68.66 10.2 66.15 Q12.53 63.51 15.5 61.4 Z" fill="#000"/>
<path d="M31.55 61.4 Q34.52 63.51 36.85 66.15 C36.64 68.66 34.62 70.2 31.55 70.2 C28.48 70.2 26.46 68.66 26.25 66.15 Q28.58 63.51 31.55 61.4 Z" fill="#000"/>
<path d="M47.6 61.4 Q50.57 63.51 52.9 66.15 C52.69 68.66 50.67 70.2 47.6 70.2 C44.53 70.2 42.51 68.66 42.3 66.15 Q44.63 63.51 47.6 61.4 Z" fill="#000"/>
<path d="M63.65 61.4 Q66.62 63.51 68.95 66.15 C68.74 68.66 66.72 70.2 63.65 70.2 C60.58 70.2 58.56 68.66 58.35 66.15 Q60.68 63.51 63.65 61.4 Z" fill="#000"/>
<path d="M79.7 61.4 Q82.67 63.51 85 66.15 C84.79 68.66 82.77 70.2 79.7 70.2 C76.63 70.2 74.61 68.66 74.4 66.15 Q76.73 63.51 79.7 61.4 Z" fill="#000"/>
<path d="M95.75 61.4 Q98.72 63.51 101.05 66.15 C100.84 68.66 98.82 70.2 95.75 70.2 C92.68 70.2 90.66 68.66 90.45 66.15 Q92.78 63.51 95.75 61.4 Z" fill="#000"/>
<path d="M111.8 61.4 Q114.77 63.51 117.1 66.15 C116.89 68.66 114.87 70.2 111.8 70.2 C108.73 70.2 106.71 68.66 106.5 66.15 Q108.83 63.51 111.8 61.4 Z" fill="#000"/>
<path d="M23.55 70 Q26.52 72.11 28.85 74.75 C28.64 77.26 26.62 78.8 23.55 78.8 C20.48 78.8 18.46 77.26 18.25 74.75 Q20.58 72.11 23.55 70 Z" fill="#000"/>
<path d="M39.6 70 Q42.57 72.11 44.9 74.75 C44.69 77.26 42.67 78.8 39.6 78.8 C36.53 78.8 34.51 77.26 34.3 74.75 Q36.63 72.11 39.6 70 Z" fill="#000"/>
<path d="M55.65 70 Q58.62 72.11 60.95 74.75 C60.74 77.26 58.72 78.8 55.65 78.8 C52.58 78.8 50.56 77.26 50.35 74.75 Q52.68 72.11 55.65 70 Z" fill="#000"/>
<path d="M71.7 70 Q74.67 72.11 77 74.75 C76.79 77.26 74.77 78.8 71.7 78.8 C68.63 78.8 66.61 77.26 66.4 74.75 Q68.73 72.11 71.7 70 Z" fill="#000"/>
<path d="M87.75 70 Q90.72 72.11 93.05 74.75 C92.84 77.26 90.82 78.8 87.75 78.8 C84.68 78.8 82.66 77.26 82.45 74.75 Q84.78 72.11 87.75 70 Z" fill="#000"/>
<path d="M103.8 70 Q106.77 72.11 109.1 74.75 C108.89 77.26 106.87 78.8 103.8 78.8 C100.73 78.8 98.71 77.26 98.5 74.75 Q100.83 72.11 103.8 70 Z" fill="#000"/>
<path d="M15.5 78.6 Q18.41 80.71 20.7 83.35 C20.49 85.86 18.52 87.4 15.5 87.4 C12.48 87.4 10.51 85.86 10.3 83.35 Q12.59 80.71 15.5 78.6 Z" fill="#000"/>
<path d="M31.55 78.6 Q34.46 80.71 36.75 83.35 C36.54 85.86 34.57 87.4 31.55 87.4 C28.53 87.4 26.56 85.86 26.35 83.35 Q28.64 80.71 31.55 78.6 Z" fill="#000"/>
<path d="M47.6 78.6 Q50.51 80.71 52.8 83.35 C52.59 85.86 50.62 87.4 47.6 87.4 C44.58 87.4 42.61 85.86 42.4 83.35 Q44.69 80.71 47.6 78.6 Z" fill="#000"/>
<path d="M63.65 78.6 Q66.56 80.71 68.85 83.35 C68.64 85.86 66.67 87.4 63.65 87.4 C60.63 87.4 58.66 85.86 58.45 83.35 Q60.74 80.71 63.65 78.6 Z" fill="#000"/>
<path d="M79.7 78.6 Q82.61 80.71 84.9 83.35 C84.69 85.86 82.72 87.4 79.7 87.4 C76.68 87.4 74.71 85.86 74.5 83.35 Q76.79 80.71 79.7 78.6 Z" fill="#000"/>
<path d="M95.75 78.6 Q98.66 80.71 100.95 83.35 C100.74 85.86 98.77 87.4 95.75 87.4 C92.73 87.4 90.76 85.86 90.55 83.35 Q92.84 80.71 95.75 78.6 Z" fill="#000"/>
<path d="M23.55 87.1 Q26.46 89.21 28.75 91.85 C28.54 94.36 26.57 95.9 23.55 95.9 C20.53 95.9 18.56 94.36 18.35 91.85 Q20.64 89.21 23.55 87.1 Z" fill="#000"/>
<path d="M39.6 87.1 Q42.51 89.21 44.8 91.85 C44.59 94.36 42.62 95.9 39.6 95.9 C36.58 95.9 34.61 94.36 34.4 91.85 Q36.69 89.21 39.6 87.1 Z" fill="#000"/>
<path d="M55.65 87.1 Q58.56 89.21 60.85 91.85 C60.64 94.36 58.67 95.9 55.65 95.9 C52.63 95.9 50.66 94.36 50.45 91.85 Q52.74 89.21 55.65 87.1 Z" fill="#000"/>
<path d="M71.7 87.1 Q74.61 89.21 76.9 91.85 C76.69 94.36 74.72 95.9 71.7 95.9 C68.68 95.9 66.71 94.36 66.5 91.85 Q68.79 89.21 71.7 87.1 Z" fill="#000"/>
<path d="M87.75 87.1 Q90.66 89.21 92.95 91.85 C92.74 94.36 90.77 95.9 87.75 95.9 C84.73 95.9 82.76 94.36 82.55 91.85 Q84.84 89.21 87.75 87.1 Z" fill="#000"/>
</g>
<g clip-path="url(#rr)">
<rect x="28" y="10" width="220" height="82" fill="#1565c0"/>
<path d="M151.15 7.4 Q154.45 9.42 157.05 11.94 C156.81 14.33 154.57 15.8 151.15 15.8 C147.73 15.8 145.49 14.33 145.25 11.94 Q147.85 9.42 151.15 7.4 Z" fill="#000"/>
<path d="M167.2 7.4 Q170.5 9.42 173.1 11.94 C172.86 14.33 170.62 15.8 167.2 15.8 C163.78 15.8 161.54 14.33 161.3 11.94 Q163.9 9.42 167.2 7.4 Z" fill="#000"/>
<path d="M183.25 7.4 Q186.55 9.42 189.15 11.94 C188.91 14.33 186.67 15.8 183.25 15.8 C179.83 15.8 177.59 14.33 177.35 11.94 Q179.95 9.42 183.25 7.4 Z" fill="#000"/>
<path d="M199.3 7.4 Q202.6 9.42 205.2 11.94 C204.96 14.33 202.72 15.8 199.3 15.8 C195.88 15.8 193.64 14.33 193.4 11.94 Q196 9.42 199.3 7.4 Z" fill="#000"/>
<path d="M215.35 7.4 Q218.65 9.42 221.25 11.94 C221.01 14.33 218.77 15.8 215.35 15.8 C211.93 15.8 209.69 14.33 209.45 11.94 Q212.05 9.42 215.35 7.4 Z" fill="#000"/>
<path d="M231.4 7.4 Q234.7 9.42 237.3 11.94 C237.06 14.33 234.82 15.8 231.4 15.8 C227.98 15.8 225.74 14.33 225.5 11.94 Q228.1 9.42 231.4 7.4 Z" fill="#000"/>
<path d="M247.45 7.4 Q250.75 9.42 253.35 11.94 C253.11 14.33 250.87 15.8 247.45 15.8 C244.03 15.8 241.79 14.33 241.55 11.94 Q244.15 9.42 247.45 7.4 Z" fill="#000"/>
<path d="M159.15 15.25 Q162.43 17.05 165 19.3 C164.77 21.44 162.54 22.75 159.15 22.75 C155.76 22.75 153.53 21.44 153.3 19.3 Q155.87 17.05 159.15 15.25 Z" fill="#000"/>
<path d="M175.2 15.25 Q178.48 17.05 181.05 19.3 C180.82 21.44 178.59 22.75 175.2 22.75 C171.81 22.75 169.58 21.44 169.35 19.3 Q171.92 17.05 175.2 15.25 Z" fill="#000"/>
<path d="M191.25 15.25 Q194.53 17.05 197.1 19.3 C196.87 21.44 194.64 22.75 191.25 22.75 C187.86 22.75 185.63 21.44 185.4 19.3 Q187.97 17.05 191.25 15.25 Z" fill="#000"/>
<path d="M207.3 15.25 Q210.58 17.05 213.15 19.3 C212.92 21.44 210.69 22.75 207.3 22.75 C203.91 22.75 201.68 21.44 201.45 19.3 Q204.02 17.05 207.3 15.25 Z" fill="#000"/>
<path d="M223.35 15.25 Q226.63 17.05 229.2 19.3 C228.97 21.44 226.74 22.75 223.35 22.75 C219.96 22.75 217.73 21.44 217.5 19.3 Q220.07 17.05 223.35 15.25 Z" fill="#000"/>
<path d="M239.4 15.25 Q242.68 17.05 245.25 19.3 C245.02 21.44 242.79 22.75 239.4 22.75 C236.01 22.75 233.78 21.44 233.55 19.3 Q236.12 17.05 239.4 15.25 Z" fill="#000"/>
<path d="M167.2 20.7 Q170.31 22.91 172.75 25.67 C172.53 28.29 170.42 29.9 167.2 29.9 C163.98 29.9 161.87 28.29 161.65 25.67 Q164.09 22.91 167.2 20.7 Z" fill="#000"/>
<path d="M183.25 20.7 Q186.36 22.91 188.8 25.67 C188.58 28.29 186.47 29.9 183.25 29.9 C180.03 29.9 177.92 28.29 177.7 25.67 Q180.14 22.91 183.25 20.7 Z" fill="#000"/>
<path d="M199.3 20.7 Q202.41 22.91 204.85 25.67 C204.63 28.29 202.52 29.9 199.3 29.9 C196.08 29.9 193.97 28.29 193.75 25.67 Q196.19 22.91 199.3 20.7 Z" fill="#000"/>
<path d="M215.35 20.7 Q218.46 22.91 220.9 25.67 C220.68 28.29 218.57 29.9 215.35 29.9 C212.13 29.9 210.02 28.29 209.8 25.67 Q212.24 22.91 215.35 20.7 Z" fill="#000"/>
<path d="M231.4 20.7 Q234.51 22.91 236.95 25.67 C236.73 28.29 234.62 29.9 231.4 29.9 C228.18 29.9 226.07 28.29 225.85 25.67 Q228.29 22.91 231.4 20.7 Z" fill="#000"/>
<path d="M247.45 20.7 Q250.56 22.91 253 25.67 C252.78 28.29 250.67 29.9 247.45 29.9 C244.23 29.9 242.12 28.29 241.9 25.67 Q244.34 22.91 247.45 20.7 Z" fill="#000"/>
<path d="M175.2 26.7 Q178.87 29.44 181.75 32.86 C181.49 36.11 179 38.1 175.2 38.1 C171.4 38.1 168.91 36.11 168.65 32.86 Q171.53 29.44 175.2 26.7 Z" fill="#000"/>
<path d="M191.25 26.7 Q194.92 29.44 197.8 32.86 C197.54 36.11 195.05 38.1 191.25 38.1 C187.45 38.1 184.96 36.11 184.7 32.86 Q187.58 29.44 191.25 26.7 Z" fill="#000"/>
<path d="M207.3 26.7 Q210.97 29.44 213.85 32.86 C213.59 36.11 211.1 38.1 207.3 38.1 C203.5 38.1 201.01 36.11 200.75 32.86 Q203.63 29.44 207.3 26.7 Z" fill="#000"/>
<path d="M223.35 26.7 Q227.02 29.44 229.9 32.86 C229.64 36.11 227.15 38.1 223.35 38.1 C219.55 38.1 217.06 36.11 216.8 32.86 Q219.68 29.44 223.35 26.7 Z" fill="#000"/>
<path d="M239.4 26.7 Q243.07 29.44 245.95 32.86 C245.69 36.11 243.2 38.1 239.4 38.1 C235.6 38.1 233.11 36.11 232.85 32.86 Q235.73 29.44 239.4 26.7 Z" fill="#000"/>
<path d="M183.25 36.2 Q186.53 38.65 189.1 41.71 C188.87 44.62 186.64 46.4 183.25 46.4 C179.86 46.4 177.63 44.62 177.4 41.71 Q179.97 38.65 183.25 36.2 Z" fill="#000"/>
<path d="M199.3 36.2 Q202.58 38.65 205.15 41.71 C204.92 44.62 202.69 46.4 199.3 46.4 C195.91 46.4 193.68 44.62 193.45 41.71 Q196.02 38.65 199.3 36.2 Z" fill="#000"/>
<path d="M215.35 36.2 Q218.63 38.65 221.2 41.71 C220.97 44.62 218.74 46.4 215.35 46.4 C211.96 46.4 209.73 44.62 209.5 41.71 Q212.07 38.65 215.35 36.2 Z" fill="#000"/>
<path d="M231.4 36.2 Q234.68 38.65 237.25 41.71 C237.02 44.62 234.79 46.4 231.4 46.4 C228.01 46.4 225.78 44.62 225.55 41.71 Q228.12 38.65 231.4 36.2 Z" fill="#000"/>
<path d="M247.45 36.2 Q250.73 38.65 253.3 41.71 C253.07 44.62 250.84 46.4 247.45 46.4 C244.06 46.4 241.83 44.62 241.6 41.71 Q244.17 38.65 247.45 36.2 Z" fill="#000"/>
<path d="M191.25 44.7 Q194.69 47.15 197.4 50.21 C197.15 53.12 194.82 54.9 191.25 54.9 C187.68 54.9 185.35 53.12 185.1 50.21 Q187.81 47.15 191.25 44.7 Z" fill="#000"/>
<path d="M207.3 44.7 Q210.74 47.15 213.45 50.21 C213.2 53.12 210.87 54.9 207.3 54.9 C203.73 54.9 201.4 53.12 201.15 50.21 Q203.86 47.15 207.3 44.7 Z" fill="#000"/>
<path d="M223.35 44.7 Q226.79 47.15 229.5 50.21 C229.25 53.12 226.92 54.9 223.35 54.9 C219.78 54.9 217.45 53.12 217.2 50.21 Q219.91 47.15 223.35 44.7 Z" fill="#000"/>
<path d="M239.4 44.7 Q242.84 47.15 245.55 50.21 C245.3 53.12 242.97 54.9 239.4 54.9 C235.83 54.9 233.5 53.12 233.25 50.21 Q235.96 47.15 239.4 44.7 Z" fill="#000"/>
<path d="M199.3 53.1 Q202.69 55.5 205.35 58.5 C205.11 61.35 202.81 63.1 199.3 63.1 C195.79 63.1 193.49 61.35 193.25 58.5 Q195.91 55.5 199.3 53.1 Z" fill="#000"/>
<path d="M215.35 53.1 Q218.74 55.5 221.4 58.5 C221.16 61.35 218.86 63.1 215.35 63.1 C211.84 63.1 209.54 61.35 209.3 58.5 Q211.96 55.5 215.35 53.1 Z" fill="#000"/>
<path d="M231.4 53.1 Q234.79 55.5 237.45 58.5 C237.21 61.35 234.91 63.1 231.4 63.1 C227.89 63.1 225.59 61.35 225.35 58.5 Q228.01 55.5 231.4 53.1 Z" fill="#000"/>
<path d="M247.45 53.1 Q250.84 55.5 253.5 58.5 C253.26 61.35 250.96 63.1 247.45 63.1 C243.94 63.1 241.64 61.35 241.4 58.5 Q244.06 55.5 247.45 53.1 Z" fill="#000"/>
<path d="M207.3 61.2 Q210.63 63.55 213.25 66.49 C213.01 69.29 210.75 71 207.3 71 C203.85 71 201.59 69.29 201.35 66.49 Q203.97 63.55 207.3 61.2 Z" fill="#000"/>
<path d="M223.35 61.2 Q226.68 63.55 229.3 66.49 C229.06 69.29 226.8 71 223.35 71 C219.9 71 217.64 69.29 217.4 66.49 Q220.02 63.55 223.35 61.2 Z" fill="#000"/>
<path d="M239.4 61.2 Q242.73 63.55 245.35 66.49 C245.11 69.29 242.85 71 239.4 71 C235.95 71 233.69 69.29 233.45 66.49 Q236.07 63.55 239.4 61.2 Z" fill="#000"/>
<path d="M215.35 69.8 Q218.68 72.15 221.3 75.09 C221.06 77.89 218.8 79.6 215.35 79.6 C211.9 79.6 209.64 77.89 209.4 75.09 Q212.02 72.15 215.35 69.8 Z" fill="#000"/>
<path d="M231.4 69.8 Q234.73 72.15 237.35 75.09 C237.11 77.89 234.85 79.6 231.4 79.6 C227.95 79.6 225.69 77.89 225.45 75.09 Q228.07 72.15 231.4 69.8 Z" fill="#000"/>
<path d="M247.45 69.8 Q250.78 72.15 253.4 75.09 C253.16 77.89 250.9 79.6 247.45 79.6 C244 79.6 241.74 77.89 241.5 75.09 Q244.12 72.15 247.45 69.8 Z" fill="#000"/>
<path d="M223.35 78.4 Q226.63 80.75 229.2 83.69 C228.97 86.49 226.74 88.2 223.35 88.2 C219.96 88.2 217.73 86.49 217.5 83.69 Q220.07 80.75 223.35 78.4 Z" fill="#000"/>
<path d="M239.4 78.4 Q242.68 80.75 245.25 83.69 C245.02 86.49 242.79 88.2 239.4 88.2 C236.01 88.2 233.78 86.49 233.55 83.69 Q236.12 80.75 239.4 78.4 Z" fill="#000"/>
<path d="M231.4 86.9 Q234.68 89.25 237.25 92.19 C237.02 94.99 234.79 96.7 231.4 96.7 C228.01 96.7 225.78 94.99 225.55 92.19 Q228.12 89.25 231.4 86.9 Z" fill="#000"/>
<path d="M247.45 86.9 Q250.73 89.25 253.3 92.19 C253.07 94.99 250.84 96.7 247.45 96.7 C244.06 96.7 241.83 94.99 241.6 92.19 Q244.17 89.25 247.45 86.9 Z" fill="#000"/>
</g>
<polygon points="119.4,51.2 161.67,88.4 82.2,88.4" fill="#000"/>
<polygon points="157.9,12.8 243.01,89.4 81.3,89.4" fill="#000"/>
<path d="M28 11 a1 1 0 0 1 1 -1 H244.9 a1 1 0 0 1 1 1 V12.8 H28z" fill="#173f8a"/>
<rect x="28" y="10.5" width="3.1" height="86.3" fill="#173f8a"/>
<rect x="242.8" y="10.5" width="3.1" height="86.3" fill="#173f8a"/>
<rect x="28" y="87.8" width="75.9" height="9" fill="#173f8a"/>
<rect x="93" y="85" width="10.9" height="6" fill="#173f8a"/>
<rect x="31" y="91.2" width="47" height="2.2" fill="#000"/>
<polygon points="157.9,12.8 157.9,16.1 85.5,88.5 82.2,88.5" fill="#173f8a"/>
<polygon points="157.9,22 157.9,25.4 121.3,62 117.9,62" fill="#173f8a"/>
<polygon points="157.9,27.3 157.9,31.3 125.2,64 121.2,64" fill="#fff"/>
<polygon points="157.9,31.3 157.9,35 126.9,66 123.2,66" fill="#90caf9"/>
<rect x="214.2" y="85" width="31.7" height="11.8" fill="#173f8a"/>
<polygon points="157.9,16.1 157.9,22 231.01,87.8 237.57,87.8" fill="#000"/>
<polygon points="157.9,12.8 157.9,16.1 239.46,89.5 243.12,89.5" fill="#173f8a"/>
<polygon points="157.9,22 157.9,25.4 231.34,91.5 235.12,91.5" fill="#173f8a"/>
<polygon points="157.9,27.3 157.9,31.3 217.57,85 222.01,85" fill="#fff"/>
<polygon points="157.9,31.3 157.9,35 213.46,85 217.57,85" fill="#90caf9"/>
<polygon points="154.9,35.2 157.9,35 160.9,35.2 157.9,38.2" fill="#000" opacity="0"/>
<polygon points="217,88.1 226.3,88.1 230.6,91 243,91 243,94 217,94" fill="#000"/>
<polygon points="119.4,51.2 161.67,88.4 105,88.4 105,65.6" fill="#000"/>
<rect x="135.3" y="85.4" width="27.2" height="11.6" fill="#173f8a"/>
<polygon points="157.9,12.8 157.9,16.1 85.5,88.5 82.2,88.5" fill="#173f8a"/>
<polygon points="119.4,51.2 119.4,54.9 158.15,89 162.35,89" fill="#173f8a"/>
<polygon points="119.4,59.25 119.4,63 90.9,91.5 87.15,91.5" fill="#173f8a"/>
<polygon points="119.4,59.25 119.4,63 151.56,91.3 155.82,91.3" fill="#173f8a"/>
<polygon points="138.4,88.5 146.6,88.5 150.4,91.2 159.4,91.2 159.4,93.9 138.4,93.9" fill="#000"/>
<polygon points="81.2,93.7 101,93.7 101,88.1 94.2,88.1 90.6,91.5 81.2,91.5" fill="#000"/>
<ellipse cx="157.9" cy="53.3" rx="12.4" ry="12.3" fill="#fff"/>
<rect x="152.3" y="45.95" width="12.3" height="1.1" fill="#111"/>
<rect x="150" y="49.85" width="16.8" height="1.1" fill="#111"/>
<rect x="149.2" y="53.85" width="18.6" height="1.1" fill="#111"/>
<rect x="150.2" y="58.15" width="16.4" height="1.1" fill="#111"/>
<rect x="156" y="62" width="5" height="0.8" fill="#aaa"/>
<rect x="39.6" y="96.8" width="3.2" height="160" fill="#fff"/>
<rect x="94.1" y="96.8" width="3.1" height="160" fill="#fff"/>
<rect x="42.8" y="96.8" width="3.2" height="2.2" fill="#90caf9"/>
<rect x="91" y="96.8" width="3.1" height="2.2" fill="#90caf9"/>
<path d="M45.9 96.8 H91 V128 a1.5 1.5 0 0 1 -1.5 1.5 H47.4 a1.5 1.5 0 0 1 -1.5 -1.5z" fill="#fff"/>
<rect x="59.3" y="96.8" width="18.8" height="29.2" fill="#607d8b"/>
<rect x="48.6" y="96.75" width="7.6" height="1.3" fill="#111"/>
<rect x="48.6" y="100.75" width="7.6" height="1.3" fill="#111"/>
<rect x="48.6" y="105.15" width="7.6" height="1.3" fill="#111"/>
<rect x="48.6" y="109.25" width="7.6" height="1.3" fill="#111"/>
<rect x="48.6" y="113.25" width="7.6" height="1.3" fill="#111"/>
<rect x="48.6" y="117.25" width="7.6" height="1.3" fill="#111"/>
<rect x="48.6" y="121.25" width="7.6" height="1.3" fill="#111"/>
<rect x="48.6" y="124.95" width="7.6" height="1.3" fill="#111"/>
<rect x="81.2" y="96.75" width="6.7" height="1.3" fill="#111"/>
<rect x="81.2" y="100.75" width="6.7" height="1.3" fill="#111"/>
<rect x="81.2" y="105.15" width="6.7" height="1.3" fill="#111"/>
<rect x="81.2" y="109.25" width="6.7" height="1.3" fill="#111"/>
<rect x="81.2" y="113.25" width="6.7" height="1.3" fill="#111"/>
<rect x="81.2" y="117.25" width="6.7" height="1.3" fill="#111"/>
<rect x="81.2" y="121.25" width="6.7" height="1.3" fill="#111"/>
<rect x="81.2" y="124.95" width="6.7" height="1.3" fill="#111"/>
<clipPath id="g1"><rect x="59.3" y="96.8" width="18.8" height="29.2"/></clipPath><g clip-path="url(#g1)">
<path d="M64.5 103.5 L73.5 97" fill="none" stroke="#aab4ba" stroke-width="1.6" stroke-linejoin="round" stroke-linecap="round"/>
<path d="M69.5 114.5 L78.5 106" fill="none" stroke="#b8bcc4" stroke-width="1.6" stroke-linejoin="round" stroke-linecap="round"/>
<path d="M76.2 96.5 L75 108 L74 118 L75.8 126.5" fill="none" stroke="#c06272" stroke-width="2.5" stroke-linejoin="round" stroke-linecap="round"/>
<path d="M59.5 104.6 L66.5 104.2" fill="none" stroke="#d2e6f4" stroke-width="2.2" stroke-linejoin="round" stroke-linecap="round"/>
<path d="M64.2 105 L64 126" fill="none" stroke="#d2e6f4" stroke-width="2.4" stroke-linejoin="round" stroke-linecap="round"/>
<path d="M64.5 113.5 L68 113 L68 121 L65 121.5" fill="none" stroke="#dcecf8" stroke-width="1.8" stroke-linejoin="round" stroke-linecap="round"/>
</g>
<rect x="42.8" y="163.4" width="51.3" height="2.7" fill="#90caf9"/>
<rect x="42.8" y="166" width="51.3" height="2.9" fill="#fff"/>
<rect x="42.8" y="175" width="51.3" height="2.8" fill="#fff"/>
<rect x="45.9" y="189.9" width="45.5" height="35.7" fill="#fff" rx="2"/>
<rect x="58.4" y="193" width="20.5" height="29.5" fill="#607d8b"/>
<rect x="71.8" y="211" width="7.1" height="11.5" fill="#788f9b"/>
<rect x="48.6" y="192.85" width="7.4" height="1.3" fill="#111"/>
<rect x="48.6" y="197.25" width="7.4" height="1.3" fill="#111"/>
<rect x="48.6" y="201.35" width="7.4" height="1.3" fill="#111"/>
<rect x="48.6" y="205.35" width="7.4" height="1.3" fill="#111"/>
<rect x="48.6" y="209.35" width="7.4" height="1.3" fill="#111"/>
<rect x="48.6" y="213.35" width="7.4" height="1.3" fill="#111"/>
<rect x="48.6" y="217.35" width="7.4" height="1.3" fill="#111"/>
<rect x="48.6" y="221.55" width="7.4" height="1.3" fill="#111"/>
<rect x="81.6" y="192.85" width="6.7" height="1.3" fill="#111"/>
<rect x="81.6" y="197.25" width="6.7" height="1.3" fill="#111"/>
<rect x="81.6" y="201.35" width="6.7" height="1.3" fill="#111"/>
<rect x="81.6" y="205.35" width="6.7" height="1.3" fill="#111"/>
<rect x="81.6" y="209.35" width="6.7" height="1.3" fill="#111"/>
<rect x="81.6" y="213.35" width="6.7" height="1.3" fill="#111"/>
<rect x="81.6" y="217.35" width="6.7" height="1.3" fill="#111"/>
<rect x="81.6" y="221.55" width="6.7" height="1.3" fill="#111"/>
<clipPath id="g2"><rect x="58.4" y="193" width="20.5" height="29.5"/></clipPath><g clip-path="url(#g2)">
<rect x="58.4" y="197" width="19.8" height="3.4" fill="#a070c8"/>
<rect x="64.6" y="200" width="3.6" height="22.5" fill="#a070c8"/>
<path d="M59 222.5 L60 210" fill="none" stroke="#a070c8" stroke-width="2" stroke-linejoin="round" stroke-linecap="round"/>
<path d="M59.3 221.4 L78.2 205" fill="none" stroke="#c6bedc" stroke-width="1.8" stroke-linejoin="round" stroke-linecap="round"/>
<path d="M61 211.3 L68.2 205.5" fill="none" stroke="#c6bedc" stroke-width="1.6" stroke-linejoin="round" stroke-linecap="round"/>
<path d="M71.8 202.4 L78.6 197" fill="none" stroke="#c6bedc" stroke-width="1.8" stroke-linejoin="round" stroke-linecap="round"/>
</g>
<path d="M110.3 117.1 V85.5 A9.22 9.22 0 0 1 128.75 85.5 V117.1z" fill="#fff"/>
<path d="M113.2 106.4 V86 A6.35 6.35 0 0 1 125.9 86 V106.4z" fill="#90caf9"/>
<path d="M116 104 V85.8 A3.5 3.5 0 0 1 123 85.8 V104z" fill="#000"/>
<rect x="113.2" y="109.5" width="12.7" height="4.5" fill="#000"/>
<rect x="141.2" y="97" width="3.2" height="62" fill="#fff"/>
<rect x="150.5" y="97" width="3.2" height="62" fill="#fff"/>
<rect x="155" y="97" width="3.3" height="62" fill="#90caf9"/>
<rect x="218" y="96.8" width="3.2" height="62" fill="#90caf9"/>
<rect x="227" y="96.8" width="3.1" height="62" fill="#fff"/>
<rect x="231.2" y="96.8" width="2.9" height="62" fill="#fff"/>
<rect x="160.4" y="102.3" width="55.85" height="35.4" fill="#fff" rx="2"/>
<rect x="173" y="105.4" width="30.75" height="29.5" fill="#5f7985"/>
<rect x="163" y="105.15" width="6.8" height="1.3" fill="#111"/>
<rect x="163" y="109.65" width="6.8" height="1.3" fill="#111"/>
<rect x="163" y="113.35" width="6.8" height="1.3" fill="#111"/>
<rect x="163" y="117.65" width="6.8" height="1.3" fill="#111"/>
<rect x="163" y="121.35" width="6.8" height="1.3" fill="#111"/>
<rect x="163" y="125.35" width="6.8" height="1.3" fill="#111"/>
<rect x="163" y="129.75" width="6.8" height="1.3" fill="#111"/>
<rect x="163" y="133.35" width="6.8" height="1.3" fill="#111"/>
<rect x="206.25" y="105.15" width="7.35" height="1.3" fill="#111"/>
<rect x="206.25" y="109.65" width="7.35" height="1.3" fill="#111"/>
<rect x="206.25" y="113.35" width="7.35" height="1.3" fill="#111"/>
<rect x="206.25" y="117.65" width="7.35" height="1.3" fill="#111"/>
<rect x="206.25" y="121.35" width="7.35" height="1.3" fill="#111"/>
<rect x="206.25" y="125.35" width="7.35" height="1.3" fill="#111"/>
<rect x="206.25" y="129.75" width="7.35" height="1.3" fill="#111"/>
<rect x="206.25" y="133.35" width="7.35" height="1.3" fill="#111"/>
<clipPath id="g3"><rect x="173" y="105.4" width="30.75" height="29.5"/></clipPath><g clip-path="url(#g3)">
<rect x="173" y="110.2" width="24" height="2" fill="#9a9aa6"/>
<rect x="188" y="111" width="2.2" height="24" fill="#9e9ea8"/>
<path d="M173.4 134.4 L190.4 120.6" fill="none" stroke="#c2c8d0" stroke-width="2" stroke-linejoin="round" stroke-linecap="round"/>
<path d="M179.6 115 L193.5 106.3" fill="none" stroke="#b8c0c8" stroke-width="2" stroke-linejoin="round" stroke-linecap="round"/>
<path d="M195 116 L200.6 111.6" fill="none" stroke="#c2c8d0" stroke-width="2" stroke-linejoin="round" stroke-linecap="round"/>
</g>
<path d="M101.5 256 V160.2 A17.5 17.5 0 0 1 136.5 160.2 V170" fill="none" stroke="#90caf9" stroke-width="3" stroke-linejoin="miter" stroke-linecap="butt"/>
<path d="M104.9 189.8 V160.4 A13.85 13.85 0 0 1 132.6 160.4 V189.8z" fill="#fff"/>
<path d="M108 187.1 V160.4 A10.75 10.75 0 0 1 129.5 160.4 V187.1z" fill="#607d8b"/>
<clipPath id="g4"><path d="M108 187.1 V160.4 A10.75 10.75 0 0 1 129.5 160.4 V187.1z"/></clipPath><g clip-path="url(#g4)">
<rect x="108.5" y="156.6" width="20" height="2.6" fill="#98a6dc"/>
<rect x="112.2" y="158" width="3.2" height="29" fill="#98a6dc"/>
<rect x="118.5" y="163" width="5" height="22" fill="#9c9478"/>
<path d="M124 158 L120.5 168" fill="none" stroke="#aab4e4" stroke-width="2.4" stroke-linejoin="round" stroke-linecap="round"/>
<path d="M110 171.5 L116.5 166.5" fill="none" stroke="#c8cce0" stroke-width="1.8" stroke-linejoin="round" stroke-linecap="round"/>
<path d="M109 186.5 L117 176" fill="none" stroke="#c0c8e0" stroke-width="1.8" stroke-linejoin="round" stroke-linecap="round"/>
</g>
<rect x="103" y="192.5" width="18" height="3.1" fill="#90caf9"/>
<rect x="103" y="218.4" width="18" height="2.7" fill="#90caf9"/>
<rect x="104.9" y="197.9" width="16" height="19.1" fill="#fff" rx="1"/>
<rect x="108" y="201" width="14" height="13.2" fill="#000"/>
<rect x="104.9" y="222.5" width="16" height="23.2" fill="#fff" rx="1"/>
<rect x="108" y="225.6" width="14" height="17.4" fill="#607d8b"/>
<path d="M108.5 241 L116 229" fill="none" stroke="#b4bce0" stroke-width="2" stroke-linejoin="round" stroke-linecap="round"/>
<path d="M112.5 226 L115.5 232" fill="none" stroke="#96a4dc" stroke-width="2" stroke-linejoin="round" stroke-linecap="round"/>
<rect x="120" y="186" width="130" height="70" fill="#000"/>
<rect x="172" y="189.9" width="57.6" height="35.7" fill="#fff" rx="2.5"/>
<rect x="175.2" y="193" width="25.2" height="29.4" fill="#607d8b"/>
<rect x="203.3" y="193" width="23.2" height="29.4" fill="#607d8b"/>
<clipPath id="g5"><rect x="175.2" y="193" width="51.3" height="29.4"/></clipPath><g clip-path="url(#g5)">
<path d="M194.4 193 q-1.6 5 -0.2 10 q1.4 5 -0.6 10 q-0.8 5 0.8 9.4" fill="none" stroke="#8c9cdc" stroke-width="2.2" stroke-linejoin="miter" stroke-linecap="butt"/>
<path d="M209.6 193 q-1.6 5 -0.2 10 q1.4 5 -0.6 10 q-0.8 5 0.8 9.4" fill="none" stroke="#8c9cdc" stroke-width="2.2" stroke-linejoin="miter" stroke-linecap="butt"/>
<path d="M221 193 q-1.6 5 -0.2 10 q1.4 5 -0.6 10 q-0.8 5 0.8 9.4" fill="none" stroke="#8c9cdc" stroke-width="2.2" stroke-linejoin="miter" stroke-linecap="butt"/>
<rect x="215.8" y="193" width="2.7" height="19.5" fill="#8f8a70"/>
<rect x="212.7" y="212.2" width="7.5" height="2.3" fill="#8f8a70"/>
<rect x="189" y="214.9" width="4" height="7.5" fill="#8f8a70"/>
<path d="M189 201.5 L197 193.9" fill="none" stroke="#c8d0e0" stroke-width="1.8" stroke-linejoin="round" stroke-linecap="round"/>
<path d="M189 212 L195.25 206.4" fill="none" stroke="#c8d0e0" stroke-width="1.8" stroke-linejoin="round" stroke-linecap="round"/>
<path d="M214 210.4 L226.4 199.2" fill="none" stroke="#c8d0e0" stroke-width="1.8" stroke-linejoin="round" stroke-linecap="round"/>
<path d="M214.9 222.2 L226.4 212.6" fill="none" stroke="#c8d0e0" stroke-width="1.8" stroke-linejoin="round" stroke-linecap="round"/>
<circle cx="208.4" cy="213.5" r="1.2" fill="#c8d4e4"/>
<rect x="200.4" y="193" width="2.9" height="29.4" fill="#fff"/>
</g>
<rect x="188.7" y="240.75" width="46.3" height="2.7" fill="#90caf9"/>
<rect x="188.7" y="243.4" width="46.3" height="3.1" fill="#d8d8d8"/>
<rect x="232" y="186.7" width="3" height="60.3" fill="#fff"/>
<rect x="180.5" y="185.8" width="5" height="70.2" fill="#000"/>
<rect x="161.1" y="193.9" width="4" height="49.1" fill="#78909c"/>
<path d="M161.3 205.5 L165 201.5" fill="none" stroke="#b4c0c8" stroke-width="1.6" stroke-linejoin="round" stroke-linecap="round"/>
<path d="M161.3 231 L165 226" fill="none" stroke="#b4c0c8" stroke-width="1.6" stroke-linejoin="round" stroke-linecap="round"/>
<path d="M161.3 240 L165 234.5" fill="none" stroke="#b4c0c8" stroke-width="1.4" stroke-linejoin="round" stroke-linecap="round"/>
<path d="M131 243 V190.9 H166.7 a1.5 1.5 0 0 1 1.5 1.5 V243 H165.1 V194 H161.1 V243 H158 V193.9 H134 V243z" fill="#c8922e"/>
<rect x="150.4" y="210.4" width="6.7" height="20.5" fill="#c8922e" rx="1.6"/>
<rect x="152.9" y="213.6" width="1.9" height="14" fill="#2a1c06"/>
<path d="M145 221.4 C145 219.4 148 218.9 151 219 H156.6 C157.6 219.4 157.6 223.4 156.6 223.8 H153 C151.4 223.4 150 222.4 148.6 223 C146.6 223.8 145 223.4 145 221.4z" fill="#f2b03c"/>
<rect x="168.2" y="240.3" width="9.4" height="2.7" fill="#90caf9"/>
<rect x="130.1" y="243" width="47.5" height="3.1" fill="#fff"/>
<rect x="130.1" y="247.9" width="47.5" height="2.7" fill="#fff"/>
<rect x="130.1" y="252.1" width="47.5" height="2.9" fill="#fff"/>
<rect x="120" y="185" width="3" height="71" fill="#173f8a"/>
<rect x="127.6" y="185" width="3.1" height="71" fill="#173f8a"/>
<rect x="177.5" y="185" width="3" height="71" fill="#173f8a"/>
<rect x="185.5" y="185" width="3.2" height="71" fill="#173f8a"/>
<rect x="235.25" y="185" width="2.65" height="71" fill="#173f8a"/>
<rect x="242.1" y="185" width="3" height="71" fill="#173f8a"/>
<clipPath id="pr"><polygon points="132.2,158.1 234.6,158.1 246.8,178.6 117.2,178.6"/></clipPath><g clip-path="url(#pr)">
<rect x="110" y="158" width="140" height="22" fill="#1565c0"/>
<path d="M111.95 159 L117.65 162.22 Q114.8 164.6 111.95 164.2 Q109.1 164.6 106.25 162.22Z" fill="#000"/>
<path d="M127.8 159 L133.5 162.22 Q130.65 164.6 127.8 164.2 Q124.95 164.6 122.1 162.22Z" fill="#000"/>
<path d="M143.65 159 L149.35 162.22 Q146.5 164.6 143.65 164.2 Q140.8 164.6 137.95 162.22Z" fill="#000"/>
<path d="M159.5 159 L165.2 162.22 Q162.35 164.6 159.5 164.2 Q156.65 164.6 153.8 162.22Z" fill="#000"/>
<path d="M175.35 159 L181.05 162.22 Q178.2 164.6 175.35 164.2 Q172.5 164.6 169.65 162.22Z" fill="#000"/>
<path d="M191.2 159 L196.9 162.22 Q194.05 164.6 191.2 164.2 Q188.35 164.6 185.5 162.22Z" fill="#000"/>
<path d="M207.05 159 L212.75 162.22 Q209.9 164.6 207.05 164.2 Q204.2 164.6 201.35 162.22Z" fill="#000"/>
<path d="M222.9 159 L228.6 162.22 Q225.75 164.6 222.9 164.2 Q220.05 164.6 217.2 162.22Z" fill="#000"/>
<path d="M238.75 159 L244.45 162.22 Q241.6 164.6 238.75 164.2 Q235.9 164.6 233.05 162.22Z" fill="#000"/>
<path d="M254.6 159 L260.3 162.22 Q257.45 164.6 254.6 164.2 Q251.75 164.6 248.9 162.22Z" fill="#000"/>
<path d="M119.65 163.6 L125.35 167.44 Q122.5 170.2 119.65 169.8 Q116.8 170.2 113.95 167.44Z" fill="#000"/>
<path d="M135.5 163.6 L141.2 167.44 Q138.35 170.2 135.5 169.8 Q132.65 170.2 129.8 167.44Z" fill="#000"/>
<path d="M151.35 163.6 L157.05 167.44 Q154.2 170.2 151.35 169.8 Q148.5 170.2 145.65 167.44Z" fill="#000"/>
<path d="M167.2 163.6 L172.9 167.44 Q170.05 170.2 167.2 169.8 Q164.35 170.2 161.5 167.44Z" fill="#000"/>
<path d="M183.05 163.6 L188.75 167.44 Q185.9 170.2 183.05 169.8 Q180.2 170.2 177.35 167.44Z" fill="#000"/>
<path d="M198.9 163.6 L204.6 167.44 Q201.75 170.2 198.9 169.8 Q196.05 170.2 193.2 167.44Z" fill="#000"/>
<path d="M214.75 163.6 L220.45 167.44 Q217.6 170.2 214.75 169.8 Q211.9 170.2 209.05 167.44Z" fill="#000"/>
<path d="M230.6 163.6 L236.3 167.44 Q233.45 170.2 230.6 169.8 Q227.75 170.2 224.9 167.44Z" fill="#000"/>
<path d="M246.45 163.6 L252.15 167.44 Q249.3 170.2 246.45 169.8 Q243.6 170.2 240.75 167.44Z" fill="#000"/>
<path d="M262.3 163.6 L268 167.44 Q265.15 170.2 262.3 169.8 Q259.45 170.2 256.6 167.44Z" fill="#000"/>
<path d="M111.95 169.4 L117.65 173.12 Q114.8 175.8 111.95 175.4 Q109.1 175.8 106.25 173.12Z" fill="#000"/>
<path d="M127.8 169.4 L133.5 173.12 Q130.65 175.8 127.8 175.4 Q124.95 175.8 122.1 173.12Z" fill="#000"/>
<path d="M143.65 169.4 L149.35 173.12 Q146.5 175.8 143.65 175.4 Q140.8 175.8 137.95 173.12Z" fill="#000"/>
<path d="M159.5 169.4 L165.2 173.12 Q162.35 175.8 159.5 175.4 Q156.65 175.8 153.8 173.12Z" fill="#000"/>
<path d="M175.35 169.4 L181.05 173.12 Q178.2 175.8 175.35 175.4 Q172.5 175.8 169.65 173.12Z" fill="#000"/>
<path d="M191.2 169.4 L196.9 173.12 Q194.05 175.8 191.2 175.4 Q188.35 175.8 185.5 173.12Z" fill="#000"/>
<path d="M207.05 169.4 L212.75 173.12 Q209.9 175.8 207.05 175.4 Q204.2 175.8 201.35 173.12Z" fill="#000"/>
<path d="M222.9 169.4 L228.6 173.12 Q225.75 175.8 222.9 175.4 Q220.05 175.8 217.2 173.12Z" fill="#000"/>
<path d="M238.75 169.4 L244.45 173.12 Q241.6 175.8 238.75 175.4 Q235.9 175.8 233.05 173.12Z" fill="#000"/>
<path d="M254.6 169.4 L260.3 173.12 Q257.45 175.8 254.6 175.4 Q251.75 175.8 248.9 173.12Z" fill="#000"/>
<path d="M119.65 174.6 L125.35 177.95 Q122.5 180.4 119.65 180 Q116.8 180.4 113.95 177.95Z" fill="#000"/>
<path d="M135.5 174.6 L141.2 177.95 Q138.35 180.4 135.5 180 Q132.65 180.4 129.8 177.95Z" fill="#000"/>
<path d="M151.35 174.6 L157.05 177.95 Q154.2 180.4 151.35 180 Q148.5 180.4 145.65 177.95Z" fill="#000"/>
<path d="M167.2 174.6 L172.9 177.95 Q170.05 180.4 167.2 180 Q164.35 180.4 161.5 177.95Z" fill="#000"/>
<path d="M183.05 174.6 L188.75 177.95 Q185.9 180.4 183.05 180 Q180.2 180.4 177.35 177.95Z" fill="#000"/>
<path d="M198.9 174.6 L204.6 177.95 Q201.75 180.4 198.9 180 Q196.05 180.4 193.2 177.95Z" fill="#000"/>
<path d="M214.75 174.6 L220.45 177.95 Q217.6 180.4 214.75 180 Q211.9 180.4 209.05 177.95Z" fill="#000"/>
<path d="M230.6 174.6 L236.3 177.95 Q233.45 180.4 230.6 180 Q227.75 180.4 224.9 177.95Z" fill="#000"/>
<path d="M246.45 174.6 L252.15 177.95 Q249.3 180.4 246.45 180 Q243.6 180.4 240.75 177.95Z" fill="#000"/>
<path d="M262.3 174.6 L268 177.95 Q265.15 180.4 262.3 180 Q259.45 180.4 256.6 177.95Z" fill="#000"/>
</g>
<path d="M132.2 158.1 H234.6 L236 160.8 H130.3z" fill="#173f8a"/>
<path d="M132.4 158.6 L117.8 178.6" fill="none" stroke="#173f8a" stroke-width="2.2" stroke-linejoin="round" stroke-linecap="round"/>
<path d="M234.4 158.6 L246.4 178.6" fill="none" stroke="#173f8a" stroke-width="2.2" stroke-linejoin="round" stroke-linecap="round"/>
<rect x="117.3" y="177.8" width="129.7" height="8" fill="#173f8a" rx="1.5"/>
<rect x="119.6" y="180.5" width="125.6" height="2.7" fill="#000"/>
<path d="M30.6 120.6 L33.4 127.2" fill="none" stroke="#5d3a10" stroke-width="4" stroke-linejoin="round" stroke-linecap="round"/>
<path d="M39.4 128.4 L25.8 129.5" fill="none" stroke="#c2650e" stroke-width="2.8" stroke-linejoin="round" stroke-linecap="round"/>
<path d="M25.8 130.6 C26.67 130.87 29.3 131.43 31 132.2 C32.7 132.97 34.63 134.3 36 135.2 C37.37 136.1 38.67 137.2 39.2 137.6" fill="none" stroke="#c2650e" stroke-width="2.6" stroke-linejoin="round" stroke-linecap="round"/>
<path d="M22 108.4 L23.8 106.9 L34.2 106.5 L36.4 113.4 L35.9 122.9 L32.6 123.8 L25.6 119.6Z" fill="none" stroke="#08b008" stroke-width="2.7" stroke-linejoin="round" stroke-linecap="round"/>
<path d="M31.2 219.8 L33.2 224" fill="none" stroke="#5d3a10" stroke-width="4" stroke-linejoin="round" stroke-linecap="round"/>
<path d="M39.2 225.3 L25.6 225.8" fill="none" stroke="#c2650e" stroke-width="2.8" stroke-linejoin="round" stroke-linecap="round"/>
<path d="M25.6 227.2 C26.67 227.43 30.23 227.9 32 228.6 C33.77 229.3 35.17 230.17 36.2 231.4 C37.23 232.63 37.7 234.73 38.2 236 C38.7 237.27 39.03 238.5 39.2 239" fill="none" stroke="#c2650e" stroke-width="2.6" stroke-linejoin="round" stroke-linecap="round"/>
<path d="M23.8 204.4 L36 203.9 L37.2 214 L35 217.4 L29 220.8 L25.6 215.6Z" fill="none" stroke="#08b008" stroke-width="2.7" stroke-linejoin="round" stroke-linecap="round"/>
<path d="M44 247 L50.4 254" fill="none" stroke="#5d3a10" stroke-width="2.6" stroke-linejoin="round" stroke-linecap="round"/>
<path d="M59.3 247 L61 256" fill="none" stroke="#5d3a10" stroke-width="2.8" stroke-linejoin="round" stroke-linecap="round"/>
<path d="M78 252.4 L81.6 255.4 L86 249.7" fill="none" stroke="#5d3a10" stroke-width="2.6" stroke-linejoin="round" stroke-linecap="round"/>
<path d="M95.9 252 L100.4 254.6" fill="none" stroke="#5d3a10" stroke-width="2.4" stroke-linejoin="round" stroke-linecap="round"/>
<path d="M37 240.8 C37.29 239.49 39.02 237.55 40.5 237.4 C41.98 237.25 44.4 240.2 45.9 239.9 C47.4 239.6 47.9 236.47 49.5 235.6 C51.1 234.73 54.2 233.98 55.5 234.7 C56.8 235.42 57.3 238.28 57.3 239.9 C57.3 241.52 55.5 242.77 55.5 244.4 C55.5 246.03 57.3 248.27 57.3 249.7 C57.3 251.13 56.8 252.28 55.5 253 C54.2 253.72 51.55 254.55 49.5 254 C47.45 253.45 44.99 251.16 43.2 249.7 C41.41 248.24 39.78 246.73 38.75 245.25 C37.72 243.77 36.71 242.11 37 240.8Z" fill="none" stroke="#08b008" stroke-width="2.8" stroke-linejoin="round" stroke-linecap="round"/>
<path d="M52.2 238 C52.1 238.75 51.4 241.9 51.6 242.5 C51.8 243.1 53.1 241.75 53.4 241.6" fill="none" stroke="#08b008" stroke-width="1.8" stroke-linejoin="round" stroke-linecap="round"/>
<path d="M58.4 237.4 C59.7 236.82 63.82 235.93 65.5 236.5 C67.18 237.07 68.35 239.63 68.5 240.8 C68.65 241.97 67.78 243.05 66.4 243.5 C65.02 243.95 61.65 244.08 60.2 243.5 C58.75 242.92 58 241.02 57.7 240 C57.4 238.98 57.1 237.98 58.4 237.4Z" fill="none" stroke="#08b008" stroke-width="2.8" stroke-linejoin="round" stroke-linecap="round"/>
<circle cx="66.4" cy="250.8" r="3.1" fill="none" stroke="#08b008" stroke-width="2.2"/>
<circle cx="66.6" cy="250.8" r="0.7" fill="#08b008"/>
<path d="M71.8 240.1 C72.53 239.08 75.32 238.3 77.1 238.3 C78.88 238.3 80.7 240.4 82.5 240.1 C84.3 239.8 86.42 236.53 87.9 236.5 C89.38 236.47 90.37 238.58 91.4 239.9 C92.43 241.22 94.4 243.37 94.1 244.4 C93.8 245.43 91.53 245.52 89.6 246.1 C87.67 246.68 84.58 247.03 82.5 247.9 C80.42 248.77 78.58 251.15 77.1 251.3 C75.62 251.45 74.33 249.95 73.6 248.8 C72.87 247.65 73 245.85 72.7 244.4 C72.4 242.95 71.07 241.12 71.8 240.1Z" fill="none" stroke="#08b008" stroke-width="2.8" stroke-linejoin="round" stroke-linecap="round"/>
<path d="M94.1 239.2 C95.15 237.45 98.62 236.98 100.4 237.4 C102.18 237.82 103.2 240.25 104.8 241.7 C106.4 243.15 109.28 244.5 110 246.1 C110.72 247.7 109.97 250.13 109.1 251.3 C108.23 252.47 106.55 253.37 104.8 253.1 C103.05 252.83 100.38 250.57 98.6 249.7 C96.82 248.83 94.85 249.65 94.1 247.9 C93.35 246.15 93.05 240.95 94.1 239.2Z" fill="none" stroke="#08b008" stroke-width="2.8" stroke-linejoin="round" stroke-linecap="round"/>
<polygon points="196.6,247.6 199.7,256 201,256 204.4,247.6 200.5,250.5" fill="#5d3a10"/>
<polygon points="213.6,256 219.4,249.5 226,256" fill="#74400f"/>
<path d="M189.9 238.1 C190.27 236.8 190.52 235.87 191.7 235.6 C192.88 235.33 195.58 236.87 197 236.5 C198.42 236.13 199 233.55 200.2 233.4 C201.4 233.25 202.97 234.08 204.2 235.6 C205.43 237.12 206.97 240.75 207.6 242.5 C208.23 244.25 208.5 245.42 208 246.1 C207.5 246.78 205.83 247.02 204.6 246.6 C203.37 246.18 201.93 243.95 200.6 243.6 C199.27 243.25 197.78 243.52 196.6 244.5 C195.42 245.48 194.53 248.82 193.5 249.5 C192.47 250.18 191.07 249.62 190.4 248.6 C189.73 247.58 189.58 245.15 189.5 243.4 C189.42 241.65 189.53 239.4 189.9 238.1Z" fill="none" stroke="#08b008" stroke-width="2.4" stroke-linejoin="round" stroke-linecap="round"/>
<path d="M216.7 238.3 C217.38 236.75 218.62 235.35 220.25 235.2 C221.88 235.05 224.59 236.62 226.5 237.4 C228.41 238.18 230.69 238.45 231.7 239.9 C232.71 241.35 232.67 244.05 232.55 246.1 C232.43 248.15 232.01 251.05 231 252.2 C229.99 253.35 227.85 253.72 226.5 253 C225.15 252.28 224.08 249.02 222.9 247.9 C221.72 246.78 220.43 245.88 219.4 246.3 C218.37 246.72 217.87 249.57 216.7 250.4 C215.53 251.23 213.42 251.72 212.4 251.3 C211.38 250.88 210.48 248.95 210.6 247.9 C210.72 246.85 212.17 245.57 213.1 245 C214.03 244.43 215.6 245.62 216.2 244.5 C216.8 243.38 216.02 239.85 216.7 238.3Z" fill="none" stroke="#08b008" stroke-width="2.4" stroke-linejoin="round" stroke-linecap="round"/>
<circle cx="214.4" cy="248.8" r="0.8" fill="#08b008"/>
</g>
</svg>
<div class="klogo" style="left:3.8px;top:5.7px;width:16.4px;height:16.4px"><svg width="20.5" height="20.5" viewBox="-10 -10 20 20" style="position:absolute;left:-2.05px;top:-2.05px;overflow:visible"><path d="M-9 -7.8 L-0.2 -0.8" stroke="#3c3c3c" stroke-width="2.5" stroke-linecap="round"/><path d="M0.2 -0.4 L2.2 1.2" stroke="#b8b8b8" stroke-width="2.3" stroke-linecap="butt"/><path d="M2 0.6 C4.2 1 5.2 2.6 4.6 5.2 C4 4.6 2.6 4 1.4 2.4z" fill="#1c1c1c"/></svg></div>
<div class="klogo" style="left:321px;top:138px;width:16px;height:16px"><svg width="20" height="20" viewBox="-10 -10 20 20" style="position:absolute;left:-2px;top:-2px;overflow:visible"><path d="M-9 -7.8 L-0.2 -0.8" stroke="#3c3c3c" stroke-width="2.5" stroke-linecap="round"/><path d="M0.2 -0.4 L2.2 1.2" stroke="#b8b8b8" stroke-width="2.3" stroke-linecap="butt"/><path d="M2 0.6 C4.2 1 5.2 2.6 4.6 5.2 C4 4.6 2.6 4 1.4 2.4z" fill="#1c1c1c"/></svg></div>
<div class="klogo" style="left:1129px;top:137px;width:16px;height:16px"><svg width="20" height="20" viewBox="-10 -10 20 20" style="position:absolute;left:-2px;top:-2px;overflow:visible"><path d="M-9 -7.8 L-0.2 -0.8" stroke="#3c3c3c" stroke-width="2.5" stroke-linecap="round"/><path d="M0.2 -0.4 L2.2 1.2" stroke="#b8b8b8" stroke-width="2.3" stroke-linecap="butt"/><path d="M2 0.6 C4.2 1 5.2 2.6 4.6 5.2 C4 4.6 2.6 4 1.4 2.4z" fill="#1c1c1c"/></svg></div>
</body></html>
